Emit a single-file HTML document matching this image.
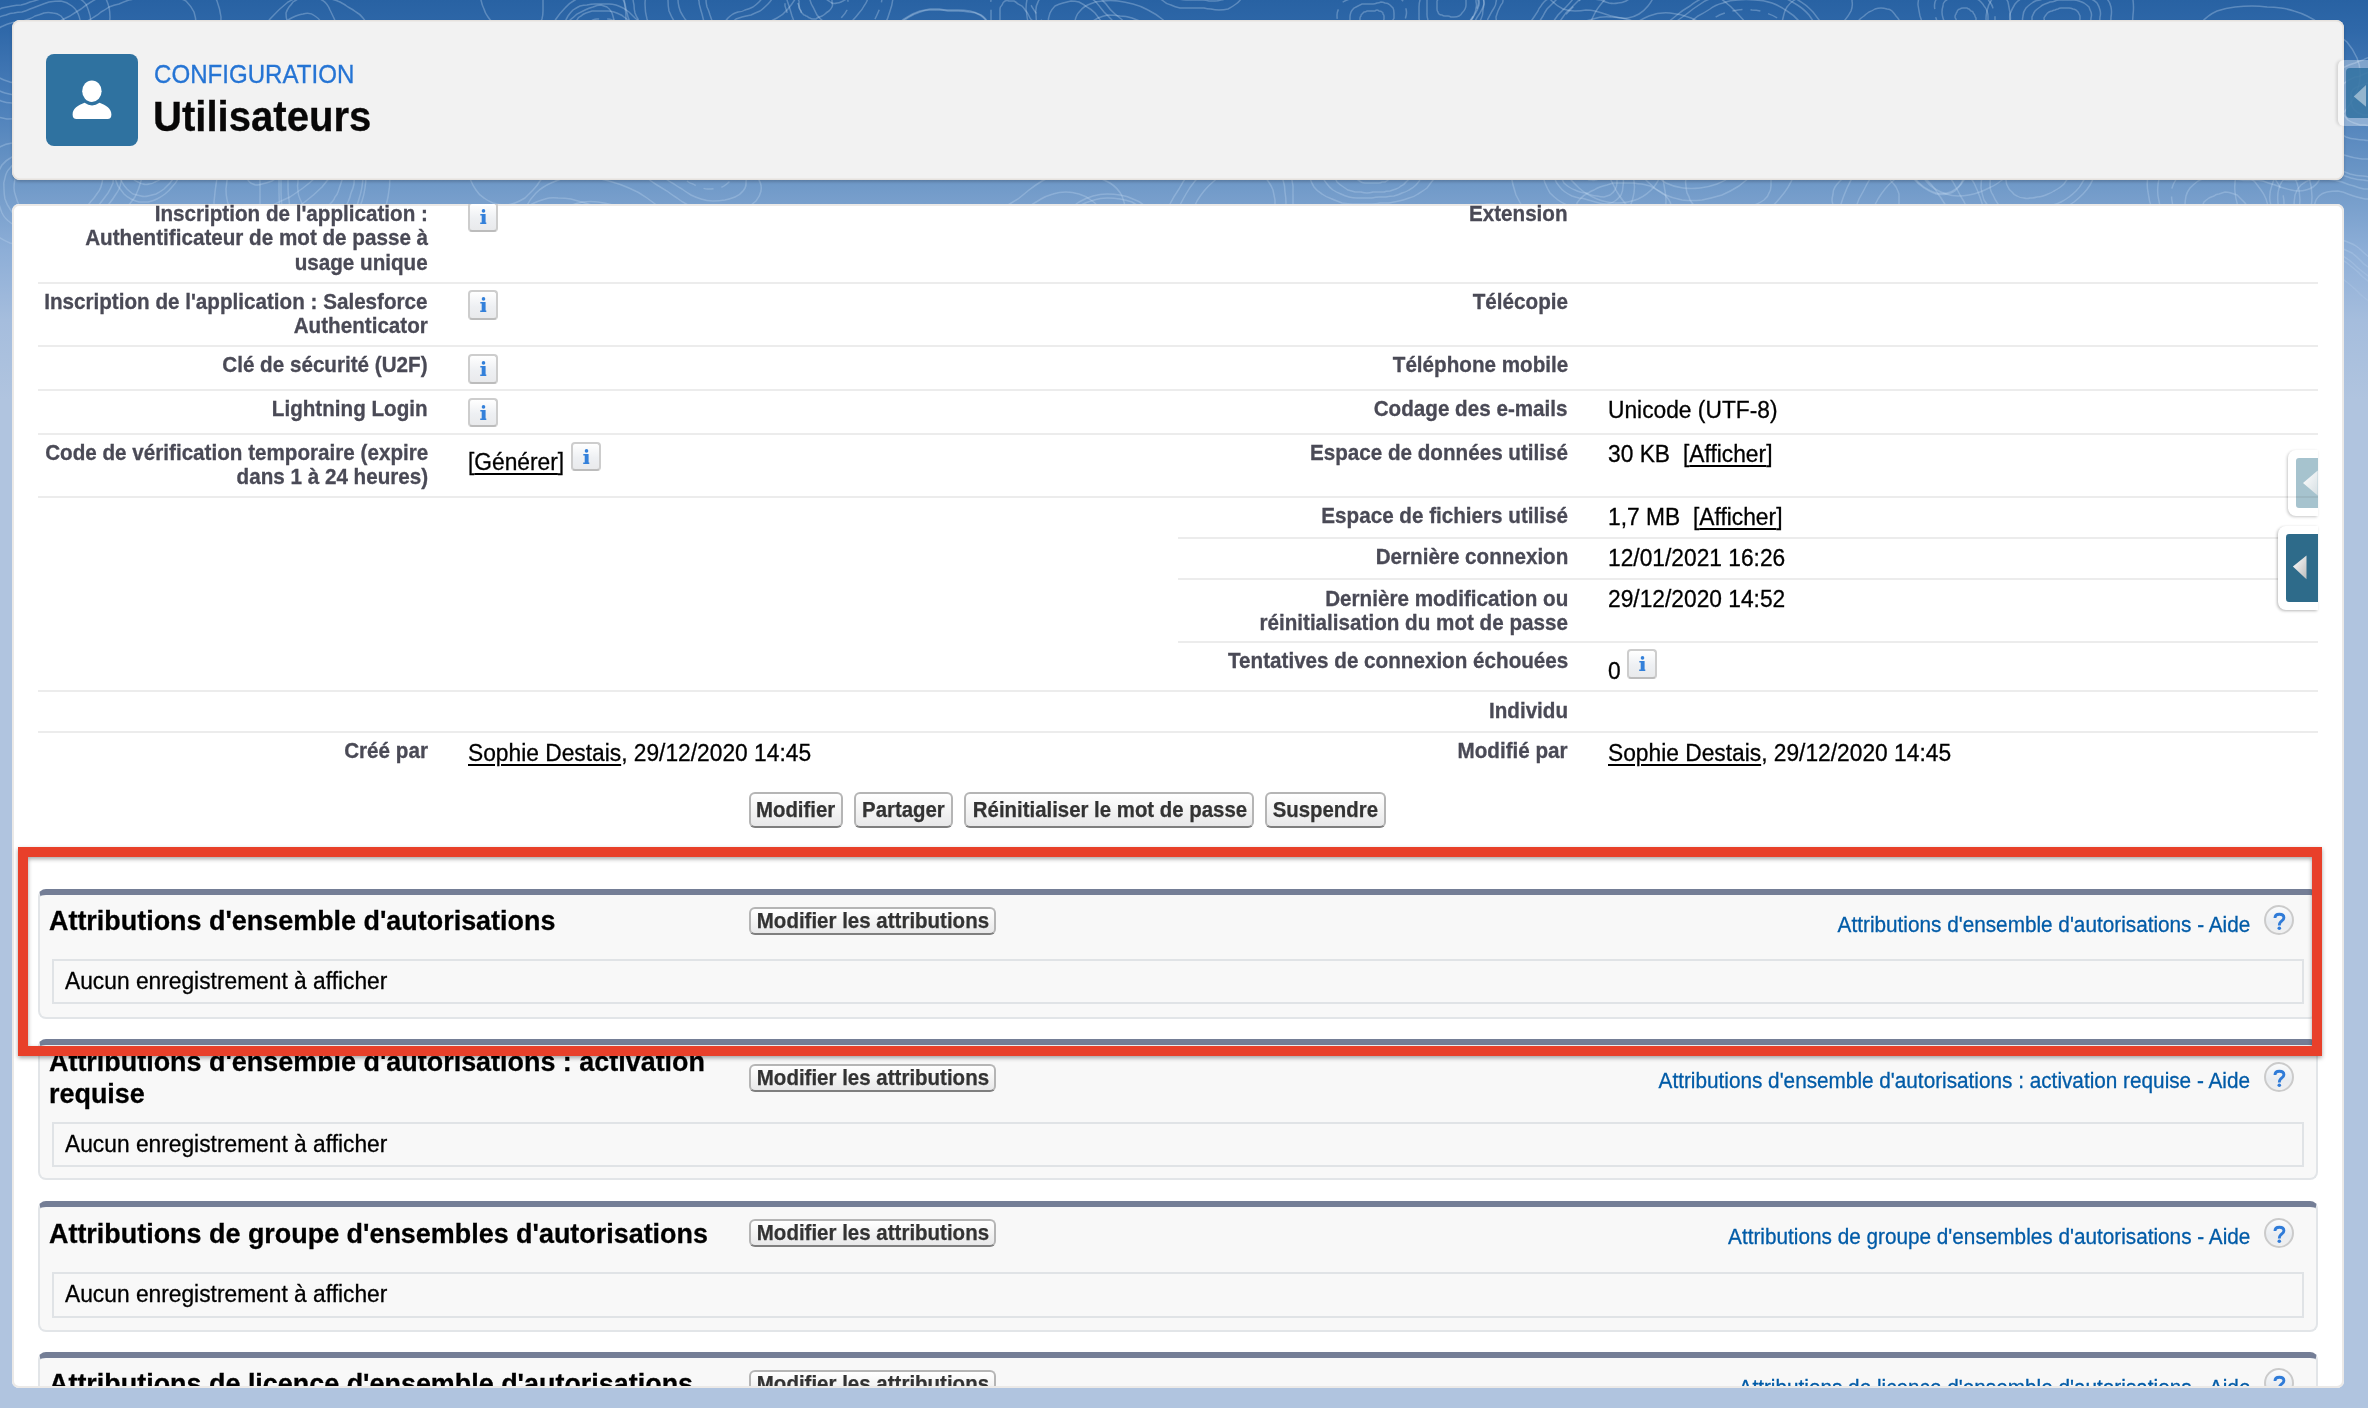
<!DOCTYPE html>
<html><head><meta charset="utf-8"><style>
html,body{margin:0;padding:0;}
body{width:2368px;height:1408px;overflow:hidden;position:relative;font-family:"Liberation Sans",sans-serif;
background:linear-gradient(180deg,#2862a3 0px,#2f68a9 30px,#4a7eb9 100px,#6e98c7 180px,#8daed7 250px,#a5bddd 320px,#b0c4df 400px,#b0c4df 100%);}
.t{position:absolute;white-space:nowrap;-webkit-text-stroke:0.3px currentColor;}
.t u{text-decoration-thickness:1.8px;text-underline-offset:2.6px;}
.r{position:absolute;}
.clip{position:absolute;left:0;top:0;width:2368px;height:1408px;clip-path:inset(204px 24px 22px 12px round 7px 7px 0 0);}
.info{position:absolute;width:26px;height:25.5px;border:2px solid #cdcdcd;border-bottom-color:#bcbcbc;border-radius:4px;background:linear-gradient(180deg,#ffffff 0%,#eef0f3 55%,#e9eaec 100%);}
.info svg{position:absolute;left:-2px;top:-2px;}
.help{position:absolute;width:26px;height:26px;border:2px solid #cbcbcb;border-radius:50%;background:linear-gradient(180deg,#fafbfc 0%,#e9ecf0 60%,#f0f0f0 100%);}
.help svg{position:absolute;left:-2px;top:-2px;}
.btn{position:absolute;box-sizing:border-box;border:2px solid #b5b5b5;border-bottom-color:#7f7f7f;border-radius:6px;
background:linear-gradient(180deg,#ffffff 0%,#f4f4f4 50%,#e8e8e9 100%);color:#333;font-weight:bold;text-align:center;white-space:nowrap;}
.sec{position:absolute;box-sizing:border-box;background:#f8f8f8;border:2px solid #e2e5e8;border-top:6px solid #747e96;border-radius:8px 8px 8px 8px;}
.nrec{position:absolute;box-sizing:border-box;border:2px solid #e0e3e6;background:#f8f8f8;}
.red{position:absolute;box-sizing:content-box;border:10px solid #e8402a;filter:drop-shadow(0 2px 2px rgba(0,0,0,0.35));}
</style></head>
<body>
<svg class="r" style="left:0;top:0" width="2368" height="420" viewBox="0 0 2368 420"><defs><linearGradient id="tf" x1="0" y1="0" x2="0" y2="1"><stop offset="0" stop-color="#fff" stop-opacity="1"/><stop offset="0.55" stop-color="#fff" stop-opacity="0.85"/><stop offset="0.85" stop-color="#fff" stop-opacity="0"/></linearGradient><mask id="tm"><rect width="2368" height="420" fill="url(#tf)"/></mask></defs><g mask="url(#tm)" fill="none" stroke="rgba(210,228,248,0.30)" stroke-width="1.5"><path d="M61 61Q59 65 56 68Q53 71 50 73Q46 75 43 77Q39 78 36 80Q33 81 30 82Q27 83 23 84Q20 84 17 84Q14 83 10 82Q7 81 4 80Q1 79 -2 77Q-6 75 -9 72Q-13 69 -16 65Q-18 61 -19 56Q-19 51 -17 46Q-15 40 -11 36Q-7 33 -3 30Q0 27 3 26Q7 24 11 23Q14 22 17 22Q20 21 23 21Q26 20 29 19Q32 18 35 16Q39 15 44 13Q48 12 53 13Q57 13 61 16Q64 19 66 24Q68 28 68 33Q68 38 67 43Q66 48 65 52Q63 57 61 61Z"/><path d="M72 64Q70 70 66 74Q62 78 57 81Q53 84 48 86Q44 88 39 89Q35 91 31 92Q27 94 23 95Q18 95 14 95Q9 94 5 93Q1 92 -2 90Q-7 88 -11 86Q-16 83 -21 80Q-26 76 -29 70Q-33 65 -33 58Q-34 51 -31 44Q-28 38 -23 32Q-18 27 -13 24Q-8 20 -3 18Q1 16 6 15Q10 13 14 13Q18 12 22 12Q26 11 30 9Q33 8 38 6Q43 4 49 2Q55 1 61 1Q67 2 72 6Q77 10 79 16Q81 21 81 28Q81 35 80 41Q79 47 77 53Q75 59 72 64Z"/><path d="M81 67Q77 73 73 78Q68 83 63 87Q57 90 52 92Q47 95 42 96Q37 98 32 100Q27 102 22 103Q17 104 12 103Q6 103 1 101Q-2 99 -8 97Q-13 95 -18 92Q-24 89 -30 85Q-36 81 -40 74Q-44 68 -44 60Q-45 51 -41 44Q-38 36 -32 29Q-27 23 -20 19Q-14 15 -8 12Q-2 10 2 8Q7 7 12 6Q17 5 21 5Q26 4 30 2Q35 1 40 -1Q46 -3 53 -5Q60 -7 67 -6Q75 -5 80 -1Q86 2 88 9Q91 16 91 24Q91 32 90 39Q89 47 86 54Q84 61 81 67Z"/><path d="M96 72Q92 80 86 87Q80 93 73 98Q66 102 59 105Q53 108 46 110Q40 113 34 115Q27 117 21 118Q14 119 7 119Q1 118 -5 116Q-11 114 -18 111Q-24 108 -32 105Q-39 101 -46 96Q-54 90 -59 82Q-64 73 -65 63Q-65 52 -61 42Q-57 32 -49 24Q-42 16 -34 11Q-26 5 -18 2Q-11 0 -4 -2Q2 -4 8 -5Q14 -6 20 -7Q25 -8 31 -10Q37 -12 45 -16Q52 -19 61 -21Q70 -24 79 -22Q89 -21 96 -16Q103 -10 106 -1Q110 7 110 17Q110 27 108 37Q107 46 104 55Q101 64 96 72Z"/><path d="M38 337Q36 338 35 338Q33 338 32 337Q30 337 29 335Q28 334 28 332Q27 331 27 329Q26 328 26 327Q25 326 25 325Q25 324 25 322Q24 321 25 320Q25 319 25 318Q26 317 26 315Q27 314 28 313Q28 312 30 311Q31 310 32 309Q33 309 35 309Q36 309 38 309Q39 309 41 309Q42 310 44 310Q45 311 46 312Q48 313 48 314Q49 315 49 317Q49 319 48 320Q48 321 47 322Q47 324 47 325Q47 326 46 327Q46 328 46 329Q45 330 45 331Q44 333 43 334Q42 335 41 336Q39 337 38 337Z"/><path d="M95 157Q90 159 85 160Q79 160 74 160Q69 160 65 159Q60 158 55 158Q50 158 44 157Q39 156 33 154Q28 153 24 149Q20 145 19 140Q17 135 17 130Q17 125 18 120Q19 115 21 110Q24 105 28 100Q32 96 37 93Q42 91 48 89Q53 88 58 86Q63 85 67 83Q71 81 76 79Q81 77 87 76Q93 75 98 75Q104 76 108 78Q113 80 117 84Q121 87 124 91Q127 94 130 99Q132 103 133 108Q134 113 132 118Q130 124 127 128Q123 133 120 137Q116 140 112 144Q108 148 104 151Q100 154 95 157Z"/><path d="M102 183Q101 188 99 191Q96 195 94 198Q91 201 89 204Q87 207 84 210Q82 212 78 214Q75 216 72 217Q68 218 64 218Q61 218 57 218Q54 218 50 218Q46 218 42 218Q37 217 33 216Q29 214 25 212Q22 209 19 205Q17 201 16 197Q14 192 14 188Q14 184 15 179Q16 175 19 171Q22 168 26 166Q30 164 34 163Q38 162 42 161Q45 160 48 159Q51 158 54 156Q57 154 61 152Q64 151 69 151Q73 150 77 151Q81 152 85 154Q89 156 93 159Q97 162 99 166Q102 170 103 174Q103 179 102 183Z"/><path d="M113 183Q111 188 108 193Q105 197 102 201Q99 205 96 208Q93 212 90 215Q87 218 83 221Q79 223 75 224Q70 226 66 226Q61 226 57 225Q52 225 48 225Q43 225 38 225Q32 225 27 223Q22 221 17 218Q13 214 10 209Q7 205 5 199Q4 194 4 189Q3 183 5 178Q6 172 10 168Q13 164 18 161Q23 159 28 157Q33 156 38 155Q42 154 45 153Q49 151 52 149Q56 146 61 145Q66 143 71 142Q76 142 81 143Q87 144 92 147Q97 149 101 153Q105 157 109 161Q112 166 113 172Q114 177 113 183Z"/><path d="M121 182Q120 189 116 194Q113 199 109 204Q106 208 102 212Q99 216 95 220Q92 224 87 226Q83 229 77 231Q72 232 67 232Q62 232 57 232Q51 232 46 232Q40 232 34 231Q28 231 22 229Q16 227 11 223Q5 219 2 213Q0 208 -2 201Q-4 195 -4 189Q-5 183 -3 176Q-1 170 2 165Q6 160 12 157Q17 154 23 153Q29 152 34 151Q39 150 43 148Q47 146 51 143Q56 140 61 138Q67 136 73 135Q79 135 85 136Q91 138 97 141Q103 144 108 148Q113 152 117 158Q120 163 122 169Q123 176 121 182Z"/><path d="M141 181Q139 189 135 197Q130 204 125 209Q120 215 116 220Q111 226 107 231Q102 236 96 239Q90 243 83 245Q76 247 70 247Q63 247 56 246Q49 246 42 246Q35 246 26 246Q18 245 10 243Q2 240 -4 235Q-10 229 -15 222Q-19 215 -22 207Q-24 198 -25 190Q-25 182 -23 174Q-20 165 -15 159Q-10 152 -2 148Q4 144 12 143Q20 141 26 139Q33 138 38 136Q43 133 49 129Q55 126 62 123Q69 120 77 119Q85 119 93 121Q101 123 109 126Q117 130 123 136Q130 141 135 149Q140 156 141 164Q143 173 141 181Z"/><path d="M55 48Q57 41 63 36Q68 31 74 28Q81 25 85 22Q90 20 94 17Q98 15 101 12Q105 10 109 7Q114 5 119 4Q123 2 129 0Q135 -1 141 -3Q148 -4 156 -5Q165 -6 172 -4Q180 -2 186 1Q191 6 194 12Q196 18 196 24Q197 29 196 35Q195 40 193 46Q191 51 188 55Q184 59 179 62Q173 65 167 67Q162 68 157 69Q152 70 148 72Q144 74 139 77Q135 80 129 82Q123 85 117 86Q110 87 103 86Q96 86 89 84Q82 82 75 78Q68 75 62 71Q57 66 55 60Q53 54 55 48Z"/><path d="M28 50Q31 42 39 35Q46 28 55 24Q63 19 70 16Q76 12 81 9Q86 5 91 2Q96 -1 102 -4Q108 -6 115 -9Q121 -11 129 -14Q137 -16 146 -18Q155 -21 166 -22Q177 -23 188 -20Q198 -18 206 -12Q214 -6 217 1Q220 9 221 17Q221 25 220 33Q219 40 216 47Q214 54 209 60Q204 66 196 70Q189 74 181 76Q173 78 166 79Q160 81 154 84Q149 86 143 90Q137 94 129 97Q121 101 112 102Q103 103 93 102Q84 102 74 99Q65 96 55 92Q46 88 39 81Q31 75 28 67Q25 58 28 50Z"/><path d="M148 166Q146 166 145 165Q144 165 143 163Q142 162 141 161Q140 160 140 158Q139 157 139 155Q139 153 139 151Q140 150 140 148Q141 147 141 145Q142 144 143 142Q143 141 144 140Q145 138 146 137Q147 136 148 134Q149 133 150 132Q152 131 153 131Q155 130 157 130Q158 131 159 131Q161 132 162 134Q163 135 163 136Q164 138 164 140Q164 141 164 143Q164 145 164 146Q164 148 163 149Q163 151 163 152Q163 154 162 155Q162 157 161 159Q160 160 159 161Q158 163 156 164Q155 165 154 165Q152 166 151 166Q149 166 148 166Z"/><path d="M143 184Q141 184 138 182Q135 181 133 179Q131 177 129 174Q128 171 127 168Q126 165 126 161Q126 158 126 154Q127 151 128 148Q129 145 130 142Q131 139 133 136Q134 133 136 130Q137 127 139 125Q141 122 144 119Q146 117 149 115Q152 113 155 112Q158 111 161 111Q164 112 167 113Q170 115 172 118Q173 120 175 124Q176 127 176 130Q176 134 176 137Q176 141 176 144Q176 147 175 150Q175 153 174 156Q174 159 172 162Q171 166 170 169Q168 172 166 174Q164 177 161 179Q158 181 155 182Q152 184 149 184Q146 185 143 184Z"/><path d="M141 196Q137 195 133 194Q130 192 127 189Q124 186 122 182Q120 179 119 174Q117 170 117 165Q117 161 118 156Q118 152 120 147Q121 143 123 139Q125 135 126 132Q128 128 130 124Q132 120 135 117Q137 113 141 109Q144 106 148 103Q152 101 156 99Q160 98 164 99Q168 99 172 102Q175 104 178 107Q181 111 182 115Q184 120 184 124Q185 129 184 133Q184 138 184 142Q184 146 183 150Q183 154 182 159Q181 163 179 167Q178 171 176 175Q173 179 170 183Q167 186 164 189Q160 192 156 194Q152 195 148 196Q144 197 141 196Z"/><path d="M139 202Q135 201 131 199Q127 197 124 194Q121 190 118 186Q116 182 115 177Q113 172 113 167Q113 162 114 157Q114 152 116 147Q118 142 119 138Q121 134 123 130Q126 125 128 121Q130 117 133 113Q136 109 139 105Q143 101 147 98Q152 95 156 94Q161 92 166 93Q170 94 174 96Q178 98 181 102Q184 106 186 111Q187 116 188 121Q188 127 188 132Q188 136 188 141Q187 146 187 150Q186 155 185 160Q184 164 182 169Q181 174 178 179Q176 183 172 187Q169 191 165 194Q161 197 157 199Q153 201 148 202Q144 202 139 202Z"/><path d="M246 94Q246 96 245 97Q244 98 243 100Q242 101 241 102Q240 103 239 104Q237 105 235 105Q234 105 232 104Q231 104 229 103Q228 102 227 101Q226 101 225 100Q224 99 223 98Q222 97 221 97Q221 96 220 95Q219 94 218 92Q217 91 216 90Q216 88 215 86Q215 85 215 83Q216 81 217 80Q218 78 220 78Q221 77 223 77Q225 77 227 77Q228 78 230 78Q231 78 232 79Q234 79 235 80Q236 80 237 81Q238 82 239 82Q240 83 241 84Q242 84 243 85Q245 87 245 88Q246 89 246 91Q246 93 246 94Z"/><path d="M257 97Q257 100 255 102Q254 104 253 107Q251 109 249 111Q247 113 244 114Q242 115 239 116Q236 116 233 115Q230 114 228 113Q226 111 224 110Q222 108 220 107Q219 106 217 104Q216 103 214 101Q213 100 211 98Q210 96 208 94Q207 92 205 89Q204 87 203 83Q203 80 203 77Q204 74 206 72Q208 69 211 68Q214 67 218 67Q221 67 224 67Q226 68 229 69Q231 69 233 70Q236 71 237 72Q239 73 241 74Q243 75 245 76Q247 77 249 79Q251 80 253 82Q255 84 256 86Q258 89 258 91Q258 94 257 97Z"/><path d="M173 349Q172 347 171 344Q170 342 170 339Q170 336 171 334Q173 331 175 329Q177 326 179 324Q181 322 184 320Q186 318 190 317Q193 317 196 317Q199 317 202 318Q205 318 207 319Q210 320 212 320Q215 320 218 320Q222 319 225 320Q229 321 231 323Q234 324 235 327Q236 330 236 332Q236 335 235 338Q235 341 233 343Q232 346 229 348Q227 350 224 352Q221 353 218 354Q215 355 212 356Q210 357 207 358Q205 360 202 361Q199 362 195 363Q192 363 189 363Q186 362 184 360Q181 358 180 357Q178 355 176 353Q175 351 173 349Z" stroke-dasharray="10 8"/><path d="M162 353Q159 350 158 346Q157 343 157 339Q157 335 159 332Q161 328 164 325Q166 321 169 318Q172 315 176 313Q180 310 185 309Q189 308 194 308Q198 308 202 309Q206 310 209 311Q213 312 217 312Q220 312 225 312Q230 312 234 313Q239 314 243 316Q246 319 248 322Q250 326 250 330Q250 334 249 338Q248 342 246 345Q244 349 240 352Q237 355 233 357Q228 359 224 361Q220 362 216 363Q213 364 209 366Q206 368 202 370Q197 372 193 372Q188 373 184 372Q180 371 176 369Q173 366 171 364Q168 361 166 358Q164 356 162 353Z"/><path d="M153 356Q151 352 149 348Q147 344 148 339Q148 335 150 330Q153 326 156 322Q159 318 163 314Q166 310 171 307Q176 304 181 303Q186 301 192 302Q197 302 202 303Q207 305 211 306Q215 307 220 307Q224 307 230 306Q235 306 241 307Q247 308 251 312Q256 315 258 319Q260 323 260 328Q260 333 259 338Q257 342 255 347Q252 351 248 355Q244 359 239 361Q234 364 229 365Q224 367 219 368Q215 370 211 372Q206 374 201 376Q196 379 191 379Q185 380 180 379Q175 378 171 375Q167 372 164 369Q161 366 159 362Q156 359 153 356Z"/><path d="M136 362Q133 357 131 351Q128 346 129 340Q130 333 132 328Q135 322 140 316Q144 311 149 306Q154 301 160 297Q166 293 174 291Q181 288 188 289Q196 289 202 291Q208 293 214 294Q219 295 226 295Q232 295 239 295Q247 295 255 297Q263 298 268 302Q274 306 277 312Q280 318 280 324Q280 331 278 337Q276 344 273 350Q270 356 264 361Q259 366 252 369Q245 372 238 374Q231 377 226 379Q220 381 214 383Q208 386 201 389Q194 392 187 394Q179 395 172 393Q165 391 160 388Q155 384 151 379Q147 375 144 371Q140 366 136 362Z"/><path d="M131 364Q127 358 125 352Q123 346 123 340Q124 333 127 327Q130 320 135 314Q139 309 145 303Q150 298 157 293Q164 289 171 287Q179 284 187 285Q195 285 202 287Q209 289 215 291Q221 292 228 292Q234 292 242 292Q251 292 259 293Q267 295 274 299Q280 304 283 310Q286 316 286 323Q286 330 284 337Q282 344 279 351Q275 357 269 363Q263 368 256 372Q248 375 241 377Q234 380 227 382Q221 384 215 387Q208 390 201 393Q194 397 186 398Q177 399 170 397Q163 396 157 392Q151 388 147 383Q143 378 139 373Q135 369 131 364Z"/><path d="M272 159Q269 160 266 159Q264 159 263 155Q261 152 262 148Q262 143 263 139Q264 135 264 131Q265 127 265 123Q266 119 266 115Q267 111 268 107Q269 102 271 97Q273 93 276 89Q279 84 282 81Q285 77 289 74Q292 72 295 71Q298 71 301 73Q303 74 304 77Q306 80 307 83Q308 85 309 87Q310 88 312 90Q314 91 316 93Q318 96 319 99Q319 103 319 108Q318 113 316 117Q314 122 312 127Q309 131 307 135Q304 139 301 142Q298 145 295 148Q292 150 289 151Q287 153 284 154Q281 156 278 157Q275 159 272 159Z"/><path d="M266 174Q262 175 259 174Q255 173 254 169Q252 165 252 159Q252 153 254 147Q255 141 256 136Q257 130 257 125Q258 121 259 115Q259 109 261 103Q263 97 265 91Q268 85 272 79Q276 73 280 68Q284 63 289 60Q293 57 297 56Q301 55 305 58Q308 60 309 64Q311 68 313 71Q314 75 316 77Q318 79 320 81Q323 83 326 86Q328 89 329 94Q330 99 329 105Q328 111 325 118Q323 124 319 130Q316 136 313 141Q309 147 305 151Q301 155 297 158Q293 161 290 163Q286 165 282 167Q278 169 274 171Q270 173 266 174Z"/><path d="M262 184Q257 186 253 184Q249 183 247 178Q245 173 246 166Q246 159 247 152Q249 145 250 139Q251 133 252 127Q252 121 253 115Q254 108 256 101Q258 94 261 87Q265 79 269 72Q273 66 278 60Q283 54 288 50Q294 46 299 45Q304 45 307 47Q311 50 313 55Q315 59 317 63Q318 67 321 70Q323 72 326 74Q329 77 332 80Q335 84 336 90Q337 96 336 103Q334 110 331 118Q329 126 325 133Q321 140 317 146Q313 152 308 157Q303 162 299 166Q294 169 290 172Q285 174 281 176Q276 178 272 181Q267 183 262 184Z"/><path d="M250 215Q243 217 237 215Q231 213 229 206Q226 199 226 189Q227 178 229 168Q231 158 232 149Q234 140 235 132Q236 123 237 114Q238 105 241 94Q244 84 249 73Q253 63 260 53Q266 43 273 34Q280 26 288 20Q296 15 303 14Q310 12 315 16Q321 20 324 27Q327 33 329 39Q331 45 335 49Q338 53 343 56Q347 59 351 64Q355 69 357 78Q358 86 357 97Q355 108 351 119Q346 130 341 140Q335 150 329 159Q323 168 317 176Q310 183 303 188Q296 193 290 197Q283 200 277 203Q271 206 264 210Q257 213 250 215Z"/><path d="M243 234Q235 236 228 233Q221 231 217 223Q214 214 214 202Q215 190 217 178Q220 166 222 155Q224 145 225 135Q226 125 227 114Q229 102 232 90Q235 78 241 65Q247 52 254 41Q262 29 270 19Q279 9 288 2Q297 -3 306 -5Q314 -6 320 -1Q327 2 330 10Q334 18 337 25Q339 32 343 36Q347 41 353 44Q358 48 363 54Q368 60 370 70Q371 80 369 93Q367 106 362 119Q357 132 351 144Q344 156 337 167Q330 178 322 187Q314 195 306 201Q298 208 290 212Q282 216 275 219Q267 223 259 227Q251 231 243 234Z"/><path d="M280 360Q278 361 276 361Q274 362 271 362Q268 362 266 362Q263 361 260 359Q258 357 257 354Q256 351 257 347Q257 344 259 341Q261 338 263 336Q265 333 267 331Q268 330 270 328Q271 326 273 325Q274 323 276 322Q278 321 279 320Q281 319 283 319Q285 318 287 318Q289 318 292 318Q294 318 296 319Q298 320 299 322Q301 323 302 325Q304 328 305 330Q306 332 307 335Q308 338 308 341Q308 344 307 347Q307 350 304 353Q302 355 300 356Q297 357 295 358Q292 358 290 358Q288 358 286 358Q285 358 283 359Q282 359 280 360Z" stroke-dasharray="10 8"/><path d="M278 372Q275 373 271 374Q268 375 263 375Q259 375 255 374Q250 373 247 370Q243 367 241 362Q240 357 241 351Q242 346 244 341Q247 336 250 332Q254 329 256 326Q259 323 262 320Q264 318 266 315Q269 313 272 311Q274 309 277 308Q280 306 283 306Q286 305 290 304Q293 304 297 304Q300 304 303 306Q306 307 309 310Q312 313 314 316Q316 320 318 323Q320 327 321 332Q323 336 323 341Q323 346 322 351Q321 356 317 360Q314 364 310 365Q305 367 301 368Q297 368 294 368Q291 368 288 369Q286 369 283 370Q281 371 278 372Z"/><path d="M275 386Q271 388 266 389Q260 391 254 391Q248 391 241 390Q235 388 230 384Q224 379 222 372Q219 365 221 356Q222 348 226 341Q230 334 235 328Q240 323 244 319Q248 315 251 311Q255 307 259 303Q262 300 266 297Q270 294 274 292Q279 290 283 289Q288 288 293 287Q298 286 303 287Q308 287 313 290Q317 292 321 296Q325 300 328 305Q331 310 334 315Q337 321 339 327Q341 334 342 341Q342 349 340 356Q338 363 333 369Q328 374 322 377Q316 380 310 380Q304 381 299 381Q295 381 291 382Q287 382 283 383Q279 385 275 386Z"/><path d="M274 390Q270 392 264 394Q258 395 251 396Q245 396 238 394Q230 393 225 388Q219 383 216 375Q213 367 215 358Q216 349 221 341Q225 333 230 327Q236 321 240 317Q245 312 249 308Q252 304 256 300Q260 296 264 293Q269 290 274 288Q278 286 283 284Q288 283 294 282Q299 281 305 282Q310 282 315 285Q321 287 325 292Q329 296 332 301Q336 307 339 313Q342 319 344 326Q346 333 347 341Q348 349 345 357Q343 365 338 371Q332 377 326 380Q319 383 312 384Q306 385 301 385Q296 385 291 385Q287 386 283 387Q279 389 274 390Z"/><path d="M319 60Q315 58 311 54Q308 51 306 47Q304 44 301 41Q299 37 296 34Q294 31 291 28Q288 24 287 21Q286 17 286 13Q287 10 289 7Q291 5 293 2Q296 0 298 -1Q301 -3 305 -5Q308 -6 313 -6Q317 -6 322 -5Q327 -3 331 -1Q336 0 340 2Q344 4 348 7Q352 9 356 12Q360 14 363 18Q366 21 367 25Q368 29 368 32Q368 35 368 38Q369 41 369 45Q370 48 370 52Q370 56 368 59Q366 62 363 63Q359 65 355 66Q351 66 347 66Q342 66 338 66Q333 66 328 64Q323 63 319 60Z"/><path d="M328 206Q326 208 323 210Q320 212 317 212Q314 213 310 212Q307 210 304 207Q302 204 300 199Q298 195 298 191Q297 186 298 182Q298 179 298 175Q298 172 297 169Q297 167 296 163Q296 160 295 156Q295 153 295 149Q296 145 297 141Q298 137 300 134Q302 131 305 130Q308 128 311 129Q314 129 317 132Q320 134 323 137Q326 139 328 142Q330 145 332 147Q334 150 336 153Q338 155 339 159Q341 162 342 166Q342 169 342 173Q342 177 342 180Q341 183 340 186Q339 189 338 192Q337 195 335 197Q334 200 332 202Q330 204 328 206Z"/><path d="M333 223Q330 226 325 229Q321 231 317 232Q312 233 307 231Q302 229 298 225Q294 220 292 213Q289 207 289 200Q288 193 288 188Q288 182 288 178Q288 173 288 169Q287 164 286 160Q285 155 285 149Q284 144 285 138Q285 132 287 126Q288 120 291 116Q295 111 299 110Q303 108 308 108Q313 109 318 113Q322 116 326 120Q329 124 333 128Q336 132 339 136Q342 140 345 144Q348 148 350 153Q352 158 353 163Q355 168 355 174Q354 179 354 184Q353 189 351 193Q350 198 348 202Q346 206 344 210Q342 213 339 217Q336 220 333 223Z"/><path d="M336 236Q332 240 327 243Q322 246 317 247Q311 248 305 245Q299 243 294 237Q289 231 286 223Q283 215 282 207Q281 199 281 192Q281 185 281 179Q281 173 281 168Q280 163 279 157Q278 151 277 144Q277 137 277 130Q277 123 279 116Q281 108 285 103Q289 97 295 95Q300 93 306 94Q312 95 318 99Q323 103 328 108Q332 113 336 118Q340 123 344 128Q348 132 351 137Q355 142 358 148Q361 154 362 161Q363 168 363 174Q363 181 362 187Q361 193 359 199Q358 204 355 209Q353 214 350 219Q347 223 344 228Q341 232 336 236Z"/><path d="M338 240Q333 244 328 247Q323 250 317 252Q310 253 304 250Q297 248 292 241Q287 235 284 227Q280 218 280 209Q279 200 279 193Q279 186 279 180Q279 174 278 168Q278 162 277 156Q275 150 275 142Q274 135 274 127Q275 120 277 112Q279 104 283 99Q287 93 293 90Q299 88 305 89Q312 90 318 94Q324 99 328 104Q333 109 338 115Q342 120 346 125Q350 130 354 135Q357 140 360 147Q363 153 365 161Q366 168 366 175Q366 182 365 188Q364 195 362 201Q360 206 358 212Q355 217 352 222Q349 227 346 231Q342 236 338 240Z"/><path d="M348 273Q341 279 333 284Q325 289 316 290Q307 292 297 288Q288 285 280 275Q272 266 267 253Q263 241 261 228Q260 215 260 204Q260 193 260 184Q260 175 259 166Q258 158 257 149Q255 139 254 129Q253 118 254 106Q254 95 258 83Q261 72 267 64Q273 55 281 51Q290 47 299 49Q309 51 318 57Q327 64 334 72Q341 80 347 87Q354 95 359 102Q365 110 371 118Q377 126 381 135Q386 145 388 155Q390 166 390 176Q390 187 388 197Q386 206 384 215Q381 224 377 231Q374 239 369 247Q365 254 359 260Q354 267 348 273Z"/><path d="M376 126Q374 124 372 122Q371 119 370 117Q370 114 370 111Q371 109 372 106Q373 104 375 102Q377 100 379 98Q380 96 383 95Q385 94 387 93Q389 93 391 93Q394 93 396 93Q398 94 399 94Q401 95 403 95Q405 95 408 95Q410 95 413 95Q415 96 418 98Q420 99 422 101Q423 103 424 106Q425 109 425 112Q425 115 424 117Q423 120 420 122Q418 124 415 125Q413 126 410 126Q407 127 405 127Q403 127 401 127Q400 128 398 128Q396 129 394 130Q392 131 389 131Q387 131 385 130Q382 130 380 129Q378 128 376 126Z"/><path d="M360 137Q356 133 354 129Q351 125 350 121Q349 116 350 111Q351 106 354 102Q356 98 359 94Q362 91 365 88Q368 85 372 83Q375 80 379 79Q383 78 387 79Q391 79 395 80Q398 81 401 81Q404 82 408 82Q411 82 416 82Q420 82 424 83Q429 84 433 87Q437 90 440 93Q443 97 445 102Q447 107 447 112Q446 117 444 122Q442 127 438 130Q434 134 429 135Q424 137 420 138Q415 138 411 138Q408 138 405 139Q402 140 399 141Q395 143 392 144Q388 145 384 145Q380 146 376 145Q371 144 367 142Q363 140 360 137Z"/><path d="M414 298Q414 300 413 301Q412 303 411 304Q409 305 407 306Q406 307 403 307Q401 308 398 308Q396 307 393 307Q391 306 389 305Q386 304 384 302Q382 301 380 300Q378 299 376 297Q374 296 372 294Q371 293 369 291Q367 289 366 287Q364 285 364 282Q363 280 364 278Q364 276 366 275Q368 274 370 273Q372 272 374 272Q377 272 379 272Q382 272 384 272Q386 273 388 273Q390 273 393 273Q395 274 397 275Q400 275 402 276Q405 277 407 279Q409 281 411 283Q413 285 414 287Q415 289 415 291Q415 293 415 294Q415 296 414 298Z"/><path d="M429 304Q428 306 426 309Q425 311 423 313Q420 315 418 317Q415 318 411 319Q407 319 403 319Q399 319 395 318Q391 316 387 315Q384 313 380 311Q377 309 374 307Q371 305 368 302Q365 300 361 297Q358 295 355 292Q352 289 350 285Q348 282 347 278Q347 275 348 272Q348 269 351 267Q354 264 357 263Q361 262 365 262Q369 261 372 262Q376 262 380 262Q383 263 387 263Q390 264 394 264Q398 265 402 266Q406 267 410 269Q414 271 417 273Q421 276 423 279Q426 282 428 285Q429 289 430 292Q430 295 430 298Q430 301 429 304Z"/><path d="M447 311Q445 315 443 318Q441 322 438 325Q435 328 430 330Q426 332 421 333Q415 334 409 333Q403 333 397 331Q391 329 386 327Q380 324 375 321Q370 318 366 315Q361 312 357 309Q352 305 348 302Q343 298 339 293Q334 289 331 284Q328 279 327 274Q326 268 327 264Q329 259 332 256Q336 253 341 251Q347 249 352 249Q358 249 364 249Q369 249 375 250Q380 250 385 251Q390 252 396 253Q401 254 407 255Q413 257 419 259Q424 262 430 266Q435 270 439 274Q443 279 445 284Q447 289 448 293Q449 298 448 302Q448 307 447 311Z"/><path d="M448 75Q447 73 447 71Q447 69 448 67Q449 65 450 63Q451 61 453 60Q454 59 456 58Q458 57 460 56Q462 55 464 55Q466 55 468 54Q470 54 472 54Q474 54 476 54Q478 54 480 54Q482 55 484 55Q486 56 488 57Q490 58 492 59Q494 61 495 63Q496 65 496 67Q495 69 494 71Q493 73 491 75Q490 76 488 78Q486 79 484 80Q482 81 480 81Q478 82 477 82Q475 83 473 83Q471 84 469 84Q467 84 465 85Q463 85 461 85Q459 84 456 84Q454 83 453 82Q451 80 450 79Q449 77 448 75Z"/><path d="M434 78Q434 75 434 72Q434 69 435 66Q435 62 437 60Q439 57 442 55Q445 52 448 51Q451 49 454 48Q458 47 461 47Q464 46 467 46Q470 45 473 45Q476 45 479 45Q482 45 485 46Q489 46 492 47Q495 48 499 49Q502 51 505 53Q508 56 509 59Q511 62 510 66Q510 69 508 72Q507 76 504 78Q501 81 498 83Q495 85 492 86Q489 88 486 89Q483 90 480 90Q477 91 474 92Q472 92 468 93Q465 94 462 94Q459 94 455 94Q451 94 448 93Q444 91 442 89Q439 87 437 84Q435 82 434 78Z"/><path d="M411 84Q409 79 409 74Q409 69 411 63Q413 58 416 54Q419 49 423 45Q428 41 433 39Q438 36 444 35Q449 33 454 32Q459 31 464 31Q469 30 474 30Q479 29 484 29Q489 30 495 30Q500 31 506 33Q512 34 517 37Q523 39 527 43Q532 47 534 53Q537 58 536 64Q536 69 533 75Q530 80 525 84Q521 89 516 92Q511 95 506 97Q501 100 496 101Q491 103 487 104Q482 106 477 107Q472 108 467 109Q462 110 456 110Q451 111 445 110Q439 110 433 108Q427 106 423 102Q418 99 415 94Q412 90 411 84Z"/><path d="M400 87Q399 81 399 75Q399 69 401 62Q402 56 406 51Q410 45 415 41Q421 37 427 34Q433 31 439 29Q445 27 451 26Q457 25 463 24Q469 23 475 23Q481 22 487 23Q493 23 499 24Q505 24 512 26Q519 28 525 31Q532 34 537 39Q543 44 545 50Q548 56 548 63Q547 69 544 76Q540 82 535 87Q530 92 524 96Q518 100 512 102Q506 105 501 107Q495 109 489 111Q484 112 478 113Q472 115 466 116Q460 117 454 117Q447 118 440 118Q433 117 426 115Q420 112 414 108Q409 104 406 99Q402 93 400 87Z"/><path d="M424 257Q423 255 423 253Q423 251 423 249Q423 248 423 246Q423 244 423 243Q424 241 424 240Q424 238 424 237Q425 235 425 233Q426 232 427 230Q428 228 429 227Q431 225 432 224Q434 223 436 223Q437 222 439 221Q441 220 443 220Q445 219 447 219Q449 219 450 220Q452 220 453 222Q454 224 454 226Q454 228 453 230Q453 232 452 234Q451 236 450 237Q449 239 448 240Q447 241 446 243Q445 244 445 245Q444 247 443 249Q443 251 441 253Q440 256 438 258Q436 260 434 261Q432 261 430 261Q428 261 426 260Q425 258 424 257Z"/><path d="M525 29Q522 29 519 29Q516 30 513 30Q510 31 506 30Q503 30 500 28Q496 26 493 23Q490 20 488 17Q485 13 484 9Q482 5 481 0Q481 -3 482 -8Q483 -12 486 -15Q489 -18 491 -20Q494 -22 496 -24Q498 -26 499 -29Q500 -32 502 -35Q503 -39 506 -42Q508 -46 511 -47Q515 -49 519 -49Q522 -49 526 -47Q530 -45 533 -43Q536 -40 539 -36Q541 -32 542 -28Q543 -23 543 -19Q543 -15 543 -11Q543 -7 543 -3Q543 0 543 3Q543 7 543 11Q543 15 542 19Q540 23 538 25Q535 27 532 28Q528 28 525 29Z"/><path d="M504 205Q499 205 493 203Q488 201 484 198Q479 195 476 190Q473 186 471 181Q469 176 468 171Q468 165 468 161Q468 156 467 152Q466 148 464 143Q463 139 460 133Q458 127 457 119Q456 112 458 105Q460 98 465 93Q469 88 475 85Q481 83 488 83Q494 84 500 86Q505 89 510 93Q514 97 517 101Q520 106 523 110Q525 114 528 117Q530 120 534 123Q537 126 541 129Q545 133 547 138Q550 143 551 149Q552 155 551 160Q549 166 547 171Q544 177 540 181Q537 186 533 190Q529 194 525 198Q520 201 515 203Q510 205 504 205Z"/><path d="M563 95Q561 92 559 89Q558 86 557 82Q556 79 556 75Q555 72 556 68Q556 65 556 61Q557 58 557 54Q557 50 558 46Q558 42 560 37Q561 33 564 28Q567 24 570 20Q574 17 577 14Q581 12 585 10Q589 8 593 7Q597 5 601 5Q604 6 607 7Q610 9 612 13Q613 16 614 20Q614 24 614 28Q614 32 614 36Q614 39 613 43Q613 47 612 50Q611 54 609 58Q608 61 606 65Q605 69 603 74Q601 79 598 83Q596 88 592 93Q588 97 584 99Q579 102 575 102Q571 102 568 100Q565 98 563 95Z"/><path d="M554 112Q551 108 549 103Q547 99 546 94Q545 89 544 84Q544 80 544 75Q545 70 545 65Q546 60 546 55Q547 50 547 44Q548 38 550 31Q552 25 556 19Q560 13 565 8Q569 3 575 0Q580 -3 585 -6Q591 -8 596 -10Q602 -12 607 -12Q612 -12 616 -9Q620 -7 622 -2Q625 2 625 7Q626 13 626 18Q626 24 625 29Q625 34 624 39Q624 44 622 49Q621 55 619 60Q617 65 615 71Q613 76 610 83Q608 89 604 96Q600 102 595 108Q589 114 583 118Q577 121 572 121Q566 121 562 118Q557 116 554 112Z"/><path d="M523 275Q521 273 521 271Q520 269 520 267Q519 265 519 263Q519 260 520 258Q520 256 521 254Q523 252 525 251Q526 250 528 249Q530 248 532 247Q533 246 535 245Q536 244 538 243Q540 242 542 242Q544 241 546 241Q548 241 550 242Q552 242 554 243Q556 243 558 244Q560 245 562 247Q564 248 564 251Q565 253 564 256Q563 258 562 260Q560 262 558 264Q557 266 556 267Q554 268 553 270Q551 271 550 272Q548 273 546 274Q545 274 543 275Q541 275 540 276Q538 277 535 278Q533 279 531 279Q528 279 526 278Q524 277 523 275Z"/><path d="M510 286Q507 283 506 280Q505 276 505 272Q504 269 504 265Q504 261 505 258Q506 254 508 251Q510 248 513 245Q516 243 520 241Q523 240 525 238Q528 237 531 235Q533 233 536 232Q539 230 543 229Q546 228 549 228Q553 229 556 229Q559 230 563 231Q567 232 571 233Q574 235 577 238Q580 241 581 245Q582 249 580 253Q579 257 576 261Q574 264 571 267Q568 270 566 272Q564 275 561 277Q559 279 556 281Q554 283 551 284Q548 285 545 286Q542 287 539 288Q536 289 532 291Q528 292 524 292Q519 293 516 291Q512 290 510 286Z" stroke-dasharray="10 8"/><path d="M499 296Q496 292 494 287Q493 282 492 277Q492 272 492 267Q491 262 492 257Q493 252 496 248Q499 243 504 240Q508 237 512 235Q516 233 520 231Q524 229 527 227Q531 224 535 222Q539 220 543 218Q548 217 552 218Q557 218 561 219Q566 220 571 221Q576 222 581 224Q586 227 590 230Q594 234 595 240Q596 245 594 251Q592 257 589 261Q585 266 582 270Q578 274 575 277Q572 280 569 283Q565 286 562 288Q558 291 554 292Q550 293 546 295Q542 296 538 298Q534 300 529 302Q523 304 517 304Q512 304 507 302Q502 300 499 296Z"/><path d="M479 313Q474 307 472 300Q470 292 469 285Q468 278 468 270Q468 263 469 256Q471 249 475 242Q479 236 486 231Q492 227 499 223Q505 220 510 217Q516 215 521 211Q526 207 532 204Q538 201 545 199Q551 197 558 198Q565 198 571 199Q578 201 585 203Q593 205 600 208Q608 211 614 217Q619 222 621 230Q623 238 620 247Q617 255 612 262Q607 269 601 275Q596 281 591 286Q587 290 582 295Q577 299 572 302Q566 306 561 308Q555 310 549 312Q543 314 537 316Q530 319 523 322Q515 325 506 325Q498 326 491 323Q483 320 479 313Z"/><path d="M603 43Q602 43 601 42Q599 42 598 41Q597 40 596 39Q595 38 595 37Q594 35 594 34Q594 33 594 31Q595 30 595 29Q596 28 597 27Q598 27 599 26Q600 26 601 26Q602 26 603 26Q605 26 606 26Q607 26 608 26Q609 26 610 26Q611 26 612 27Q613 27 614 28Q615 29 616 30Q617 31 618 32Q619 33 619 34Q620 35 621 36Q621 38 621 39Q621 40 620 41Q619 42 618 43Q617 44 616 45Q615 45 614 45Q613 45 612 45Q610 45 609 45Q608 44 607 44Q606 44 605 43Q604 43 603 43Z" stroke-dasharray="10 8"/><path d="M600 48Q598 48 596 47Q594 46 592 45Q590 44 588 42Q586 40 586 38Q585 36 585 33Q585 31 585 29Q586 27 587 25Q588 23 589 22Q591 21 593 20Q595 19 597 19Q599 19 601 19Q603 19 604 19Q606 19 608 19Q610 19 612 20Q614 20 615 21Q617 22 619 23Q621 24 622 26Q624 27 625 29Q627 31 628 33Q629 35 630 37Q630 39 630 42Q630 44 629 46Q628 48 626 49Q624 50 623 51Q621 52 619 52Q616 52 614 52Q612 52 611 51Q609 51 607 50Q605 50 604 49Q602 49 600 48Z" stroke-dasharray="10 8"/><path d="M597 54Q594 54 590 53Q587 52 584 50Q581 48 579 45Q576 42 575 39Q574 36 574 32Q574 29 574 26Q575 23 577 20Q578 17 581 16Q583 14 586 13Q589 12 592 11Q595 11 597 11Q600 11 603 11Q606 11 608 11Q611 11 614 12Q617 13 619 14Q622 15 624 17Q627 19 629 21Q631 24 634 26Q636 29 638 32Q640 35 641 38Q642 42 641 45Q641 48 639 51Q638 54 635 56Q633 57 630 59Q627 60 624 60Q621 61 618 61Q615 60 612 59Q609 58 607 58Q604 57 602 56Q599 55 597 54Z"/><path d="M593 60Q590 59 586 58Q582 56 578 54Q574 52 571 48Q568 44 566 40Q564 36 564 31Q564 27 565 23Q566 19 568 16Q570 13 573 10Q576 8 580 6Q584 5 587 5Q591 4 595 4Q598 4 602 4Q605 4 609 4Q612 4 616 5Q619 6 623 8Q626 10 629 12Q632 15 635 18Q638 20 641 24Q644 27 646 31Q649 35 650 39Q651 43 651 47Q650 52 648 55Q646 59 643 61Q640 64 636 65Q632 67 629 67Q625 68 621 68Q617 67 613 66Q610 65 607 64Q603 62 600 62Q597 61 593 60Z"/><path d="M663 294Q662 298 659 300Q655 303 651 304Q647 305 643 305Q638 305 634 304Q630 302 626 300Q622 298 618 296Q615 294 612 292Q609 290 605 288Q602 287 598 285Q594 283 591 280Q587 277 585 273Q582 269 581 265Q579 261 579 258Q579 254 580 250Q581 246 583 243Q584 240 587 237Q589 235 593 233Q596 232 600 231Q604 231 608 231Q612 232 616 233Q620 234 624 235Q628 237 632 239Q635 242 638 245Q641 248 643 251Q645 254 647 257Q650 260 652 263Q655 266 657 270Q660 273 662 278Q664 282 665 286Q665 291 663 294Z"/><path d="M677 303Q675 308 671 311Q666 314 661 316Q656 317 650 317Q644 317 638 315Q632 313 627 311Q622 308 617 305Q613 302 609 300Q605 297 600 295Q596 293 591 290Q586 288 581 284Q576 280 573 275Q569 270 568 265Q566 259 566 254Q566 249 567 244Q568 240 570 235Q572 231 576 228Q579 224 583 222Q588 220 593 220Q599 219 604 220Q610 220 615 221Q620 223 625 225Q630 227 635 230Q640 234 643 237Q647 241 650 245Q653 249 656 253Q659 257 662 261Q665 265 669 270Q673 275 675 281Q678 287 679 292Q679 298 677 303Z"/><path d="M692 312Q689 318 684 322Q678 326 672 328Q665 330 657 330Q650 330 643 328Q635 326 629 322Q622 319 616 315Q611 312 606 308Q600 305 595 302Q589 300 583 296Q577 293 571 288Q565 283 560 277Q556 271 554 264Q551 257 551 251Q551 244 553 238Q554 232 557 227Q560 222 564 217Q568 213 574 210Q579 208 586 207Q593 206 600 207Q606 208 613 209Q620 211 627 214Q633 217 639 221Q645 225 649 230Q654 234 658 239Q662 245 665 250Q669 254 673 260Q677 265 682 271Q686 277 690 284Q693 292 694 299Q694 306 692 312Z"/><path d="M697 316Q694 322 689 327Q683 331 676 333Q668 335 660 335Q652 335 644 332Q636 330 629 327Q622 323 616 319Q610 315 604 312Q599 308 593 305Q587 302 580 298Q573 295 567 290Q560 284 555 278Q550 271 548 264Q546 256 546 249Q546 242 547 236Q549 230 552 224Q555 218 559 213Q564 209 570 206Q576 203 583 202Q590 201 598 202Q605 203 613 205Q620 207 627 210Q634 213 640 217Q647 221 652 226Q657 232 661 237Q665 243 669 248Q672 253 677 259Q682 265 687 271Q691 278 695 286Q699 294 700 301Q700 309 697 316Z"/><path d="M726 334Q722 343 714 349Q706 355 696 358Q686 360 675 360Q664 360 653 357Q642 354 632 349Q622 344 614 338Q606 333 598 328Q591 323 582 319Q574 315 565 310Q555 305 546 298Q537 291 531 281Q524 272 521 262Q518 252 518 243Q518 233 520 224Q522 215 526 207Q530 199 536 193Q542 187 551 183Q559 179 569 177Q579 176 589 177Q599 178 609 181Q620 184 629 188Q639 192 647 198Q656 204 663 211Q670 218 676 226Q681 233 686 241Q692 248 698 256Q704 264 711 273Q718 282 723 293Q728 303 729 314Q730 325 726 334Z"/><path d="M638 19Q636 16 635 13Q634 9 634 5Q633 1 633 -2Q634 -6 635 -10Q636 -15 638 -19Q640 -23 643 -27Q647 -31 651 -33Q655 -36 660 -37Q666 -38 671 -37Q676 -37 680 -34Q685 -32 688 -28Q691 -25 693 -20Q695 -16 696 -12Q697 -8 698 -5Q698 -1 699 1Q699 4 700 7Q701 11 702 14Q703 18 704 22Q705 27 705 32Q705 37 703 42Q701 47 697 50Q694 54 689 56Q684 59 679 59Q673 59 668 57Q663 56 659 53Q655 50 652 46Q649 43 647 39Q645 35 643 32Q642 29 640 26Q639 22 638 19Z"/><path d="M630 22Q628 18 627 13Q626 9 625 4Q624 0 624 -5Q625 -10 626 -15Q627 -21 630 -26Q633 -32 637 -36Q641 -41 646 -44Q652 -48 658 -49Q665 -50 671 -49Q677 -48 683 -45Q688 -42 693 -38Q697 -33 699 -28Q702 -23 703 -18Q704 -13 705 -8Q705 -4 706 0Q706 3 707 7Q709 11 710 15Q712 20 713 25Q714 31 714 37Q714 43 711 49Q709 56 704 60Q700 65 694 68Q688 71 681 71Q674 71 668 69Q662 67 657 63Q652 60 648 55Q644 51 642 46Q639 42 637 38Q635 33 633 29Q632 26 630 22Z"/><path d="M728 165Q730 168 731 171Q732 174 732 177Q731 180 729 182Q727 184 724 186Q721 188 717 188Q713 189 708 189Q704 189 700 187Q696 186 693 184Q689 183 687 181Q684 179 681 177Q679 175 676 174Q673 172 671 170Q668 168 667 166Q665 163 665 161Q665 158 665 156Q666 153 667 151Q668 149 669 147Q670 145 672 142Q673 140 675 138Q677 136 680 134Q684 133 688 132Q692 132 696 132Q700 132 704 133Q708 135 712 137Q715 139 717 142Q719 144 720 147Q721 150 721 152Q721 155 722 157Q723 159 724 161Q726 163 728 165Z" stroke-dasharray="10 8"/><path d="M740 167Q743 171 745 175Q747 179 746 184Q746 188 743 191Q740 195 735 197Q730 199 725 200Q719 201 713 201Q707 201 701 199Q695 197 691 195Q686 192 682 189Q678 187 674 184Q670 182 666 179Q663 177 659 174Q656 171 653 168Q651 164 651 161Q650 157 651 154Q653 150 654 147Q655 144 657 141Q658 138 660 135Q662 131 665 128Q668 125 673 123Q677 121 683 120Q689 119 695 119Q701 120 707 122Q713 123 717 126Q722 129 725 133Q728 137 730 141Q731 146 731 149Q731 152 732 155Q733 158 735 161Q738 164 740 167Z"/><path d="M753 169Q757 174 759 180Q762 185 761 191Q760 196 756 201Q752 205 746 208Q740 211 733 212Q725 214 717 213Q710 213 702 211Q695 208 688 205Q682 202 677 198Q672 195 667 191Q662 188 657 185Q652 182 647 178Q643 174 640 170Q637 165 636 161Q636 156 637 152Q639 147 640 143Q642 139 644 135Q646 131 649 127Q651 122 655 118Q659 114 665 111Q671 109 679 107Q686 106 694 107Q702 107 709 110Q717 112 723 116Q730 120 734 125Q738 130 739 136Q741 141 741 145Q742 150 743 153Q744 157 747 161Q750 165 753 169Z"/><path d="M722 24Q719 27 715 29Q710 31 705 31Q700 31 696 28Q692 26 689 23Q685 20 683 16Q680 12 679 7Q678 3 678 0Q678 -5 679 -9Q681 -13 684 -16Q687 -19 690 -22Q693 -24 695 -26Q698 -29 700 -31Q703 -33 706 -34Q709 -36 712 -37Q716 -37 719 -37Q722 -38 726 -38Q729 -38 734 -39Q738 -39 743 -39Q748 -39 753 -38Q758 -36 762 -32Q766 -29 767 -24Q768 -19 767 -14Q766 -9 764 -5Q762 -1 759 2Q756 5 753 7Q749 9 745 10Q742 12 738 12Q735 13 733 14Q730 16 728 18Q726 21 722 24Z"/><path d="M723 31Q719 35 713 37Q708 40 702 40Q696 40 690 37Q685 34 681 30Q677 26 674 21Q671 16 669 11Q668 6 668 0Q668 -4 670 -9Q672 -14 675 -18Q679 -22 682 -25Q686 -28 689 -31Q692 -34 696 -36Q699 -39 702 -41Q706 -43 710 -43Q714 -44 718 -44Q723 -45 727 -45Q731 -45 737 -46Q742 -47 748 -47Q755 -47 761 -45Q767 -43 771 -38Q776 -34 777 -28Q779 -22 778 -16Q777 -10 774 -5Q772 0 768 4Q764 8 760 11Q755 13 751 15Q746 16 742 17Q739 18 736 19Q733 21 730 24Q727 27 723 31Z"/><path d="M724 48Q718 53 710 57Q702 60 694 60Q685 60 677 56Q670 52 664 46Q658 40 654 33Q650 27 647 19Q645 12 645 4Q645 -3 648 -10Q651 -17 656 -23Q661 -29 666 -33Q671 -37 676 -41Q680 -45 685 -49Q689 -52 695 -55Q700 -58 706 -59Q712 -60 717 -60Q723 -61 730 -61Q736 -62 744 -63Q751 -64 760 -64Q769 -64 778 -61Q787 -58 793 -52Q799 -45 801 -37Q804 -28 802 -20Q801 -11 797 -4Q793 3 788 9Q783 15 777 18Q770 22 764 24Q757 26 752 28Q746 29 742 31Q738 33 734 38Q730 42 724 48Z"/><path d="M709 311Q708 308 708 305Q708 302 707 299Q707 296 708 293Q709 290 711 288Q713 285 716 284Q718 282 721 280Q723 278 725 276Q728 273 731 271Q734 269 738 268Q742 268 745 269Q749 269 752 271Q755 273 758 276Q760 279 762 281Q764 284 765 287Q766 290 766 293Q766 296 765 299Q764 302 763 305Q762 308 761 310Q760 313 760 315Q759 318 758 322Q757 325 755 328Q753 331 750 332Q747 334 743 334Q739 335 736 334Q732 334 729 334Q725 333 722 332Q719 331 716 328Q713 326 712 323Q710 320 710 317Q709 313 709 311Z"/><path d="M694 315Q693 311 692 306Q692 302 692 297Q692 293 693 288Q695 284 698 280Q701 276 704 274Q708 271 712 268Q715 265 719 261Q723 258 728 255Q733 251 739 250Q744 249 750 250Q756 252 760 255Q765 258 769 262Q773 266 775 270Q778 274 780 279Q782 284 782 288Q782 293 781 298Q779 303 778 306Q776 310 774 314Q773 318 773 323Q772 327 770 332Q769 337 765 342Q762 346 757 348Q752 351 746 352Q741 352 735 352Q730 352 724 351Q719 350 714 348Q709 346 705 342Q701 339 698 334Q696 329 695 324Q694 320 694 315Z"/><path d="M806 16Q805 15 804 15Q803 14 802 13Q801 12 801 11Q800 10 799 8Q799 7 799 5Q799 3 799 1Q798 0 799 -2Q800 -4 801 -6Q803 -8 805 -9Q807 -10 809 -10Q811 -10 813 -9Q814 -8 815 -8Q817 -7 818 -6Q819 -6 820 -6Q821 -6 822 -5Q823 -5 824 -5Q825 -4 826 -4Q828 -3 829 -2Q831 -1 832 0Q832 1 832 3Q833 5 832 7Q831 9 829 11Q827 12 825 14Q824 15 822 16Q820 17 819 17Q817 18 816 19Q814 19 813 19Q811 19 810 18Q809 18 808 17Q807 16 806 16Z"/><path d="M799 26Q797 25 795 23Q793 22 792 21Q790 19 789 17Q787 14 787 12Q786 9 785 6Q785 3 785 0Q785 -4 786 -8Q787 -12 790 -16Q792 -19 796 -21Q800 -23 804 -23Q808 -23 811 -22Q814 -20 816 -19Q819 -18 821 -17Q822 -16 824 -15Q826 -15 828 -14Q830 -14 832 -13Q835 -12 837 -11Q840 -10 842 -8Q845 -6 847 -4Q848 -1 848 2Q848 6 847 10Q845 14 842 17Q839 20 835 22Q832 24 829 26Q826 27 823 29Q820 30 817 31Q814 32 812 32Q809 32 807 31Q804 30 802 28Q801 27 799 26Z" stroke-dasharray="10 8"/><path d="M794 305Q790 306 787 306Q783 306 779 305Q776 304 773 303Q770 301 768 299Q766 297 765 294Q763 292 763 289Q763 287 763 285Q763 282 763 280Q763 278 763 276Q763 274 764 271Q764 269 765 266Q765 264 767 261Q769 259 772 257Q775 255 779 254Q782 253 786 254Q790 254 793 254Q797 255 800 257Q803 258 806 260Q808 261 810 263Q812 265 814 267Q816 269 817 271Q819 273 820 275Q821 277 821 280Q822 282 821 285Q821 287 819 289Q818 292 816 294Q813 295 811 297Q809 299 806 300Q803 302 800 303Q797 305 794 305Z" stroke-dasharray="10 8"/><path d="M795 315Q790 316 785 316Q780 316 776 314Q771 313 767 311Q763 309 760 306Q757 303 755 299Q754 296 753 293Q753 289 753 286Q753 283 753 280Q753 277 753 274Q754 271 754 268Q754 265 755 261Q756 258 759 254Q761 251 765 248Q769 246 775 245Q780 244 785 244Q790 244 795 245Q800 246 804 248Q808 250 811 252Q815 254 818 257Q820 259 823 262Q825 265 827 267Q829 270 831 273Q832 276 833 280Q833 283 833 286Q832 290 830 293Q828 296 825 299Q822 301 819 303Q816 306 812 308Q808 310 804 312Q800 314 795 315Z"/><path d="M837 3Q834 4 832 3Q830 2 829 1Q827 0 825 -2Q824 -4 823 -6Q822 -8 821 -10Q821 -12 820 -14Q819 -16 819 -18Q819 -20 818 -23Q818 -25 818 -27Q818 -30 818 -33Q818 -35 819 -38Q820 -41 821 -43Q823 -46 825 -47Q827 -48 829 -49Q831 -49 834 -48Q836 -48 838 -47Q840 -46 841 -44Q843 -43 844 -41Q846 -40 847 -38Q848 -36 849 -35Q850 -33 851 -31Q851 -29 852 -26Q853 -24 853 -22Q853 -19 853 -17Q853 -14 853 -12Q852 -9 851 -7Q850 -5 848 -3Q846 -1 845 0Q843 1 841 2Q839 3 837 3Z"/><path d="M838 26Q834 27 830 26Q826 24 823 21Q820 19 817 15Q815 11 813 7Q811 4 810 0Q808 -3 807 -7Q806 -11 805 -15Q804 -19 804 -23Q803 -27 803 -32Q803 -37 803 -42Q803 -47 805 -52Q806 -57 809 -62Q812 -66 816 -69Q820 -71 824 -72Q828 -72 832 -71Q836 -70 840 -68Q843 -66 846 -63Q849 -61 852 -58Q855 -55 857 -52Q859 -49 861 -45Q863 -42 864 -38Q866 -34 867 -30Q868 -26 869 -21Q869 -17 869 -12Q869 -7 868 -2Q867 2 864 6Q862 10 859 13Q856 17 853 20Q850 22 846 24Q842 26 838 26Z"/><path d="M839 46Q833 46 828 45Q823 43 818 39Q814 35 810 30Q807 25 804 19Q802 14 800 9Q798 3 796 -1Q794 -6 793 -12Q792 -17 791 -23Q791 -29 790 -36Q790 -43 791 -50Q791 -57 793 -64Q795 -71 799 -77Q803 -83 808 -87Q814 -90 819 -91Q825 -92 831 -90Q837 -89 842 -86Q847 -83 851 -80Q855 -76 859 -72Q862 -68 865 -64Q868 -59 871 -54Q873 -49 875 -44Q878 -39 879 -33Q881 -27 882 -21Q883 -15 883 -8Q882 -1 881 5Q879 11 876 17Q873 23 869 28Q865 32 860 36Q855 40 850 43Q845 45 839 46Z" stroke-dasharray="10 8"/><path d="M840 61Q833 61 826 59Q820 57 814 52Q809 47 805 41Q801 35 797 28Q794 22 792 16Q790 9 788 3Q786 -3 784 -10Q783 -16 782 -24Q781 -31 781 -39Q780 -47 781 -56Q782 -64 784 -73Q787 -82 791 -89Q796 -96 802 -101Q809 -105 816 -106Q823 -107 830 -105Q837 -103 843 -100Q849 -96 854 -92Q859 -88 864 -83Q868 -78 872 -73Q876 -67 879 -61Q882 -55 884 -49Q887 -42 889 -35Q891 -28 892 -21Q893 -13 893 -5Q893 3 890 11Q888 19 884 26Q881 33 876 39Q871 44 865 49Q859 54 853 57Q847 60 840 61Z"/><path d="M839 354Q838 355 837 356Q836 357 835 358Q833 360 832 360Q830 361 828 361Q826 362 824 361Q823 360 822 359Q821 357 820 355Q819 354 819 352Q819 350 819 349Q819 348 819 346Q819 345 819 344Q819 343 819 341Q820 340 820 339Q820 338 821 336Q821 335 822 334Q823 332 824 331Q825 330 827 329Q829 329 830 329Q832 329 833 329Q835 329 837 330Q838 330 840 331Q841 332 842 333Q844 334 844 335Q845 337 845 338Q845 340 844 342Q844 343 843 344Q843 346 842 347Q842 348 841 349Q841 350 840 351Q840 352 839 354Z"/><path d="M844 360Q843 362 841 364Q840 366 837 368Q835 370 832 372Q829 373 826 374Q823 374 820 372Q817 371 815 369Q813 366 812 363Q811 360 811 358Q811 355 811 353Q810 350 810 348Q810 346 811 344Q811 342 811 340Q812 337 812 335Q813 333 814 331Q815 328 816 326Q817 324 819 322Q822 320 824 319Q827 318 830 318Q833 318 835 318Q838 319 841 320Q843 320 846 322Q848 323 850 325Q852 327 853 329Q854 332 854 334Q855 337 854 340Q853 342 852 344Q851 347 850 349Q850 351 849 352Q848 354 847 356Q846 358 844 360Z"/><path d="M853 370Q850 373 848 377Q845 380 841 383Q838 387 833 389Q828 391 823 392Q818 392 813 390Q808 388 805 384Q802 380 801 375Q799 370 799 366Q798 362 798 358Q798 354 798 350Q798 347 798 344Q798 340 799 337Q800 333 801 330Q801 326 803 322Q804 319 807 315Q809 311 812 308Q816 305 820 304Q824 302 829 302Q834 302 838 302Q842 303 847 304Q851 306 855 308Q859 309 862 313Q866 316 867 320Q869 324 869 328Q869 333 868 337Q867 341 865 345Q864 348 863 351Q861 355 860 358Q858 361 857 364Q855 367 853 370Z"/><path d="M853 370Q851 373 848 377Q845 380 841 384Q838 387 833 389Q828 392 823 392Q818 392 813 390Q808 388 805 384Q802 380 801 375Q799 370 799 366Q798 362 798 358Q797 354 797 351Q797 347 798 344Q798 340 799 337Q799 333 800 330Q801 326 803 322Q804 318 806 315Q809 311 812 308Q816 305 820 303Q824 302 829 302Q834 301 838 302Q842 303 847 304Q851 305 855 307Q859 309 862 312Q866 315 868 320Q869 324 869 328Q869 333 868 337Q867 341 866 345Q864 348 863 351Q861 355 860 358Q858 361 857 364Q855 367 853 370Z"/><path d="M902 88Q900 88 898 86Q896 84 896 82Q895 79 895 76Q895 73 895 70Q896 67 897 64Q898 61 900 59Q901 56 903 53Q905 51 907 48Q909 46 911 44Q914 42 916 41Q919 39 921 39Q923 38 926 38Q928 38 930 38Q932 38 934 38Q936 38 938 38Q941 38 943 39Q946 39 948 40Q951 42 952 44Q953 46 953 50Q953 53 951 57Q950 60 947 63Q945 66 942 69Q939 71 937 72Q934 74 932 75Q929 76 927 77Q925 78 923 79Q921 80 919 82Q917 84 914 86Q911 87 908 88Q905 89 902 88Z"/><path d="M895 99Q891 98 889 96Q887 93 886 90Q885 86 884 82Q884 78 885 74Q886 70 887 66Q889 62 891 58Q893 54 896 50Q898 47 901 44Q904 40 907 38Q911 35 914 33Q917 31 921 30Q924 29 927 29Q930 29 933 29Q936 29 938 29Q941 30 945 30Q948 29 952 30Q955 31 958 32Q961 34 963 38Q965 41 965 46Q964 50 962 55Q960 60 957 64Q954 68 950 71Q946 75 942 77Q938 79 935 81Q932 82 929 83Q926 84 923 86Q921 88 918 90Q914 93 910 95Q907 97 902 99Q898 100 895 99Z" stroke-dasharray="10 8"/><path d="M878 122Q873 121 869 117Q865 113 864 107Q862 101 862 95Q862 89 863 82Q864 75 867 69Q869 62 872 56Q876 50 880 44Q884 38 889 33Q893 28 899 24Q904 20 909 17Q914 14 920 12Q925 10 930 10Q935 10 939 10Q944 10 948 11Q953 11 958 11Q963 11 969 12Q975 12 980 15Q985 18 988 24Q990 29 990 36Q989 44 986 51Q983 59 978 66Q972 73 966 78Q960 83 954 87Q948 90 943 92Q937 94 933 96Q928 98 924 101Q920 104 915 108Q910 112 904 116Q897 119 891 121Q884 123 878 122Z"/><path d="M878 123Q872 122 868 118Q865 114 863 108Q861 102 861 95Q861 89 862 82Q864 76 866 69Q868 62 872 56Q875 50 879 44Q884 38 888 33Q893 28 898 24Q903 19 909 16Q914 13 920 11Q925 10 930 9Q935 9 939 9Q944 10 948 10Q953 10 958 10Q964 10 970 11Q975 12 981 15Q986 18 988 23Q991 29 991 36Q990 44 987 51Q984 59 978 66Q973 73 967 78Q961 83 955 87Q948 90 943 93Q938 95 933 97Q929 99 924 102Q920 105 915 109Q910 112 903 116Q897 120 890 122Q884 124 878 123Z"/><path d="M913 305Q912 306 911 306Q910 307 908 307Q907 307 906 306Q904 306 903 305Q902 305 901 305Q900 304 899 304Q898 304 896 303Q895 303 894 302Q893 302 892 301Q890 300 889 298Q889 297 888 295Q887 294 887 292Q887 291 888 289Q888 288 889 287Q890 286 891 285Q893 285 894 285Q895 284 896 284Q898 284 899 284Q900 284 901 284Q902 284 903 284Q904 284 906 285Q907 285 908 286Q909 287 910 288Q911 288 912 289Q913 290 914 292Q915 293 916 295Q916 296 916 297Q916 299 916 300Q915 302 915 303Q914 304 913 305Z"/><path d="M927 317Q925 319 922 320Q919 321 916 321Q913 321 910 320Q907 319 905 318Q902 317 900 317Q897 316 895 315Q892 315 890 314Q887 313 884 311Q881 310 879 308Q876 305 874 302Q872 299 871 296Q870 292 869 289Q869 285 870 282Q871 279 873 277Q876 275 878 274Q881 273 884 272Q887 271 889 271Q892 271 894 270Q897 270 899 270Q902 270 905 271Q907 271 910 272Q912 274 915 275Q917 277 920 279Q922 280 925 283Q927 285 929 288Q931 291 932 294Q933 297 933 301Q933 304 933 307Q932 310 930 313Q929 315 927 317Z"/><path d="M943 332Q940 336 935 337Q931 339 925 339Q920 339 915 337Q910 336 906 334Q902 332 898 331Q894 330 890 329Q886 328 881 327Q877 325 872 323Q867 320 863 316Q859 312 855 307Q852 302 850 296Q848 291 847 285Q847 279 849 274Q850 269 854 265Q858 262 863 260Q867 258 872 257Q877 256 881 255Q885 254 889 254Q893 253 898 253Q902 253 906 254Q911 255 915 257Q919 259 923 262Q927 265 932 268Q936 271 940 275Q944 278 947 283Q950 288 952 293Q954 299 954 304Q954 310 953 315Q952 320 949 324Q947 329 943 332Z"/><path d="M953 341Q949 345 943 348Q937 350 931 350Q925 349 918 347Q912 345 907 343Q902 341 897 340Q892 338 887 337Q882 336 876 334Q871 332 865 329Q859 326 854 321Q848 316 844 310Q840 304 837 297Q835 290 834 283Q834 275 836 269Q838 263 843 258Q847 254 853 251Q859 249 865 248Q871 246 876 246Q881 245 886 244Q891 243 897 243Q902 243 907 245Q913 246 918 248Q923 251 928 254Q934 257 939 261Q944 265 949 270Q954 274 958 280Q962 286 964 293Q966 300 967 307Q967 313 965 320Q964 326 961 332Q958 337 953 341Z"/><path d="M924 110Q923 107 922 104Q922 101 922 98Q922 94 922 91Q923 88 925 85Q926 81 929 79Q931 76 934 73Q937 71 940 69Q944 67 948 66Q952 65 956 66Q960 66 963 68Q967 70 969 73Q972 76 973 80Q974 83 974 86Q975 89 976 92Q976 94 977 96Q978 99 980 101Q982 104 983 107Q984 110 985 114Q986 118 985 122Q984 126 982 130Q980 133 976 136Q972 138 968 139Q963 139 959 138Q955 137 951 135Q948 133 945 131Q942 128 940 127Q938 125 936 123Q933 121 931 119Q929 117 927 115Q925 113 924 110Z"/><path d="M916 112Q914 108 913 104Q913 100 913 96Q913 92 914 88Q915 84 917 80Q919 76 922 72Q925 68 928 65Q932 62 937 60Q941 57 946 56Q952 55 957 56Q962 56 966 59Q971 61 974 65Q977 69 978 74Q980 78 980 82Q981 86 982 89Q982 92 984 95Q985 97 987 101Q989 104 991 108Q993 112 994 117Q995 122 994 127Q993 133 990 137Q987 142 982 145Q977 148 972 149Q966 149 961 148Q955 147 951 144Q946 141 943 138Q939 136 936 133Q934 131 931 129Q928 126 925 124Q922 121 920 118Q918 115 916 112Z"/><path d="M903 115Q901 110 900 105Q899 100 899 94Q899 89 900 83Q902 77 904 72Q907 66 911 62Q915 57 920 52Q925 48 931 45Q937 42 944 40Q951 39 958 40Q965 40 971 44Q977 47 981 53Q985 58 987 64Q989 69 989 75Q990 80 991 84Q992 88 994 92Q996 96 999 100Q1002 105 1004 110Q1007 116 1008 122Q1009 129 1008 136Q1006 143 1002 149Q998 156 992 160Q986 164 978 164Q970 165 963 164Q956 162 950 158Q944 155 939 151Q935 147 931 144Q927 141 923 138Q919 135 915 131Q912 128 908 124Q905 120 903 115Z" stroke-dasharray="10 8"/><path d="M899 116Q896 111 895 105Q894 100 894 93Q894 87 896 81Q897 75 900 69Q903 63 907 58Q911 53 917 48Q922 43 929 40Q936 36 943 35Q951 33 958 34Q966 35 972 39Q979 42 983 48Q987 54 990 60Q992 67 993 72Q994 78 995 82Q996 87 998 91Q1000 95 1003 100Q1006 105 1009 111Q1011 117 1013 124Q1014 131 1012 139Q1011 147 1007 153Q1002 160 995 165Q988 169 980 170Q972 171 964 169Q956 167 950 163Q943 159 938 155Q933 151 929 147Q924 144 920 141Q916 137 912 134Q908 130 904 126Q901 121 899 116Z" stroke-dasharray="10 8"/><path d="M895 117Q892 112 891 105Q890 99 890 93Q890 86 892 80Q893 73 896 67Q900 61 904 55Q909 49 915 44Q920 39 928 36Q935 32 943 30Q950 29 959 30Q967 31 973 35Q980 38 985 45Q990 51 992 57Q994 64 995 70Q996 76 997 81Q999 86 1001 90Q1003 95 1006 100Q1009 105 1012 111Q1015 118 1016 126Q1018 133 1016 142Q1015 150 1010 157Q1005 164 998 169Q991 173 982 174Q973 175 965 173Q956 171 949 167Q942 163 937 159Q932 154 927 150Q922 147 918 143Q913 140 909 136Q905 132 901 127Q898 123 895 117Z"/><path d="M1013 312Q1010 317 1006 321Q1003 324 999 327Q996 331 993 334Q991 337 988 341Q985 345 981 348Q977 352 972 355Q968 357 962 358Q956 359 951 358Q945 357 940 355Q934 353 929 350Q924 346 920 342Q916 337 914 332Q912 327 911 321Q910 315 911 310Q912 304 913 299Q914 294 917 290Q919 285 922 281Q925 277 929 274Q933 272 938 270Q942 268 946 266Q951 265 955 263Q959 261 964 259Q969 257 975 256Q981 255 987 256Q993 257 999 260Q1004 263 1008 268Q1013 272 1015 278Q1017 284 1018 290Q1018 296 1017 301Q1015 307 1013 312Z"/><path d="M1028 314Q1024 320 1020 325Q1015 330 1011 334Q1007 339 1003 343Q999 347 996 352Q992 357 987 362Q982 367 975 370Q969 373 962 374Q954 375 947 374Q939 373 932 371Q925 368 918 364Q912 359 907 353Q902 348 899 340Q896 333 895 326Q894 318 894 311Q895 304 897 297Q899 290 902 284Q905 278 909 273Q913 268 919 264Q924 261 930 258Q935 256 941 254Q947 251 952 249Q958 246 965 244Q971 241 979 240Q987 239 995 240Q1003 241 1010 245Q1017 249 1023 255Q1028 262 1031 269Q1035 277 1035 285Q1036 293 1034 300Q1032 308 1028 314Z"/><path d="M1031 51Q1029 51 1027 52Q1025 52 1023 51Q1021 51 1019 50Q1017 49 1015 48Q1013 47 1012 45Q1010 44 1008 43Q1006 41 1005 39Q1003 37 1002 35Q1001 32 1001 30Q1000 27 1000 25Q1000 22 1000 20Q1000 18 1000 15Q1000 12 1000 9Q1000 7 1002 5Q1003 2 1005 1Q1007 0 1009 1Q1011 1 1014 1Q1016 2 1018 4Q1020 5 1022 6Q1024 8 1025 10Q1027 12 1028 14Q1029 16 1030 18Q1031 20 1033 21Q1034 23 1036 25Q1038 28 1039 31Q1040 33 1041 37Q1041 40 1040 42Q1040 45 1038 46Q1036 48 1035 49Q1033 50 1031 51Z"/><path d="M1037 62Q1034 63 1031 64Q1028 64 1025 63Q1022 63 1019 61Q1016 60 1014 58Q1011 56 1008 54Q1006 52 1003 50Q1000 48 998 45Q995 42 994 38Q992 35 992 31Q991 27 991 23Q991 20 991 16Q991 13 991 9Q990 5 991 0Q991 -3 993 -6Q995 -9 998 -11Q1001 -12 1004 -12Q1008 -12 1011 -11Q1015 -9 1018 -7Q1021 -6 1023 -3Q1026 -1 1028 1Q1031 4 1032 7Q1034 10 1036 13Q1037 16 1040 18Q1042 21 1044 25Q1047 28 1049 32Q1051 37 1052 41Q1053 46 1051 49Q1050 53 1048 56Q1045 58 1043 60Q1040 61 1037 62Z" stroke-dasharray="10 8"/><path d="M1056 268Q1054 271 1052 274Q1049 277 1046 280Q1042 282 1038 284Q1034 286 1029 287Q1024 287 1020 287Q1015 286 1011 283Q1007 281 1005 277Q1003 273 1002 269Q1001 264 1001 260Q1000 256 1000 252Q1000 249 1001 245Q1002 241 1004 237Q1006 234 1010 232Q1013 229 1016 228Q1020 226 1023 225Q1025 223 1028 221Q1031 219 1034 217Q1037 214 1040 212Q1044 210 1049 209Q1053 208 1058 208Q1063 208 1068 209Q1072 210 1076 213Q1081 216 1083 220Q1085 224 1085 229Q1084 234 1081 239Q1078 244 1074 247Q1071 251 1067 253Q1064 255 1063 258Q1061 260 1059 263Q1058 265 1056 268Z"/><path d="M1063 277Q1061 282 1057 286Q1053 290 1048 293Q1043 296 1038 299Q1032 301 1025 303Q1018 304 1012 303Q1005 302 1000 298Q995 295 991 289Q988 284 987 278Q986 272 985 266Q985 260 985 255Q985 249 986 244Q987 239 990 234Q993 229 998 226Q1002 222 1007 220Q1012 218 1016 216Q1020 214 1024 211Q1027 208 1031 205Q1036 202 1041 199Q1046 196 1053 194Q1059 192 1066 192Q1072 192 1079 194Q1086 196 1091 200Q1097 204 1100 210Q1103 216 1103 223Q1102 230 1098 236Q1094 243 1089 248Q1083 252 1079 256Q1074 259 1072 262Q1069 265 1067 269Q1065 273 1063 277Z"/><path d="M1072 288Q1068 294 1063 300Q1058 305 1052 310Q1045 314 1037 318Q1029 321 1020 323Q1011 325 1002 323Q993 322 986 317Q979 312 974 305Q970 297 968 289Q967 281 966 273Q965 265 965 258Q965 251 967 243Q968 236 972 230Q977 223 983 218Q989 214 996 211Q1002 208 1008 205Q1013 202 1018 199Q1023 195 1029 190Q1034 186 1042 181Q1049 177 1057 175Q1066 173 1075 173Q1084 173 1093 176Q1102 178 1110 183Q1118 188 1122 196Q1126 205 1125 214Q1125 224 1119 233Q1113 242 1106 248Q1099 255 1093 259Q1087 264 1083 268Q1080 272 1077 278Q1075 283 1072 288Z"/><path d="M1119 104Q1115 106 1111 105Q1107 105 1103 104Q1099 102 1095 101Q1091 99 1087 98Q1083 97 1079 94Q1075 92 1072 88Q1068 84 1066 79Q1063 74 1062 68Q1060 63 1058 58Q1057 53 1054 48Q1052 43 1050 36Q1048 30 1048 24Q1048 18 1050 13Q1052 9 1055 6Q1059 4 1063 3Q1067 2 1071 1Q1075 1 1079 2Q1083 4 1087 7Q1091 9 1095 13Q1098 17 1101 21Q1104 25 1107 28Q1110 30 1114 33Q1119 36 1123 40Q1127 45 1131 50Q1134 56 1135 62Q1136 69 1135 74Q1135 79 1133 84Q1131 89 1129 93Q1127 97 1125 100Q1122 103 1119 104Z"/><path d="M1126 119Q1122 120 1116 120Q1111 119 1106 117Q1101 116 1096 114Q1091 112 1086 110Q1081 109 1076 106Q1071 103 1066 97Q1062 92 1059 85Q1056 79 1054 72Q1051 66 1049 59Q1047 53 1044 46Q1041 39 1038 31Q1036 23 1036 15Q1035 7 1038 2Q1040 -3 1045 -6Q1049 -10 1054 -11Q1060 -12 1065 -13Q1070 -13 1075 -11Q1081 -10 1086 -6Q1091 -2 1096 2Q1100 7 1104 12Q1108 16 1112 20Q1116 23 1121 27Q1126 31 1132 36Q1138 42 1142 49Q1146 57 1147 65Q1149 72 1148 79Q1147 86 1145 92Q1143 98 1140 103Q1138 109 1134 113Q1131 117 1126 119Z"/><path d="M1132 129Q1127 131 1121 131Q1114 130 1108 128Q1102 126 1097 124Q1091 122 1085 120Q1079 118 1073 114Q1067 111 1062 104Q1057 98 1053 91Q1050 83 1047 75Q1045 68 1042 60Q1039 53 1036 45Q1032 36 1029 27Q1027 18 1026 9Q1026 0 1029 -6Q1032 -13 1037 -17Q1042 -21 1048 -22Q1054 -24 1060 -24Q1067 -24 1073 -23Q1079 -21 1085 -16Q1091 -12 1096 -6Q1102 0 1106 4Q1110 10 1115 14Q1120 18 1126 23Q1132 27 1139 33Q1145 40 1150 48Q1155 57 1157 66Q1158 75 1157 84Q1156 92 1154 99Q1151 105 1148 112Q1146 118 1142 122Q1138 127 1132 129Z"/><path d="M1136 284Q1134 288 1131 291Q1128 293 1124 295Q1120 296 1116 295Q1112 295 1108 293Q1105 291 1102 288Q1100 285 1099 282Q1097 279 1097 276Q1096 274 1095 272Q1093 270 1092 268Q1090 267 1088 264Q1086 262 1084 260Q1082 257 1082 253Q1081 250 1082 247Q1083 243 1085 240Q1087 237 1090 234Q1092 232 1096 230Q1099 228 1102 227Q1106 226 1109 226Q1113 226 1116 226Q1120 227 1123 228Q1126 230 1128 232Q1131 234 1132 236Q1134 239 1135 242Q1135 245 1135 247Q1135 250 1135 253Q1135 255 1135 257Q1136 260 1136 262Q1137 265 1138 269Q1138 272 1138 276Q1138 280 1136 284Z"/><path d="M1143 292Q1141 297 1137 300Q1132 304 1127 306Q1122 307 1117 306Q1111 306 1107 303Q1102 300 1099 296Q1096 293 1095 289Q1093 285 1092 281Q1091 278 1089 276Q1088 273 1085 271Q1083 269 1080 266Q1077 264 1075 260Q1073 256 1073 252Q1072 247 1073 243Q1074 238 1077 234Q1079 230 1083 227Q1086 224 1091 221Q1095 219 1099 218Q1104 216 1109 216Q1113 216 1118 217Q1122 218 1126 219Q1130 221 1133 224Q1136 226 1138 230Q1140 233 1141 237Q1142 240 1142 244Q1142 248 1142 251Q1142 254 1143 257Q1143 260 1144 264Q1145 267 1146 272Q1146 276 1146 281Q1145 287 1143 292Z"/><path d="M1149 298Q1147 304 1142 309Q1137 313 1130 315Q1124 317 1117 316Q1111 315 1106 312Q1100 309 1097 304Q1093 299 1091 295Q1089 290 1088 286Q1086 282 1084 279Q1083 276 1080 274Q1077 271 1074 268Q1070 265 1068 260Q1065 256 1065 250Q1064 245 1065 240Q1067 234 1070 230Q1073 225 1077 221Q1081 217 1086 214Q1091 211 1097 209Q1102 208 1108 208Q1113 207 1119 208Q1124 209 1129 211Q1133 214 1137 217Q1141 220 1143 224Q1146 228 1147 232Q1148 237 1148 241Q1149 245 1148 249Q1148 253 1149 257Q1149 261 1150 265Q1151 269 1152 275Q1153 280 1153 286Q1152 292 1149 298Z"/><path d="M1156 306Q1153 313 1147 318Q1141 324 1134 326Q1126 328 1118 327Q1111 326 1104 322Q1098 318 1094 313Q1089 307 1087 302Q1085 296 1083 291Q1081 287 1079 283Q1077 280 1074 277Q1070 274 1066 270Q1062 266 1059 261Q1056 255 1056 249Q1055 243 1056 236Q1058 230 1061 224Q1065 218 1070 214Q1075 209 1081 205Q1087 202 1094 200Q1100 198 1107 198Q1114 198 1120 199Q1126 200 1132 202Q1137 205 1142 209Q1146 212 1149 217Q1152 222 1154 227Q1155 232 1155 238Q1155 243 1155 247Q1155 252 1156 256Q1156 261 1157 266Q1159 271 1160 278Q1161 284 1160 291Q1160 299 1156 306Z"/><path d="M1159 309Q1156 317 1149 322Q1143 328 1135 330Q1127 333 1119 332Q1111 331 1104 327Q1097 322 1093 317Q1088 311 1085 305Q1083 298 1081 293Q1079 289 1077 285Q1075 281 1071 278Q1067 275 1063 271Q1059 266 1056 261Q1053 255 1052 248Q1051 242 1053 235Q1054 228 1058 222Q1062 216 1067 211Q1073 206 1079 202Q1086 198 1093 196Q1100 194 1107 194Q1114 194 1120 195Q1127 196 1133 199Q1139 201 1144 205Q1149 209 1152 214Q1155 219 1157 225Q1158 231 1158 236Q1158 242 1158 247Q1158 252 1158 256Q1159 261 1160 267Q1162 272 1163 279Q1164 286 1164 294Q1163 302 1159 309Z"/><path d="M1120 78Q1118 77 1116 76Q1114 75 1113 73Q1112 71 1112 70Q1111 68 1111 66Q1112 65 1112 63Q1113 62 1113 61Q1114 60 1114 59Q1114 58 1114 57Q1114 55 1114 54Q1114 53 1115 52Q1116 51 1117 50Q1119 49 1121 49Q1122 49 1124 49Q1126 50 1128 50Q1129 51 1131 52Q1133 52 1134 54Q1136 55 1137 56Q1138 58 1139 59Q1140 60 1141 62Q1142 63 1142 65Q1142 66 1142 68Q1142 69 1141 70Q1140 71 1139 72Q1137 72 1136 73Q1135 73 1134 74Q1134 75 1133 76Q1132 76 1131 77Q1129 78 1128 79Q1126 79 1124 79Q1122 79 1120 78Z"/><path d="M1114 93Q1110 91 1106 89Q1102 86 1100 82Q1097 79 1097 75Q1096 72 1096 68Q1097 65 1098 63Q1099 60 1100 58Q1101 56 1101 54Q1101 52 1101 49Q1101 46 1102 44Q1102 41 1104 39Q1106 37 1109 35Q1112 34 1115 34Q1118 34 1122 34Q1126 34 1129 36Q1133 37 1137 38Q1140 40 1143 43Q1146 45 1149 48Q1151 51 1153 54Q1156 57 1157 60Q1159 63 1159 66Q1160 69 1159 72Q1158 74 1156 76Q1154 78 1152 80Q1149 81 1147 82Q1145 83 1143 84Q1142 86 1140 88Q1138 90 1135 91Q1133 93 1129 94Q1126 95 1122 95Q1118 94 1114 93Z"/><path d="M1106 110Q1100 108 1094 103Q1088 99 1084 94Q1080 88 1079 82Q1077 76 1078 71Q1079 66 1081 62Q1083 58 1084 55Q1085 51 1085 48Q1086 44 1086 40Q1086 36 1087 31Q1088 27 1091 23Q1094 20 1098 18Q1103 16 1108 15Q1114 15 1120 16Q1126 16 1132 18Q1138 20 1143 23Q1149 26 1154 30Q1159 34 1163 38Q1167 43 1170 47Q1174 52 1176 57Q1179 62 1180 67Q1180 72 1179 76Q1178 81 1175 84Q1172 87 1168 89Q1164 91 1160 93Q1157 94 1154 97Q1151 99 1148 102Q1145 105 1141 108Q1137 111 1132 112Q1126 114 1120 113Q1113 113 1106 110Z"/><path d="M1100 124Q1091 121 1084 116Q1076 110 1071 103Q1066 95 1064 88Q1062 80 1064 73Q1065 67 1067 61Q1069 56 1071 52Q1073 47 1073 42Q1073 38 1073 32Q1073 27 1075 21Q1076 15 1080 11Q1084 6 1090 4Q1096 1 1103 1Q1110 0 1118 1Q1125 2 1133 4Q1141 6 1148 10Q1156 14 1162 19Q1169 24 1174 30Q1180 36 1184 42Q1188 48 1192 55Q1195 61 1196 68Q1197 74 1195 80Q1194 86 1190 90Q1186 94 1180 97Q1175 99 1171 102Q1166 104 1163 107Q1159 110 1155 114Q1151 118 1146 121Q1141 125 1133 127Q1126 129 1118 128Q1109 128 1100 124Z"/><path d="M1154 343Q1152 341 1149 340Q1147 338 1144 336Q1141 334 1138 331Q1136 329 1134 325Q1132 321 1132 316Q1133 311 1135 307Q1138 303 1142 299Q1146 296 1150 294Q1155 292 1159 291Q1163 290 1166 291Q1170 291 1173 291Q1176 291 1178 291Q1181 291 1184 291Q1187 290 1190 289Q1194 288 1198 288Q1202 288 1206 289Q1210 290 1213 293Q1215 296 1216 300Q1216 304 1215 309Q1214 313 1213 317Q1211 321 1208 325Q1206 329 1203 332Q1200 335 1197 338Q1194 341 1191 343Q1187 344 1184 346Q1180 347 1177 348Q1174 348 1170 348Q1167 349 1164 348Q1161 347 1159 346Q1156 345 1154 343Z"/><path d="M1148 350Q1146 348 1143 346Q1140 343 1136 341Q1132 339 1129 335Q1125 332 1123 327Q1121 322 1121 316Q1122 310 1125 304Q1128 299 1133 295Q1138 290 1144 288Q1149 286 1155 285Q1160 284 1164 284Q1169 284 1172 284Q1176 285 1179 285Q1183 285 1186 284Q1190 283 1194 282Q1199 281 1204 280Q1210 280 1215 282Q1220 283 1223 287Q1226 291 1227 296Q1227 301 1226 307Q1225 312 1222 317Q1220 323 1217 327Q1214 332 1211 336Q1207 340 1203 343Q1199 347 1195 349Q1191 352 1186 353Q1182 355 1178 356Q1173 356 1169 357Q1165 357 1161 356Q1158 355 1154 354Q1151 352 1148 350Z"/><path d="M1141 359Q1137 356 1134 354Q1130 351 1125 348Q1121 345 1116 340Q1112 336 1109 329Q1106 323 1107 316Q1107 308 1111 301Q1115 294 1122 288Q1128 283 1135 280Q1142 277 1149 276Q1156 274 1161 274Q1167 275 1172 275Q1176 276 1180 276Q1185 276 1189 275Q1194 274 1200 272Q1206 271 1212 270Q1219 270 1226 272Q1232 274 1236 278Q1240 283 1241 290Q1242 297 1240 304Q1239 311 1236 318Q1232 324 1229 330Q1225 336 1221 341Q1216 347 1211 351Q1206 355 1200 358Q1195 361 1189 363Q1184 365 1178 366Q1173 367 1168 368Q1163 368 1158 367Q1153 366 1149 364Q1145 362 1141 359Z"/><path d="M1129 375Q1124 371 1118 367Q1113 363 1107 359Q1101 355 1094 349Q1088 343 1084 334Q1081 325 1081 315Q1082 305 1088 295Q1093 285 1102 278Q1111 271 1121 266Q1130 262 1139 260Q1149 259 1156 259Q1164 259 1170 260Q1177 260 1183 261Q1188 261 1195 259Q1201 258 1209 256Q1217 254 1226 253Q1236 252 1245 255Q1253 258 1259 264Q1264 271 1266 280Q1267 289 1265 299Q1262 309 1258 318Q1254 327 1249 335Q1244 343 1237 351Q1231 358 1224 364Q1217 369 1210 374Q1202 378 1195 380Q1187 383 1180 385Q1172 386 1165 387Q1158 387 1151 386Q1145 384 1139 381Q1133 378 1129 375Z" stroke-dasharray="10 8"/><path d="M1198 0Q1196 0 1193 0Q1190 0 1186 0Q1183 0 1179 -1Q1176 -3 1173 -5Q1170 -7 1168 -10Q1166 -14 1166 -17Q1166 -21 1167 -24Q1168 -27 1171 -30Q1173 -32 1176 -34Q1179 -36 1182 -37Q1185 -38 1187 -39Q1189 -40 1191 -41Q1193 -43 1195 -44Q1197 -46 1200 -47Q1203 -48 1206 -48Q1209 -48 1213 -47Q1216 -46 1219 -45Q1221 -43 1224 -41Q1226 -39 1228 -36Q1230 -33 1231 -30Q1232 -28 1233 -25Q1233 -21 1233 -18Q1233 -15 1232 -12Q1232 -9 1230 -7Q1229 -4 1226 -2Q1224 0 1221 0Q1218 1 1215 1Q1211 1 1209 1Q1206 0 1203 0Q1201 0 1198 0Z"/><path d="M1197 8Q1193 8 1189 8Q1185 8 1180 8Q1175 7 1171 5Q1166 4 1162 0Q1158 -2 1155 -6Q1153 -11 1152 -16Q1152 -21 1153 -25Q1155 -30 1159 -33Q1162 -37 1166 -39Q1170 -41 1174 -43Q1178 -44 1181 -46Q1184 -47 1187 -49Q1189 -51 1193 -53Q1196 -55 1200 -57Q1204 -58 1208 -58Q1212 -58 1217 -57Q1221 -56 1225 -54Q1229 -52 1232 -48Q1236 -45 1238 -42Q1241 -38 1242 -34Q1244 -30 1244 -26Q1245 -22 1245 -17Q1245 -13 1244 -9Q1243 -5 1241 -1Q1239 2 1236 4Q1232 7 1228 9Q1224 10 1219 10Q1215 10 1211 9Q1207 9 1204 8Q1200 8 1197 8Z"/><path d="M1203 262Q1201 259 1200 255Q1198 252 1196 248Q1194 245 1192 241Q1190 237 1189 232Q1188 228 1189 222Q1189 217 1192 212Q1194 207 1197 201Q1200 196 1204 191Q1208 186 1214 181Q1219 176 1225 173Q1231 169 1238 168Q1244 167 1250 168Q1256 170 1261 173Q1265 176 1268 181Q1271 185 1273 190Q1274 195 1275 200Q1275 204 1275 209Q1275 213 1275 217Q1275 221 1276 225Q1277 228 1278 233Q1280 238 1280 244Q1281 251 1279 258Q1278 265 1273 271Q1269 277 1262 281Q1256 285 1249 286Q1242 288 1236 287Q1229 286 1224 284Q1218 281 1214 278Q1210 274 1208 270Q1205 266 1203 262Z"/><path d="M1194 272Q1192 267 1189 263Q1187 258 1185 254Q1182 250 1179 245Q1177 240 1176 234Q1174 227 1175 221Q1176 214 1179 207Q1182 201 1186 194Q1190 187 1195 181Q1201 174 1207 168Q1214 162 1222 157Q1229 153 1238 151Q1246 150 1254 151Q1262 153 1268 158Q1274 162 1277 168Q1281 173 1283 180Q1285 186 1285 192Q1286 198 1286 203Q1285 209 1285 214Q1285 219 1287 224Q1288 229 1290 235Q1292 241 1293 249Q1294 257 1292 266Q1289 275 1284 283Q1278 291 1270 296Q1262 301 1253 303Q1244 304 1235 303Q1227 302 1220 299Q1213 296 1208 292Q1203 287 1200 282Q1196 277 1194 272Z"/><path d="M1188 279Q1185 273 1182 268Q1180 263 1177 258Q1174 253 1171 247Q1168 241 1166 234Q1165 227 1166 220Q1167 212 1170 204Q1174 196 1179 189Q1183 181 1189 174Q1195 166 1203 159Q1210 152 1219 146Q1228 141 1238 140Q1248 138 1257 140Q1266 142 1272 147Q1279 152 1283 159Q1288 165 1290 172Q1292 179 1293 186Q1293 193 1293 200Q1293 206 1293 212Q1293 217 1294 223Q1296 229 1298 236Q1300 243 1301 252Q1302 261 1300 272Q1297 282 1291 291Q1284 300 1275 306Q1265 312 1255 314Q1245 316 1235 315Q1226 313 1218 310Q1210 307 1204 301Q1198 296 1194 291Q1190 285 1188 279Z"/><path d="M1339 103Q1338 107 1335 110Q1333 113 1330 115Q1326 117 1322 118Q1318 119 1315 120Q1311 121 1307 122Q1304 123 1299 125Q1295 126 1290 127Q1284 128 1279 126Q1274 125 1269 122Q1265 118 1262 114Q1259 109 1257 104Q1256 100 1255 95Q1255 90 1256 86Q1257 82 1260 78Q1262 74 1265 72Q1269 69 1271 67Q1274 65 1276 63Q1278 60 1280 56Q1282 53 1285 49Q1288 46 1292 44Q1297 42 1302 43Q1307 43 1312 45Q1316 47 1321 49Q1325 52 1329 55Q1333 58 1337 61Q1340 65 1342 70Q1343 74 1344 79Q1344 83 1343 87Q1342 92 1341 95Q1340 99 1339 103Z"/><path d="M1301 338Q1301 342 1299 346Q1297 350 1293 352Q1289 354 1285 356Q1281 357 1277 358Q1274 358 1270 359Q1267 360 1264 360Q1260 360 1257 360Q1254 359 1251 358Q1248 357 1245 355Q1242 354 1239 352Q1236 351 1233 350Q1229 348 1225 346Q1222 343 1219 340Q1217 336 1216 332Q1215 328 1216 324Q1217 320 1219 316Q1220 312 1223 309Q1225 306 1229 304Q1232 301 1237 301Q1241 300 1245 301Q1249 302 1253 303Q1256 305 1259 306Q1262 307 1265 307Q1268 307 1271 306Q1275 306 1278 307Q1282 308 1285 310Q1289 312 1291 315Q1294 318 1296 322Q1299 325 1300 329Q1301 334 1301 338Z"/><path d="M1316 340Q1316 346 1313 351Q1310 356 1305 359Q1300 363 1294 364Q1289 366 1284 367Q1279 368 1274 369Q1270 370 1266 370Q1261 371 1257 370Q1252 369 1248 368Q1244 366 1241 364Q1237 362 1233 360Q1229 358 1224 356Q1219 354 1214 351Q1209 348 1206 343Q1203 338 1202 333Q1201 327 1202 322Q1203 316 1205 311Q1207 306 1211 302Q1214 297 1219 294Q1223 291 1229 291Q1235 290 1241 291Q1246 292 1251 294Q1255 296 1259 297Q1263 298 1267 298Q1271 298 1276 298Q1280 298 1285 299Q1290 301 1295 303Q1299 306 1303 310Q1307 314 1310 319Q1313 324 1314 329Q1316 335 1316 340Z"/><path d="M1339 344Q1339 352 1335 359Q1331 366 1324 371Q1317 375 1309 377Q1301 380 1294 381Q1287 382 1281 384Q1275 385 1269 386Q1262 386 1256 385Q1250 384 1245 382Q1239 380 1234 377Q1229 374 1223 372Q1217 369 1210 366Q1204 363 1197 359Q1190 354 1185 348Q1181 341 1179 333Q1178 325 1179 318Q1181 310 1184 303Q1187 296 1192 290Q1197 284 1203 280Q1210 276 1218 275Q1226 274 1234 275Q1241 277 1248 280Q1254 282 1259 284Q1265 285 1270 285Q1276 285 1282 285Q1289 285 1296 287Q1303 289 1309 292Q1315 296 1321 302Q1326 307 1330 314Q1334 321 1337 328Q1339 336 1339 344Z"/><path d="M1362 348Q1362 358 1356 367Q1351 376 1342 382Q1333 388 1323 391Q1313 393 1304 395Q1295 397 1287 398Q1279 400 1272 401Q1264 402 1256 401Q1248 400 1241 396Q1234 393 1227 390Q1220 386 1213 383Q1206 380 1197 376Q1188 372 1180 367Q1171 361 1165 352Q1159 344 1157 334Q1155 324 1157 314Q1159 305 1163 296Q1167 287 1173 279Q1180 271 1188 266Q1196 261 1207 259Q1217 258 1227 260Q1237 262 1245 265Q1253 269 1260 271Q1267 273 1274 273Q1281 273 1289 273Q1298 272 1307 275Q1316 277 1324 282Q1332 287 1338 294Q1345 301 1350 309Q1355 318 1359 328Q1362 338 1362 348Z"/><path d="M1370 349Q1370 360 1364 370Q1358 379 1349 386Q1339 392 1328 395Q1317 398 1308 400Q1298 402 1290 404Q1281 405 1273 406Q1264 407 1256 406Q1247 405 1239 402Q1232 398 1225 394Q1217 390 1210 387Q1202 384 1192 380Q1183 376 1174 369Q1164 363 1158 354Q1151 345 1149 334Q1147 324 1149 313Q1151 302 1156 293Q1160 283 1167 275Q1173 267 1183 261Q1192 255 1203 253Q1214 252 1224 254Q1235 257 1244 260Q1253 264 1260 266Q1267 268 1275 268Q1283 268 1292 268Q1301 268 1310 270Q1320 273 1329 278Q1337 283 1344 291Q1351 299 1357 308Q1363 317 1366 327Q1370 338 1370 349Z"/><path d="M1335 116Q1334 117 1333 117Q1332 117 1331 117Q1329 117 1328 117Q1327 117 1326 117Q1325 117 1324 117Q1323 116 1322 116Q1321 115 1320 114Q1319 113 1319 112Q1318 111 1318 110Q1317 108 1317 107Q1317 106 1317 105Q1317 104 1317 103Q1317 102 1317 101Q1318 100 1318 99Q1318 98 1318 96Q1319 95 1320 94Q1321 93 1322 93Q1323 93 1324 93Q1326 93 1327 94Q1328 95 1329 96Q1330 97 1331 98Q1331 99 1332 100Q1333 101 1333 101Q1334 102 1335 103Q1335 104 1336 105Q1337 106 1337 107Q1338 109 1338 110Q1338 111 1338 113Q1338 114 1337 115Q1336 116 1335 116Z"/><path d="M1342 125Q1340 126 1338 126Q1336 126 1334 126Q1332 126 1330 126Q1328 127 1326 126Q1324 126 1322 126Q1320 125 1318 124Q1316 122 1314 121Q1313 119 1312 117Q1310 115 1310 113Q1309 110 1309 108Q1308 106 1309 104Q1309 102 1309 100Q1309 98 1309 96Q1310 94 1310 92Q1311 90 1311 88Q1312 86 1314 84Q1315 82 1318 82Q1320 81 1322 82Q1325 82 1327 84Q1329 85 1331 87Q1333 89 1334 91Q1336 92 1337 94Q1338 96 1339 97Q1340 99 1342 101Q1343 102 1344 104Q1345 106 1346 109Q1347 111 1348 113Q1348 116 1348 118Q1347 121 1346 122Q1344 124 1342 125Z"/><path d="M1347 131Q1345 132 1342 132Q1339 133 1336 133Q1334 133 1331 133Q1329 133 1326 133Q1323 133 1321 132Q1318 131 1315 129Q1313 128 1310 125Q1308 123 1307 120Q1305 117 1304 115Q1303 112 1303 109Q1303 106 1303 103Q1303 101 1303 98Q1304 96 1304 93Q1304 91 1305 88Q1305 85 1306 82Q1308 79 1310 77Q1312 74 1315 74Q1318 73 1321 74Q1324 74 1327 76Q1330 78 1332 81Q1335 83 1337 86Q1338 88 1340 90Q1342 92 1343 95Q1345 97 1346 99Q1348 101 1350 104Q1351 106 1353 109Q1354 112 1355 116Q1355 119 1354 122Q1354 125 1352 127Q1350 130 1347 131Z"/><path d="M1358 144Q1354 145 1350 146Q1346 147 1342 147Q1338 147 1334 147Q1330 147 1326 147Q1322 147 1317 145Q1313 144 1309 142Q1305 139 1302 135Q1299 132 1296 128Q1294 123 1292 119Q1291 115 1290 110Q1290 106 1290 102Q1290 98 1291 94Q1291 90 1292 86Q1293 82 1293 78Q1294 73 1296 69Q1297 65 1301 61Q1304 58 1308 57Q1313 55 1318 57Q1323 58 1327 61Q1332 64 1335 68Q1339 71 1342 75Q1345 78 1347 82Q1350 85 1352 88Q1354 92 1357 95Q1359 98 1362 102Q1364 106 1366 111Q1368 116 1369 121Q1370 126 1369 131Q1368 135 1365 139Q1362 142 1358 144Z"/><path d="M1339 289Q1338 287 1339 286Q1339 285 1340 284Q1340 283 1340 282Q1341 281 1341 279Q1341 278 1341 277Q1341 275 1342 274Q1343 273 1344 272Q1345 271 1347 270Q1348 270 1350 270Q1352 270 1353 271Q1355 271 1356 272Q1357 272 1358 273Q1359 274 1359 275Q1360 276 1360 277Q1361 278 1362 279Q1362 280 1363 281Q1364 282 1364 283Q1365 284 1365 286Q1365 287 1364 288Q1363 289 1362 290Q1361 291 1359 292Q1358 292 1357 293Q1356 294 1355 294Q1353 295 1352 295Q1350 296 1349 296Q1348 296 1346 295Q1345 295 1344 294Q1342 294 1341 293Q1340 292 1339 291Q1339 290 1339 289Z"/><path d="M1320 297Q1319 293 1320 290Q1321 287 1323 284Q1324 282 1325 279Q1325 277 1325 274Q1326 271 1326 267Q1326 264 1328 260Q1330 257 1333 254Q1337 252 1341 251Q1345 250 1349 251Q1353 251 1356 252Q1360 252 1363 254Q1366 255 1368 258Q1371 260 1372 263Q1373 265 1375 268Q1376 270 1377 272Q1379 274 1381 277Q1383 279 1384 282Q1386 286 1386 289Q1385 292 1383 295Q1381 298 1378 300Q1375 303 1372 304Q1369 306 1366 308Q1363 309 1360 311Q1357 312 1353 313Q1350 314 1346 314Q1342 314 1339 313Q1336 312 1333 311Q1330 309 1327 307Q1324 305 1322 303Q1320 300 1320 297Z"/><path d="M1301 305Q1300 300 1302 294Q1303 289 1306 285Q1308 281 1309 277Q1310 273 1310 268Q1310 263 1311 257Q1312 251 1315 246Q1318 241 1323 237Q1328 233 1334 232Q1341 230 1347 231Q1353 231 1359 232Q1365 234 1370 236Q1375 238 1379 242Q1382 246 1385 250Q1387 254 1389 258Q1391 262 1393 265Q1396 269 1399 273Q1402 277 1405 282Q1407 287 1407 292Q1406 298 1403 303Q1399 307 1394 311Q1389 314 1384 317Q1379 320 1375 322Q1370 325 1365 328Q1360 330 1354 332Q1349 333 1343 333Q1337 333 1332 331Q1326 330 1321 327Q1317 325 1312 322Q1308 318 1305 314Q1302 310 1301 305Z"/><path d="M1292 308Q1291 302 1293 296Q1295 290 1298 285Q1300 280 1301 275Q1303 271 1303 265Q1303 259 1304 253Q1305 246 1308 240Q1312 233 1318 229Q1324 224 1332 223Q1339 221 1346 221Q1354 222 1361 223Q1367 225 1373 228Q1379 231 1384 235Q1388 239 1391 244Q1393 249 1396 254Q1398 258 1401 262Q1404 267 1408 271Q1411 276 1414 282Q1417 287 1416 294Q1416 300 1412 306Q1408 312 1402 316Q1396 320 1390 323Q1384 326 1379 329Q1373 332 1367 335Q1362 338 1355 340Q1348 342 1342 342Q1335 341 1328 340Q1322 338 1316 335Q1310 332 1305 328Q1300 325 1297 320Q1293 315 1292 308Z" stroke-dasharray="10 8"/><path d="M1368 29Q1367 28 1366 28Q1365 27 1365 26Q1364 26 1363 25Q1362 24 1361 23Q1361 22 1360 21Q1360 20 1360 18Q1360 17 1361 16Q1361 14 1362 14Q1363 13 1364 12Q1366 12 1367 11Q1368 11 1369 11Q1370 11 1371 11Q1372 11 1373 11Q1374 11 1375 11Q1376 10 1377 10Q1378 10 1379 11Q1381 11 1382 12Q1383 12 1383 14Q1384 15 1384 16Q1384 17 1384 19Q1384 20 1383 21Q1383 22 1382 23Q1381 24 1381 25Q1380 26 1379 27Q1378 27 1378 28Q1377 29 1376 29Q1375 30 1374 30Q1373 31 1372 30Q1371 30 1370 30Q1369 29 1368 29Z"/><path d="M1364 37Q1362 36 1361 35Q1359 33 1358 32Q1356 31 1355 29Q1354 28 1352 26Q1351 24 1350 22Q1350 19 1350 17Q1350 15 1351 12Q1352 10 1354 8Q1356 7 1358 6Q1360 5 1362 4Q1364 4 1366 4Q1368 4 1370 4Q1372 4 1373 4Q1375 4 1377 3Q1379 3 1381 2Q1383 2 1385 3Q1388 3 1390 5Q1391 6 1393 8Q1394 10 1394 13Q1394 15 1394 18Q1393 20 1392 22Q1392 24 1390 26Q1389 28 1388 29Q1387 31 1385 32Q1384 34 1382 35Q1381 37 1379 38Q1377 39 1375 39Q1373 40 1371 39Q1369 39 1367 39Q1365 38 1364 37Z"/><path d="M1359 46Q1357 45 1354 43Q1352 41 1350 39Q1348 37 1345 35Q1343 32 1341 30Q1339 27 1338 23Q1337 19 1337 15Q1337 12 1339 8Q1340 4 1343 2Q1346 0 1350 -1Q1353 -3 1357 -3Q1360 -4 1363 -4Q1366 -4 1369 -4Q1371 -4 1374 -4Q1376 -5 1379 -5Q1382 -6 1386 -6Q1389 -7 1393 -6Q1396 -5 1399 -3Q1402 0 1404 2Q1406 5 1406 9Q1407 13 1406 16Q1405 20 1404 23Q1402 27 1400 30Q1399 32 1397 35Q1395 37 1392 40Q1390 42 1388 44Q1386 46 1383 48Q1380 49 1377 50Q1374 51 1371 51Q1367 50 1365 49Q1362 48 1359 46Z" stroke-dasharray="10 8"/><path d="M1376 183Q1375 183 1374 183Q1372 183 1371 183Q1369 183 1368 183Q1366 183 1365 183Q1363 183 1361 182Q1360 181 1358 180Q1357 179 1356 178Q1355 177 1355 175Q1354 174 1355 172Q1356 171 1357 170Q1359 168 1360 168Q1362 167 1364 167Q1366 166 1367 166Q1369 166 1370 166Q1372 166 1373 166Q1374 166 1375 165Q1377 165 1378 165Q1380 165 1381 165Q1383 164 1385 165Q1387 165 1389 166Q1391 166 1392 167Q1393 169 1393 170Q1394 172 1394 173Q1393 174 1393 176Q1392 177 1391 178Q1389 179 1388 180Q1387 181 1385 182Q1384 182 1382 182Q1381 183 1379 183Q1378 183 1376 183Z"/><path d="M1378 192Q1375 192 1373 192Q1370 193 1367 193Q1364 193 1361 192Q1358 192 1355 192Q1352 191 1348 190Q1345 188 1342 186Q1339 184 1337 182Q1335 179 1335 176Q1335 173 1336 170Q1337 167 1340 165Q1343 163 1347 161Q1350 160 1354 159Q1357 159 1360 158Q1363 158 1366 158Q1369 158 1371 157Q1374 157 1376 157Q1379 156 1382 156Q1385 155 1388 155Q1392 155 1396 155Q1399 156 1403 157Q1406 159 1409 161Q1411 163 1412 166Q1413 169 1412 172Q1412 175 1410 177Q1409 180 1406 182Q1404 185 1401 186Q1399 188 1396 189Q1393 190 1390 191Q1386 191 1384 192Q1381 192 1378 192Z"/><path d="M1379 197Q1376 197 1372 198Q1369 198 1365 198Q1361 198 1357 198Q1353 198 1349 197Q1345 196 1341 194Q1336 192 1333 190Q1329 187 1327 184Q1324 181 1323 177Q1323 173 1325 169Q1326 165 1330 163Q1334 160 1338 158Q1343 156 1348 155Q1352 154 1356 154Q1360 154 1364 153Q1367 153 1370 153Q1373 152 1377 152Q1380 151 1384 150Q1388 150 1392 150Q1397 149 1402 150Q1407 151 1411 152Q1416 154 1419 157Q1422 160 1423 164Q1424 168 1423 171Q1423 175 1421 178Q1419 182 1416 185Q1413 188 1409 190Q1406 192 1402 193Q1398 195 1394 196Q1390 196 1386 197Q1383 197 1379 197Z"/><path d="M1380 203Q1376 204 1372 204Q1367 204 1363 204Q1358 204 1353 204Q1348 204 1342 203Q1337 201 1332 199Q1326 197 1322 194Q1317 191 1314 187Q1311 182 1310 178Q1309 173 1311 168Q1314 163 1318 160Q1323 156 1329 153Q1335 151 1341 150Q1346 149 1351 149Q1356 148 1361 148Q1365 147 1369 147Q1373 146 1377 146Q1381 145 1386 144Q1391 143 1397 143Q1403 143 1409 144Q1415 144 1421 147Q1427 149 1430 153Q1434 157 1436 161Q1437 166 1436 171Q1436 175 1433 180Q1430 184 1427 188Q1423 191 1418 194Q1414 197 1409 198Q1404 200 1399 201Q1394 202 1389 203Q1385 203 1380 203Z"/><path d="M1439 14Q1438 13 1438 12Q1437 11 1437 9Q1437 8 1437 7Q1437 5 1437 4Q1437 2 1437 1Q1438 0 1438 -2Q1439 -3 1440 -5Q1441 -6 1443 -8Q1444 -9 1446 -11Q1447 -13 1449 -14Q1451 -16 1453 -16Q1455 -17 1457 -17Q1459 -16 1460 -15Q1461 -14 1462 -12Q1462 -10 1462 -9Q1463 -8 1463 -7Q1463 -6 1464 -5Q1465 -4 1465 -3Q1466 -2 1466 0Q1466 0 1466 2Q1466 3 1466 5Q1466 7 1465 9Q1464 11 1462 13Q1461 15 1459 16Q1457 17 1454 17Q1452 17 1451 17Q1449 16 1448 16Q1446 16 1445 16Q1443 16 1442 15Q1440 15 1439 14Z"/><path d="M1431 23Q1429 22 1428 20Q1427 17 1427 15Q1427 13 1427 10Q1427 8 1427 5Q1427 3 1427 0Q1428 -1 1429 -4Q1431 -7 1433 -9Q1434 -12 1437 -15Q1439 -17 1441 -20Q1444 -23 1447 -25Q1450 -28 1454 -29Q1457 -31 1461 -30Q1464 -29 1466 -27Q1468 -25 1468 -22Q1469 -19 1470 -17Q1470 -14 1471 -13Q1472 -11 1473 -9Q1474 -8 1474 -6Q1475 -4 1476 -2Q1476 0 1476 2Q1477 5 1476 8Q1476 11 1474 15Q1473 18 1470 21Q1467 24 1463 26Q1460 27 1456 28Q1453 28 1450 27Q1447 27 1445 26Q1442 26 1440 26Q1437 26 1435 25Q1432 25 1431 23Z"/><path d="M1424 30Q1422 28 1421 25Q1420 22 1419 19Q1419 16 1419 13Q1419 10 1419 7Q1419 3 1420 0Q1421 -2 1422 -6Q1424 -10 1427 -13Q1429 -16 1432 -20Q1435 -23 1438 -27Q1441 -31 1446 -34Q1450 -37 1454 -39Q1459 -41 1463 -40Q1467 -39 1470 -36Q1472 -33 1473 -29Q1474 -26 1475 -23Q1476 -19 1477 -17Q1478 -15 1479 -13Q1480 -11 1481 -8Q1482 -6 1483 -3Q1484 0 1484 3Q1484 6 1483 10Q1483 15 1481 19Q1479 24 1475 28Q1472 31 1467 33Q1462 35 1458 36Q1453 36 1450 35Q1446 35 1443 34Q1439 34 1436 33Q1433 33 1430 32Q1427 32 1424 30Z"/><path d="M1511 259Q1509 262 1507 264Q1505 267 1503 269Q1501 271 1499 273Q1497 275 1495 277Q1492 278 1489 279Q1486 280 1483 281Q1480 282 1477 283Q1473 284 1469 284Q1465 284 1461 284Q1457 283 1453 281Q1449 279 1446 276Q1443 272 1442 268Q1441 265 1441 261Q1441 257 1442 253Q1444 250 1446 247Q1448 244 1450 242Q1453 240 1456 238Q1458 237 1460 235Q1463 234 1465 232Q1466 230 1469 228Q1471 225 1474 223Q1477 221 1481 220Q1485 219 1489 219Q1493 219 1497 221Q1501 223 1504 225Q1507 228 1510 231Q1512 235 1514 238Q1515 242 1515 246Q1515 250 1514 253Q1513 256 1511 259Z"/><path d="M1525 262Q1522 266 1519 269Q1516 273 1514 276Q1511 279 1508 282Q1505 285 1502 287Q1498 289 1494 290Q1490 292 1485 293Q1481 294 1476 296Q1471 297 1465 297Q1459 298 1453 297Q1447 296 1441 294Q1436 291 1432 286Q1428 281 1426 275Q1424 269 1425 264Q1425 258 1427 253Q1428 248 1431 244Q1434 240 1438 237Q1442 234 1446 232Q1449 230 1453 228Q1456 226 1458 223Q1461 220 1464 217Q1467 214 1472 210Q1476 207 1482 205Q1487 204 1493 204Q1499 205 1505 207Q1510 210 1515 213Q1520 217 1523 222Q1527 227 1529 232Q1531 237 1531 243Q1531 248 1529 253Q1527 258 1525 262Z"/><path d="M1496 17Q1497 14 1498 11Q1500 7 1501 5Q1503 3 1503 1Q1503 0 1503 -2Q1502 -3 1501 -6Q1500 -9 1500 -12Q1501 -16 1503 -19Q1505 -22 1508 -25Q1512 -27 1516 -28Q1520 -30 1523 -31Q1527 -32 1531 -32Q1534 -32 1537 -31Q1540 -30 1542 -28Q1544 -26 1546 -24Q1547 -22 1548 -20Q1549 -17 1550 -15Q1551 -13 1551 -11Q1551 -9 1551 -6Q1550 -4 1548 -1Q1546 0 1544 2Q1542 4 1541 6Q1539 8 1538 11Q1536 14 1534 17Q1532 20 1529 24Q1526 27 1522 29Q1518 31 1514 32Q1510 32 1506 31Q1503 30 1500 28Q1498 26 1497 23Q1496 20 1496 17Z"/><path d="M1487 24Q1487 19 1490 15Q1492 11 1494 8Q1496 5 1496 2Q1497 0 1495 -2Q1494 -4 1493 -8Q1492 -12 1492 -16Q1493 -21 1496 -25Q1499 -30 1503 -33Q1508 -36 1513 -38Q1518 -40 1524 -41Q1529 -42 1534 -42Q1538 -42 1543 -41Q1547 -40 1549 -37Q1552 -35 1554 -32Q1556 -29 1557 -26Q1558 -23 1559 -20Q1561 -18 1561 -14Q1562 -11 1561 -8Q1560 -5 1557 -1Q1555 1 1552 4Q1549 7 1547 9Q1545 12 1543 16Q1541 19 1538 24Q1536 29 1531 33Q1527 37 1522 40Q1516 43 1510 44Q1505 44 1500 43Q1495 42 1492 39Q1489 36 1487 32Q1486 28 1487 24Z"/><path d="M1470 36Q1471 30 1474 23Q1477 17 1480 13Q1483 8 1484 4Q1484 1 1483 -2Q1481 -6 1479 -11Q1477 -17 1478 -23Q1479 -30 1483 -37Q1488 -43 1494 -48Q1501 -52 1509 -55Q1516 -58 1524 -60Q1532 -61 1539 -62Q1546 -62 1552 -60Q1558 -58 1562 -54Q1566 -51 1569 -46Q1571 -42 1573 -38Q1575 -33 1577 -29Q1578 -25 1579 -21Q1580 -16 1578 -11Q1577 -6 1573 -1Q1570 3 1566 7Q1562 11 1558 15Q1555 19 1552 24Q1550 30 1546 36Q1542 43 1535 49Q1529 56 1521 60Q1513 64 1505 65Q1497 66 1490 64Q1483 62 1478 58Q1473 54 1471 48Q1469 43 1470 36Z"/><path d="M1462 42Q1463 34 1467 27Q1470 20 1474 15Q1477 9 1478 5Q1479 1 1477 -2Q1475 -6 1472 -13Q1470 -19 1471 -27Q1472 -34 1477 -42Q1482 -49 1490 -55Q1498 -60 1507 -63Q1515 -67 1524 -69Q1533 -70 1541 -70Q1549 -71 1556 -68Q1563 -66 1568 -62Q1572 -58 1575 -53Q1578 -48 1580 -43Q1583 -38 1585 -33Q1587 -29 1588 -24Q1588 -18 1587 -12Q1585 -7 1581 -1Q1577 3 1572 8Q1567 13 1564 17Q1560 22 1557 28Q1554 34 1549 42Q1545 50 1537 57Q1530 64 1521 69Q1511 74 1502 75Q1493 76 1485 74Q1477 72 1471 67Q1466 62 1463 56Q1461 49 1462 42Z" stroke-dasharray="10 8"/><path d="M1463 41Q1465 33 1468 26Q1472 20 1475 14Q1478 9 1479 5Q1480 1 1478 -2Q1476 -6 1474 -12Q1472 -18 1472 -26Q1473 -34 1478 -41Q1483 -48 1491 -53Q1498 -59 1507 -62Q1516 -65 1524 -67Q1533 -69 1541 -69Q1549 -69 1555 -67Q1562 -65 1567 -61Q1571 -57 1574 -52Q1577 -47 1579 -42Q1581 -37 1583 -33Q1585 -28 1586 -23Q1587 -18 1585 -12Q1584 -7 1580 -1Q1576 3 1571 8Q1566 12 1563 17Q1559 22 1556 28Q1553 34 1549 41Q1544 48 1537 56Q1530 63 1521 68Q1512 72 1503 73Q1493 74 1486 72Q1478 70 1472 66Q1467 61 1465 55Q1462 48 1463 41Z"/><path d="M1557 346Q1557 348 1558 351Q1559 354 1559 357Q1560 361 1559 364Q1558 368 1557 371Q1555 374 1552 376Q1550 378 1547 380Q1544 381 1541 382Q1537 382 1534 382Q1531 381 1528 379Q1526 377 1524 374Q1522 372 1520 369Q1519 366 1517 364Q1516 361 1514 359Q1513 356 1513 353Q1512 350 1513 347Q1513 344 1515 341Q1516 338 1518 336Q1519 334 1520 331Q1521 328 1522 325Q1523 322 1525 319Q1527 316 1529 314Q1532 312 1535 310Q1538 309 1542 309Q1545 309 1548 310Q1552 312 1554 314Q1557 316 1558 320Q1560 323 1560 327Q1560 331 1559 335Q1558 338 1558 341Q1557 343 1557 346Z" stroke-dasharray="10 8"/><path d="M1564 346Q1565 349 1566 353Q1567 357 1567 361Q1568 366 1567 371Q1566 375 1563 379Q1561 383 1557 386Q1554 390 1550 392Q1546 394 1542 395Q1537 395 1533 394Q1529 394 1525 391Q1521 388 1519 384Q1516 381 1514 377Q1512 373 1510 370Q1508 367 1506 363Q1504 359 1504 355Q1503 351 1504 347Q1505 343 1507 339Q1508 335 1510 332Q1512 329 1514 326Q1515 322 1516 318Q1518 314 1520 310Q1523 305 1526 302Q1530 299 1534 298Q1539 296 1543 296Q1548 296 1552 298Q1556 299 1560 302Q1564 306 1566 310Q1568 315 1568 320Q1568 326 1567 331Q1566 335 1565 339Q1564 343 1564 346Z"/><path d="M1569 346Q1569 349 1571 354Q1572 358 1572 364Q1573 369 1572 375Q1571 380 1568 385Q1565 390 1561 394Q1557 397 1552 400Q1547 402 1542 403Q1537 404 1532 403Q1527 402 1523 399Q1519 395 1515 391Q1512 387 1510 383Q1507 378 1505 374Q1502 370 1500 366Q1498 362 1497 357Q1497 352 1498 347Q1499 342 1501 338Q1503 334 1505 330Q1508 326 1509 322Q1511 318 1513 313Q1514 308 1517 303Q1520 298 1524 294Q1529 291 1534 289Q1539 287 1544 287Q1549 287 1555 289Q1560 291 1564 295Q1568 298 1571 304Q1573 309 1573 316Q1573 322 1572 328Q1571 333 1569 338Q1568 342 1569 346Z"/><path d="M1626 1Q1622 3 1618 3Q1614 4 1609 3Q1605 2 1601 0Q1598 0 1595 -1Q1592 -1 1588 -1Q1585 -1 1580 -1Q1576 -1 1572 -2Q1568 -4 1565 -7Q1562 -11 1560 -15Q1558 -19 1558 -23Q1557 -27 1556 -31Q1556 -36 1556 -40Q1555 -44 1556 -48Q1557 -52 1559 -55Q1561 -59 1564 -61Q1567 -64 1570 -66Q1573 -68 1577 -70Q1580 -71 1585 -72Q1589 -72 1593 -71Q1597 -69 1600 -66Q1603 -63 1606 -59Q1608 -56 1610 -53Q1613 -50 1616 -49Q1619 -47 1623 -44Q1627 -42 1630 -38Q1634 -35 1636 -30Q1638 -26 1638 -21Q1638 -16 1636 -12Q1635 -8 1632 -4Q1630 -1 1626 1Z"/><path d="M1639 14Q1634 17 1628 18Q1622 19 1616 17Q1610 16 1605 14Q1599 12 1595 11Q1591 10 1586 10Q1581 11 1575 11Q1569 11 1563 9Q1557 6 1553 2Q1548 -2 1546 -8Q1544 -14 1543 -20Q1542 -26 1541 -32Q1540 -37 1540 -43Q1540 -49 1541 -55Q1542 -61 1545 -65Q1548 -70 1552 -74Q1556 -77 1560 -80Q1565 -83 1570 -86Q1575 -88 1581 -88Q1586 -89 1592 -87Q1598 -85 1603 -80Q1607 -76 1611 -71Q1614 -66 1617 -62Q1620 -58 1625 -56Q1629 -53 1634 -50Q1640 -47 1645 -41Q1650 -36 1653 -30Q1656 -23 1656 -17Q1656 -10 1654 -4Q1652 1 1648 6Q1644 11 1639 14Z"/><path d="M1595 180Q1594 181 1592 180Q1591 180 1589 180Q1588 179 1587 179Q1585 178 1584 178Q1583 178 1581 177Q1580 177 1579 176Q1577 175 1576 174Q1575 172 1575 171Q1574 169 1574 167Q1574 166 1574 164Q1574 162 1574 161Q1575 160 1575 158Q1576 157 1577 156Q1578 155 1578 153Q1579 152 1580 151Q1581 150 1583 149Q1584 148 1585 148Q1587 148 1589 148Q1590 149 1592 150Q1593 152 1594 153Q1595 154 1595 156Q1596 157 1597 158Q1597 160 1598 161Q1599 162 1600 164Q1600 165 1601 167Q1601 168 1602 170Q1602 172 1602 174Q1601 175 1601 177Q1600 178 1598 179Q1597 180 1595 180Z"/><path d="M1604 197Q1601 197 1597 196Q1594 196 1591 195Q1588 194 1586 193Q1583 193 1580 192Q1577 191 1575 190Q1572 189 1569 187Q1566 185 1564 183Q1562 180 1561 176Q1559 173 1559 169Q1558 166 1559 163Q1559 159 1560 156Q1561 153 1562 151Q1564 148 1565 146Q1567 143 1569 141Q1570 138 1572 136Q1574 133 1577 131Q1580 129 1583 129Q1587 129 1590 130Q1593 131 1596 134Q1599 137 1601 140Q1603 143 1604 146Q1605 148 1607 151Q1608 154 1610 156Q1611 159 1613 162Q1614 165 1615 168Q1616 171 1617 175Q1617 179 1617 183Q1617 186 1615 190Q1613 193 1610 195Q1607 196 1604 197Z"/><path d="M1607 204Q1603 204 1599 203Q1595 202 1592 201Q1588 200 1585 199Q1582 198 1579 198Q1575 197 1572 196Q1568 194 1565 192Q1562 190 1559 186Q1556 183 1555 179Q1553 175 1553 170Q1552 166 1553 162Q1553 158 1554 154Q1555 151 1557 147Q1559 144 1561 141Q1562 138 1564 135Q1566 132 1569 129Q1572 126 1575 124Q1578 122 1582 121Q1586 121 1590 122Q1594 124 1598 127Q1601 130 1603 134Q1606 138 1608 141Q1609 145 1611 148Q1613 151 1614 154Q1616 158 1618 161Q1620 165 1621 169Q1623 173 1623 177Q1624 182 1623 186Q1623 191 1621 195Q1618 199 1615 201Q1612 203 1607 204Z"/><path d="M1613 215Q1608 216 1603 215Q1598 213 1593 212Q1589 211 1585 209Q1580 208 1576 208Q1572 207 1567 205Q1562 203 1558 200Q1554 197 1550 193Q1547 188 1545 183Q1543 177 1542 172Q1541 166 1542 161Q1543 156 1544 151Q1546 146 1548 142Q1550 138 1552 134Q1555 130 1557 126Q1560 122 1563 118Q1567 114 1571 112Q1575 109 1581 108Q1586 107 1591 110Q1596 112 1601 116Q1605 120 1608 125Q1611 130 1614 134Q1616 139 1618 143Q1620 147 1623 151Q1625 155 1627 160Q1629 164 1631 170Q1633 175 1634 181Q1635 187 1634 193Q1633 199 1631 204Q1628 209 1623 212Q1619 214 1613 215Z"/><path d="M1631 249Q1622 250 1613 248Q1605 246 1597 243Q1590 241 1583 239Q1576 238 1568 236Q1561 235 1553 232Q1545 229 1538 224Q1531 219 1525 211Q1520 203 1516 195Q1513 186 1511 176Q1510 167 1511 158Q1512 149 1515 141Q1517 133 1521 126Q1525 119 1529 113Q1533 106 1537 100Q1542 93 1547 86Q1553 80 1560 75Q1567 70 1576 69Q1585 68 1594 72Q1602 75 1610 82Q1617 89 1622 97Q1627 106 1631 113Q1635 121 1639 128Q1642 135 1646 141Q1650 148 1654 156Q1658 164 1661 173Q1664 182 1665 191Q1667 201 1665 211Q1664 221 1660 230Q1655 238 1647 243Q1640 248 1631 249Z"/><path d="M1627 115Q1627 118 1628 122Q1628 126 1627 130Q1626 134 1623 137Q1621 140 1617 142Q1613 143 1609 143Q1605 143 1601 142Q1597 140 1594 138Q1591 135 1589 132Q1587 128 1586 125Q1585 122 1584 120Q1583 117 1582 115Q1581 112 1579 110Q1578 108 1576 105Q1575 102 1575 99Q1575 96 1576 93Q1577 90 1579 87Q1580 84 1583 82Q1585 80 1587 78Q1590 76 1593 74Q1596 72 1600 71Q1603 70 1607 71Q1611 71 1614 72Q1618 73 1621 76Q1624 78 1626 81Q1628 84 1629 87Q1630 91 1630 94Q1629 97 1628 100Q1627 103 1627 105Q1626 108 1626 110Q1626 112 1627 115Z"/><path d="M1635 119Q1635 123 1636 128Q1636 133 1635 138Q1633 144 1630 148Q1627 152 1622 154Q1617 156 1611 156Q1605 156 1600 154Q1595 152 1591 149Q1587 145 1584 141Q1582 136 1580 132Q1579 128 1577 124Q1576 121 1574 118Q1573 115 1571 112Q1569 108 1567 105Q1565 101 1565 97Q1565 92 1566 88Q1567 84 1570 81Q1572 77 1575 74Q1578 71 1582 68Q1585 66 1589 63Q1593 61 1598 60Q1603 59 1608 59Q1613 59 1618 61Q1622 63 1626 66Q1631 69 1633 73Q1636 76 1637 81Q1639 86 1638 90Q1638 95 1637 98Q1635 102 1634 105Q1633 108 1633 112Q1634 115 1635 119Z" stroke-dasharray="10 8"/><path d="M1647 124Q1648 130 1648 137Q1649 144 1647 151Q1645 159 1640 165Q1635 170 1628 174Q1621 177 1614 177Q1606 177 1599 174Q1592 171 1586 166Q1580 161 1576 155Q1573 149 1571 143Q1568 137 1567 132Q1565 127 1563 123Q1560 119 1558 114Q1555 110 1552 104Q1550 99 1550 93Q1549 87 1551 82Q1553 76 1556 71Q1560 66 1564 62Q1568 58 1573 54Q1578 50 1584 47Q1589 44 1596 42Q1602 40 1609 41Q1616 41 1623 43Q1630 46 1635 50Q1641 54 1645 60Q1649 65 1651 72Q1652 78 1652 84Q1651 90 1649 96Q1648 101 1646 105Q1645 110 1645 114Q1645 118 1647 124Z"/><path d="M1662 131Q1664 139 1665 149Q1665 159 1663 169Q1660 179 1654 187Q1647 195 1638 199Q1628 203 1617 203Q1607 203 1597 199Q1587 195 1579 188Q1571 181 1566 173Q1561 165 1558 157Q1555 149 1553 142Q1550 135 1547 130Q1544 124 1540 118Q1536 111 1533 104Q1530 97 1529 89Q1529 81 1531 73Q1534 65 1538 59Q1543 52 1549 46Q1555 40 1561 35Q1568 29 1576 25Q1584 21 1593 19Q1602 16 1611 17Q1621 17 1630 20Q1639 24 1647 29Q1655 35 1660 43Q1666 50 1668 59Q1670 68 1669 76Q1669 85 1666 92Q1664 100 1662 105Q1660 111 1660 117Q1661 123 1662 131Z"/><path d="M1671 206Q1672 209 1671 212Q1670 216 1667 218Q1664 221 1660 222Q1656 223 1651 224Q1646 224 1642 224Q1638 223 1635 223Q1632 223 1629 223Q1626 224 1623 224Q1619 225 1616 225Q1612 226 1607 225Q1603 225 1598 224Q1593 223 1589 221Q1585 219 1582 216Q1578 213 1577 210Q1576 207 1577 203Q1579 200 1581 198Q1584 195 1588 193Q1591 191 1594 190Q1597 188 1600 187Q1603 186 1607 185Q1610 184 1613 183Q1616 183 1620 183Q1623 183 1627 183Q1630 183 1634 183Q1638 184 1642 184Q1646 185 1650 186Q1654 188 1657 190Q1661 192 1664 194Q1667 197 1669 200Q1671 203 1671 206Z"/><path d="M1736 107Q1738 112 1739 117Q1741 123 1741 129Q1740 135 1738 141Q1736 147 1732 152Q1728 157 1722 161Q1716 164 1710 167Q1704 169 1697 170Q1690 171 1684 170Q1677 169 1671 166Q1665 163 1661 159Q1656 154 1653 149Q1650 144 1648 139Q1646 134 1645 129Q1643 125 1642 120Q1640 116 1639 111Q1638 106 1637 101Q1637 96 1636 90Q1636 85 1637 78Q1638 72 1641 65Q1644 59 1649 54Q1654 49 1661 46Q1668 44 1675 44Q1683 45 1689 47Q1696 50 1701 54Q1707 58 1711 63Q1715 67 1718 71Q1721 76 1724 80Q1726 84 1728 89Q1730 93 1732 97Q1734 102 1736 107Z"/><path d="M1750 106Q1753 112 1755 120Q1756 127 1756 135Q1756 143 1753 150Q1750 158 1745 164Q1740 171 1732 176Q1725 181 1717 184Q1709 187 1700 188Q1691 189 1683 188Q1674 187 1666 183Q1659 179 1653 173Q1647 167 1643 160Q1640 154 1637 148Q1634 141 1632 135Q1630 130 1628 124Q1627 118 1625 112Q1624 106 1623 99Q1622 92 1622 85Q1622 77 1623 69Q1624 61 1628 53Q1631 44 1638 38Q1645 31 1654 28Q1663 25 1672 25Q1682 26 1690 30Q1699 33 1706 38Q1713 43 1718 49Q1723 55 1728 60Q1732 66 1735 72Q1738 77 1740 83Q1743 88 1745 94Q1748 100 1750 106Z"/><path d="M1760 106Q1762 113 1765 121Q1767 129 1767 139Q1766 148 1763 156Q1760 165 1754 173Q1747 180 1739 186Q1731 191 1722 195Q1712 198 1702 200Q1692 201 1682 200Q1672 198 1663 194Q1655 189 1648 182Q1641 176 1637 168Q1633 160 1630 153Q1627 146 1624 139Q1622 133 1620 126Q1618 119 1616 112Q1614 105 1613 98Q1612 90 1612 81Q1612 73 1614 63Q1615 54 1619 44Q1623 35 1631 27Q1639 20 1649 16Q1659 12 1670 13Q1681 14 1691 18Q1701 22 1709 28Q1717 34 1723 40Q1729 47 1734 53Q1738 60 1742 66Q1745 73 1748 79Q1751 85 1754 92Q1757 98 1760 106Z"/><path d="M1789 104Q1793 114 1796 126Q1799 138 1799 150Q1798 163 1794 175Q1789 188 1780 198Q1772 208 1760 216Q1749 224 1735 229Q1722 234 1708 236Q1694 238 1680 236Q1666 234 1654 228Q1642 221 1633 212Q1623 202 1617 192Q1611 181 1607 171Q1603 161 1600 151Q1596 142 1593 133Q1590 123 1588 114Q1586 104 1584 93Q1583 82 1583 70Q1582 58 1584 45Q1586 32 1592 19Q1598 5 1609 -4Q1619 -15 1634 -20Q1648 -25 1663 -24Q1679 -23 1692 -18Q1706 -12 1717 -4Q1729 4 1737 13Q1746 22 1752 31Q1759 40 1764 49Q1769 58 1773 67Q1777 76 1781 85Q1785 94 1789 104Z"/><path d="M1692 338Q1690 340 1688 343Q1685 345 1683 348Q1680 351 1676 353Q1673 356 1668 358Q1664 359 1659 360Q1654 360 1650 358Q1646 356 1643 352Q1641 349 1640 344Q1640 339 1642 335Q1643 330 1644 327Q1646 323 1647 320Q1648 317 1649 314Q1649 312 1650 309Q1651 306 1652 303Q1653 299 1655 296Q1657 293 1660 291Q1663 288 1666 286Q1670 284 1674 283Q1678 282 1682 283Q1686 283 1689 284Q1693 286 1696 288Q1699 289 1702 292Q1705 294 1708 297Q1711 300 1712 303Q1714 307 1714 311Q1714 315 1712 318Q1710 322 1707 325Q1704 328 1701 330Q1698 332 1696 334Q1693 336 1692 338Z"/><path d="M1695 342Q1693 345 1690 348Q1688 351 1684 355Q1681 358 1677 361Q1672 365 1666 367Q1661 369 1655 369Q1649 369 1644 367Q1639 365 1636 360Q1633 355 1632 350Q1632 344 1634 338Q1635 333 1637 328Q1639 324 1641 320Q1642 317 1643 313Q1643 310 1644 306Q1645 302 1646 299Q1648 295 1650 291Q1653 287 1657 284Q1660 281 1664 278Q1669 276 1674 275Q1678 274 1683 274Q1688 274 1693 276Q1697 278 1701 280Q1705 282 1709 285Q1712 288 1716 292Q1719 295 1721 299Q1723 304 1723 309Q1723 313 1720 318Q1718 323 1714 326Q1711 330 1707 333Q1704 335 1701 337Q1698 340 1695 342Z"/><path d="M1702 350Q1699 353 1695 357Q1692 362 1687 366Q1683 371 1677 375Q1671 379 1664 382Q1656 385 1649 385Q1641 385 1634 382Q1627 379 1623 373Q1619 367 1619 359Q1618 351 1620 344Q1623 337 1625 331Q1628 325 1630 321Q1631 316 1632 311Q1633 307 1634 302Q1635 297 1637 292Q1639 287 1643 282Q1646 277 1651 273Q1655 269 1661 266Q1667 262 1673 261Q1679 259 1686 260Q1692 260 1698 262Q1704 264 1709 268Q1714 271 1719 274Q1724 278 1728 283Q1733 287 1735 293Q1738 299 1738 305Q1738 312 1735 318Q1732 324 1727 329Q1722 333 1717 337Q1712 340 1709 343Q1705 346 1702 350Z"/><path d="M1784 72Q1784 77 1782 80Q1781 84 1779 88Q1776 91 1773 94Q1769 96 1765 98Q1761 100 1757 101Q1752 102 1748 103Q1743 103 1739 103Q1734 103 1729 103Q1724 102 1719 101Q1714 100 1710 98Q1705 95 1701 92Q1696 89 1693 85Q1690 81 1688 76Q1687 71 1687 67Q1688 62 1690 58Q1692 54 1695 51Q1698 48 1701 45Q1704 42 1708 40Q1711 38 1714 35Q1717 33 1721 31Q1724 29 1729 27Q1733 26 1738 25Q1743 24 1748 25Q1754 25 1759 27Q1764 29 1768 32Q1773 35 1776 39Q1779 43 1781 47Q1783 51 1784 56Q1785 60 1785 64Q1785 68 1784 72Z" stroke-dasharray="10 8"/><path d="M1802 75Q1801 81 1799 86Q1797 91 1794 96Q1790 101 1786 104Q1781 108 1775 111Q1770 113 1764 114Q1758 116 1751 116Q1745 117 1739 117Q1732 117 1726 117Q1719 116 1712 114Q1705 113 1699 110Q1692 107 1686 102Q1681 98 1676 92Q1672 86 1670 80Q1668 74 1668 67Q1669 61 1671 55Q1674 50 1678 45Q1683 41 1687 37Q1692 34 1696 31Q1700 27 1705 24Q1709 21 1714 18Q1719 15 1725 13Q1731 11 1738 10Q1745 9 1752 10Q1759 10 1766 13Q1773 15 1779 19Q1785 24 1790 29Q1794 34 1797 40Q1800 46 1801 52Q1802 58 1802 64Q1803 69 1802 75Z" stroke-dasharray="10 8"/><path d="M1814 77Q1813 84 1811 90Q1808 96 1804 102Q1800 108 1795 112Q1789 116 1782 119Q1776 122 1768 124Q1761 126 1754 126Q1746 127 1739 127Q1731 127 1723 127Q1715 126 1707 124Q1699 122 1691 118Q1683 115 1676 109Q1669 104 1664 97Q1659 91 1657 83Q1654 75 1655 68Q1655 60 1659 53Q1662 47 1667 41Q1672 36 1677 32Q1683 28 1688 24Q1693 20 1698 16Q1704 13 1710 9Q1715 5 1723 3Q1730 0 1738 0Q1746 -1 1755 0Q1763 0 1772 3Q1780 6 1787 11Q1794 15 1800 22Q1805 28 1809 35Q1812 42 1813 49Q1815 56 1815 63Q1815 70 1814 77Z"/><path d="M1825 79Q1824 86 1821 94Q1819 101 1814 107Q1809 114 1803 119Q1797 124 1789 127Q1781 130 1773 132Q1765 134 1756 135Q1748 136 1739 136Q1730 136 1721 135Q1712 135 1703 132Q1693 130 1684 126Q1675 122 1667 116Q1659 110 1654 102Q1648 94 1645 85Q1642 77 1643 68Q1643 59 1647 52Q1651 44 1657 38Q1662 32 1669 27Q1675 22 1681 18Q1687 14 1693 9Q1699 5 1705 1Q1712 -2 1720 -5Q1729 -8 1738 -10Q1747 -11 1757 -10Q1767 -9 1777 -5Q1786 -2 1794 3Q1803 8 1809 15Q1815 23 1819 31Q1822 39 1824 47Q1826 55 1826 63Q1826 71 1825 79Z"/><path d="M1830 79Q1829 88 1826 95Q1823 103 1819 110Q1814 117 1807 122Q1800 127 1792 131Q1784 134 1775 136Q1766 138 1757 139Q1748 140 1739 141Q1730 141 1720 140Q1710 139 1700 136Q1691 134 1681 129Q1671 125 1663 119Q1655 112 1648 104Q1642 96 1639 87Q1636 77 1637 68Q1637 59 1642 51Q1646 43 1652 36Q1658 30 1664 25Q1671 20 1677 15Q1683 10 1690 6Q1696 1 1703 -2Q1711 -6 1719 -10Q1728 -13 1738 -14Q1748 -16 1758 -15Q1769 -13 1779 -10Q1789 -6 1798 0Q1807 5 1813 12Q1820 20 1824 29Q1828 37 1829 46Q1831 54 1831 63Q1831 71 1830 79Z"/><path d="M1732 212Q1728 214 1722 215Q1717 216 1712 215Q1707 215 1703 212Q1698 210 1695 207Q1692 203 1690 200Q1689 196 1687 193Q1686 189 1686 186Q1685 182 1686 179Q1687 176 1688 173Q1690 170 1692 167Q1693 164 1695 160Q1696 157 1698 154Q1700 150 1704 147Q1707 144 1712 142Q1717 140 1722 141Q1728 141 1732 143Q1737 144 1741 146Q1745 148 1749 150Q1753 152 1757 154Q1760 156 1763 159Q1766 162 1767 165Q1769 169 1770 172Q1771 175 1771 179Q1771 182 1771 186Q1771 190 1769 193Q1768 197 1764 200Q1761 202 1757 204Q1753 206 1749 207Q1744 208 1740 209Q1736 211 1732 212Z"/><path d="M1839 27Q1836 30 1833 32Q1830 34 1828 36Q1825 38 1822 40Q1820 41 1817 42Q1815 43 1812 45Q1810 46 1807 48Q1804 50 1800 52Q1796 54 1792 54Q1788 54 1786 52Q1783 50 1782 47Q1781 43 1781 39Q1781 34 1781 30Q1782 26 1782 22Q1783 18 1784 14Q1785 10 1787 7Q1790 3 1793 1Q1796 -1 1799 -3Q1802 -5 1804 -6Q1807 -8 1810 -10Q1812 -11 1815 -12Q1818 -14 1821 -14Q1823 -14 1826 -14Q1829 -13 1831 -13Q1834 -12 1837 -11Q1840 -11 1844 -10Q1847 -8 1850 -5Q1852 -2 1852 1Q1853 6 1851 11Q1849 15 1845 20Q1842 24 1839 27Z"/><path d="M1814 368Q1811 368 1808 367Q1804 366 1801 364Q1798 361 1795 357Q1792 354 1790 350Q1788 345 1786 341Q1784 336 1782 332Q1781 327 1780 323Q1778 318 1778 313Q1777 309 1777 304Q1776 299 1776 295Q1776 290 1777 285Q1777 280 1778 276Q1779 271 1780 266Q1781 261 1784 257Q1786 253 1789 251Q1792 249 1795 249Q1799 249 1802 251Q1805 254 1808 258Q1811 262 1814 267Q1816 272 1817 278Q1819 283 1820 288Q1821 293 1821 298Q1822 302 1823 306Q1823 310 1824 315Q1825 319 1826 325Q1828 330 1828 336Q1828 342 1828 347Q1827 353 1825 357Q1823 362 1821 364Q1818 367 1814 368Z"/><path d="M1819 388Q1815 389 1810 387Q1805 386 1801 383Q1797 379 1793 374Q1789 369 1786 364Q1783 358 1780 352Q1778 346 1776 340Q1774 334 1772 327Q1770 321 1769 315Q1768 308 1768 302Q1767 296 1767 289Q1768 283 1768 277Q1769 270 1770 264Q1771 257 1773 251Q1774 244 1777 239Q1780 233 1784 230Q1788 227 1793 227Q1797 227 1802 231Q1807 234 1811 240Q1815 245 1818 252Q1821 259 1823 267Q1825 274 1826 281Q1827 287 1828 293Q1829 299 1830 305Q1831 311 1832 317Q1834 323 1835 330Q1837 337 1837 345Q1838 353 1837 361Q1836 368 1834 374Q1831 380 1827 384Q1823 387 1819 388Z"/><path d="M1910 41Q1911 44 1911 48Q1912 51 1912 55Q1911 59 1910 63Q1908 67 1905 69Q1902 72 1898 73Q1894 73 1891 72Q1887 71 1884 70Q1881 68 1879 66Q1877 64 1875 63Q1873 62 1871 61Q1868 60 1866 59Q1864 58 1861 56Q1859 54 1857 52Q1854 50 1853 46Q1851 43 1851 39Q1851 36 1852 32Q1852 29 1854 26Q1856 22 1859 20Q1861 18 1864 16Q1866 14 1869 12Q1872 11 1875 9Q1878 8 1881 8Q1884 8 1887 9Q1890 9 1892 11Q1894 13 1896 16Q1898 18 1899 20Q1901 23 1902 25Q1903 28 1905 30Q1906 32 1907 35Q1908 38 1910 41Z"/><path d="M1887 224Q1883 225 1880 224Q1877 224 1874 224Q1871 224 1869 224Q1866 225 1863 226Q1860 226 1857 227Q1853 227 1850 226Q1846 225 1843 222Q1840 219 1838 216Q1836 213 1834 209Q1833 205 1832 201Q1832 198 1833 194Q1833 190 1835 187Q1837 184 1839 182Q1841 180 1843 178Q1845 176 1847 174Q1849 172 1851 170Q1853 168 1856 166Q1859 165 1862 165Q1865 165 1869 166Q1872 167 1875 169Q1877 171 1880 173Q1883 174 1886 176Q1889 178 1891 181Q1894 184 1896 187Q1898 191 1899 194Q1899 198 1899 202Q1899 205 1899 209Q1898 212 1896 216Q1895 219 1892 221Q1890 223 1887 224Z"/><path d="M1943 130Q1942 131 1941 132Q1940 133 1939 133Q1937 133 1936 133Q1934 133 1933 132Q1931 131 1930 129Q1928 127 1927 125Q1926 123 1926 121Q1925 118 1925 116Q1925 114 1925 113Q1925 111 1925 109Q1925 108 1925 106Q1925 105 1926 103Q1926 102 1926 101Q1927 100 1928 99Q1928 98 1929 97Q1930 95 1930 94Q1931 93 1933 93Q1934 92 1935 93Q1937 93 1939 94Q1940 95 1941 96Q1943 98 1944 100Q1945 102 1946 104Q1947 106 1947 109Q1947 111 1947 113Q1946 114 1946 116Q1946 117 1945 119Q1945 120 1945 121Q1944 122 1944 124Q1944 125 1944 127Q1943 128 1943 130Z"/><path d="M1947 141Q1946 143 1944 145Q1943 146 1940 147Q1938 147 1936 147Q1933 146 1931 144Q1928 142 1926 139Q1924 136 1922 133Q1920 129 1920 126Q1919 122 1918 119Q1918 116 1917 113Q1917 110 1917 107Q1918 104 1918 102Q1918 100 1919 97Q1920 95 1921 94Q1921 92 1922 90Q1923 88 1924 86Q1926 84 1927 82Q1929 81 1931 80Q1933 79 1935 79Q1938 80 1940 81Q1943 83 1945 86Q1948 88 1950 92Q1951 95 1953 99Q1954 102 1954 106Q1954 110 1954 113Q1954 116 1953 118Q1952 120 1952 122Q1951 124 1951 127Q1950 129 1950 131Q1950 133 1949 136Q1948 139 1947 141Z" stroke-dasharray="10 8"/><path d="M1958 167Q1956 171 1953 174Q1949 177 1945 178Q1941 179 1936 178Q1931 177 1926 173Q1921 170 1917 164Q1913 159 1910 152Q1906 145 1905 138Q1903 131 1902 125Q1901 118 1901 113Q1900 107 1901 102Q1901 96 1902 92Q1902 87 1904 83Q1905 79 1907 76Q1908 72 1910 68Q1912 65 1914 61Q1916 57 1919 54Q1922 51 1926 49Q1930 48 1935 49Q1940 49 1945 52Q1950 55 1955 60Q1959 66 1963 72Q1966 79 1968 86Q1971 93 1971 100Q1972 107 1971 113Q1970 118 1969 123Q1968 128 1966 131Q1965 135 1965 139Q1964 144 1963 148Q1963 153 1962 158Q1961 163 1958 167Z"/><path d="M1963 179Q1961 185 1957 188Q1952 192 1947 193Q1942 194 1936 193Q1930 191 1924 187Q1918 183 1913 176Q1907 169 1904 161Q1900 152 1898 144Q1895 135 1894 127Q1893 120 1893 113Q1892 105 1893 99Q1893 93 1894 87Q1895 82 1896 77Q1898 72 1900 67Q1902 63 1904 58Q1906 54 1909 49Q1912 45 1916 41Q1919 37 1924 35Q1929 33 1935 34Q1941 35 1947 39Q1953 42 1959 49Q1964 55 1969 63Q1973 71 1976 80Q1979 88 1979 97Q1980 105 1979 113Q1978 120 1977 125Q1975 131 1973 136Q1972 140 1971 145Q1970 150 1970 156Q1969 162 1968 168Q1966 174 1963 179Z"/><path d="M1964 180Q1961 185 1957 189Q1953 193 1947 194Q1942 195 1936 194Q1930 192 1924 188Q1918 184 1912 177Q1907 170 1903 161Q1899 153 1897 144Q1895 136 1894 128Q1893 120 1892 113Q1892 105 1892 99Q1892 93 1893 87Q1894 81 1896 76Q1898 71 1900 67Q1902 62 1904 58Q1906 53 1909 49Q1912 44 1915 40Q1919 36 1924 34Q1929 32 1935 33Q1941 34 1947 38Q1953 42 1959 48Q1965 54 1969 62Q1974 70 1976 79Q1979 88 1980 97Q1981 105 1980 113Q1979 120 1977 125Q1975 131 1974 136Q1972 141 1972 146Q1971 151 1970 157Q1969 163 1968 169Q1966 175 1964 180Z"/><path d="M1900 302Q1895 303 1889 302Q1884 301 1879 298Q1874 295 1871 290Q1868 284 1867 278Q1865 272 1865 266Q1865 260 1865 254Q1865 248 1865 243Q1865 237 1866 232Q1866 226 1868 221Q1870 215 1872 210Q1875 205 1878 199Q1881 194 1885 189Q1889 184 1894 180Q1899 175 1905 174Q1911 173 1917 174Q1922 176 1927 180Q1931 184 1935 189Q1938 194 1941 198Q1944 203 1947 207Q1949 212 1951 217Q1953 222 1954 228Q1954 233 1954 239Q1953 245 1952 251Q1951 256 1950 262Q1948 268 1946 274Q1944 280 1940 285Q1936 290 1932 293Q1927 296 1922 298Q1916 300 1911 301Q1906 302 1900 302Z"/><path d="M1898 324Q1890 325 1883 324Q1875 323 1869 319Q1862 314 1858 307Q1854 300 1852 291Q1850 283 1849 275Q1849 266 1849 259Q1849 251 1849 244Q1849 236 1850 229Q1851 221 1854 214Q1856 206 1859 199Q1863 192 1867 184Q1871 177 1876 170Q1882 163 1889 157Q1896 152 1904 150Q1912 148 1920 150Q1927 153 1933 158Q1940 164 1944 170Q1949 176 1953 182Q1957 189 1960 195Q1964 201 1967 208Q1969 215 1970 223Q1971 231 1970 238Q1970 246 1968 254Q1967 262 1965 270Q1963 278 1960 286Q1957 294 1952 300Q1947 307 1940 312Q1933 316 1926 319Q1919 321 1912 322Q1905 324 1898 324Z"/><path d="M1895 345Q1886 346 1876 345Q1867 343 1859 338Q1851 333 1845 324Q1840 315 1838 304Q1835 293 1835 283Q1834 273 1834 263Q1834 253 1834 244Q1835 235 1836 225Q1837 216 1840 207Q1843 197 1847 188Q1851 179 1857 170Q1862 161 1869 152Q1875 143 1884 136Q1893 129 1903 127Q1913 124 1922 127Q1932 130 1940 137Q1947 144 1953 152Q1959 160 1964 168Q1969 175 1974 183Q1978 191 1981 200Q1984 209 1986 218Q1987 228 1986 238Q1985 248 1983 257Q1982 267 1979 277Q1977 287 1973 297Q1969 307 1962 315Q1956 324 1948 329Q1940 335 1931 338Q1922 341 1913 343Q1904 345 1895 345Z"/><path d="M1969 33Q1968 33 1967 33Q1966 33 1964 33Q1963 32 1962 31Q1961 31 1961 30Q1960 29 1959 28Q1959 27 1958 26Q1958 25 1957 24Q1957 23 1957 22Q1956 21 1956 19Q1955 18 1955 17Q1955 15 1956 14Q1956 13 1957 12Q1957 11 1958 10Q1959 9 1960 9Q1961 8 1963 8Q1964 8 1965 8Q1966 8 1967 8Q1968 9 1969 9Q1970 10 1971 11Q1972 11 1973 12Q1973 13 1974 14Q1975 15 1975 16Q1975 17 1976 18Q1976 20 1976 21Q1976 22 1975 23Q1975 24 1975 26Q1975 27 1974 28Q1974 29 1973 30Q1972 31 1971 32Q1970 33 1969 33Z"/><path d="M1973 49Q1971 50 1968 50Q1965 50 1963 48Q1960 47 1958 46Q1956 44 1954 42Q1952 40 1951 37Q1950 35 1949 33Q1948 31 1947 28Q1946 26 1945 24Q1944 21 1943 18Q1942 15 1942 12Q1942 9 1943 6Q1943 3 1945 1Q1947 0 1949 -2Q1951 -4 1954 -5Q1956 -6 1959 -6Q1961 -7 1964 -7Q1966 -6 1969 -6Q1971 -5 1973 -4Q1975 -2 1977 -1Q1979 0 1981 2Q1983 4 1984 6Q1986 8 1987 11Q1988 14 1988 16Q1988 19 1988 22Q1988 24 1988 27Q1987 30 1987 32Q1986 35 1985 38Q1984 40 1982 43Q1981 45 1978 47Q1976 49 1973 49Z"/><path d="M1976 59Q1972 60 1969 59Q1965 59 1962 57Q1958 56 1956 54Q1953 51 1950 49Q1948 46 1947 43Q1945 40 1943 37Q1942 34 1941 31Q1939 28 1938 25Q1937 21 1936 18Q1935 14 1935 10Q1934 6 1935 2Q1936 -1 1939 -4Q1941 -7 1944 -9Q1946 -12 1950 -13Q1953 -14 1956 -15Q1960 -15 1963 -15Q1966 -15 1969 -14Q1973 -13 1976 -11Q1978 -10 1981 -8Q1984 -5 1986 -3Q1988 0 1990 2Q1992 5 1993 8Q1995 12 1995 15Q1995 19 1995 22Q1995 26 1994 29Q1994 33 1993 36Q1992 40 1991 43Q1989 47 1987 50Q1985 53 1982 55Q1979 58 1976 59Z" stroke-dasharray="10 8"/><path d="M1981 78Q1976 80 1970 79Q1965 79 1960 77Q1955 74 1950 71Q1946 68 1943 63Q1939 59 1937 55Q1934 50 1932 46Q1930 41 1928 36Q1926 32 1924 27Q1922 22 1920 16Q1919 11 1918 5Q1918 0 1920 -6Q1921 -12 1925 -17Q1928 -22 1932 -25Q1937 -28 1941 -31Q1946 -33 1951 -33Q1956 -34 1961 -34Q1967 -34 1971 -32Q1976 -31 1981 -28Q1985 -26 1989 -22Q1993 -19 1997 -15Q2000 -11 2003 -7Q2006 -2 2008 2Q2009 7 2010 13Q2011 18 2010 23Q2010 29 2009 34Q2008 39 2007 45Q2006 50 2004 55Q2002 61 1998 65Q1995 70 1991 74Q1986 77 1981 78Z"/><path d="M1988 150Q1987 152 1985 153Q1984 154 1983 155Q1981 157 1980 158Q1978 158 1976 159Q1975 160 1973 161Q1971 162 1969 162Q1967 162 1965 162Q1963 162 1961 162Q1959 161 1957 160Q1955 159 1954 157Q1952 155 1951 153Q1950 151 1950 149Q1949 147 1949 145Q1949 143 1949 141Q1950 139 1950 137Q1951 135 1952 134Q1954 132 1955 131Q1957 129 1958 129Q1960 128 1962 127Q1964 127 1966 126Q1967 126 1969 126Q1971 126 1973 126Q1975 126 1977 127Q1979 127 1981 128Q1983 129 1985 130Q1987 132 1988 133Q1990 135 1990 137Q1991 140 1991 142Q1991 144 1990 146Q1989 148 1988 150Z"/><path d="M1999 154Q1997 156 1995 159Q1993 161 1990 163Q1988 164 1986 166Q1983 167 1981 169Q1978 170 1975 171Q1973 172 1969 173Q1966 174 1963 173Q1959 173 1956 172Q1953 171 1950 169Q1947 167 1944 165Q1942 162 1940 159Q1939 156 1938 153Q1937 149 1937 146Q1937 143 1937 140Q1938 136 1939 133Q1940 130 1942 128Q1944 125 1946 123Q1949 121 1952 120Q1955 118 1957 117Q1960 117 1963 116Q1966 116 1969 116Q1972 116 1975 116Q1979 116 1982 117Q1985 117 1988 119Q1991 120 1994 122Q1997 124 2000 127Q2002 130 2003 134Q2004 137 2004 141Q2004 144 2003 148Q2001 151 1999 154Z"/><path d="M2022 161Q2019 166 2015 170Q2011 174 2006 177Q2002 180 1998 183Q1994 186 1989 188Q1985 190 1980 192Q1975 194 1969 195Q1964 196 1958 196Q1952 196 1946 194Q1940 192 1935 189Q1930 186 1926 181Q1921 176 1919 171Q1916 166 1914 160Q1913 154 1912 148Q1912 142 1913 136Q1914 131 1916 125Q1918 120 1921 115Q1925 111 1929 107Q1933 104 1938 101Q1943 99 1948 98Q1954 96 1959 95Q1964 95 1969 94Q1975 94 1980 95Q1986 95 1991 96Q1997 98 2003 100Q2008 102 2013 106Q2019 110 2022 115Q2026 120 2028 126Q2030 132 2030 139Q2030 145 2028 151Q2026 157 2022 161Z"/><path d="M2068 33Q2067 33 2065 33Q2064 33 2062 33Q2061 33 2059 33Q2058 33 2057 33Q2055 32 2054 32Q2052 31 2051 30Q2050 29 2048 28Q2047 27 2046 25Q2045 24 2045 22Q2044 20 2044 18Q2045 16 2046 15Q2047 13 2049 12Q2051 11 2052 11Q2054 10 2055 10Q2057 9 2058 9Q2059 8 2061 8Q2062 8 2064 8Q2065 8 2066 8Q2068 8 2069 8Q2071 8 2073 9Q2074 9 2076 10Q2077 11 2078 12Q2079 14 2080 16Q2080 17 2080 19Q2080 21 2079 23Q2079 24 2078 26Q2078 27 2077 29Q2076 30 2074 31Q2073 32 2071 33Q2070 33 2068 33Z"/><path d="M2072 42Q2069 42 2067 42Q2064 42 2062 42Q2060 42 2057 41Q2055 41 2052 41Q2050 40 2048 39Q2045 38 2043 37Q2041 35 2039 33Q2037 31 2035 28Q2033 26 2032 23Q2032 20 2032 17Q2033 14 2035 11Q2037 9 2040 7Q2042 5 2045 4Q2048 3 2050 2Q2053 2 2055 1Q2057 0 2059 0Q2062 0 2064 0Q2066 0 2069 0Q2071 0 2074 0Q2076 0 2079 1Q2082 2 2084 3Q2087 5 2089 7Q2090 10 2091 12Q2092 15 2091 18Q2091 21 2090 24Q2089 27 2088 29Q2087 32 2086 34Q2084 36 2082 38Q2080 40 2077 41Q2074 42 2072 42Z"/><path d="M2075 48Q2071 49 2068 49Q2065 48 2062 48Q2059 48 2055 48Q2052 48 2049 47Q2046 46 2043 45Q2040 44 2037 42Q2034 40 2031 37Q2028 34 2026 31Q2024 28 2023 24Q2022 20 2023 16Q2023 12 2026 8Q2029 5 2032 3Q2036 0 2040 0Q2043 -1 2046 -2Q2049 -3 2052 -4Q2055 -5 2058 -6Q2061 -6 2064 -7Q2067 -7 2071 -7Q2074 -6 2077 -6Q2080 -5 2084 -4Q2088 -3 2091 -1Q2094 0 2097 3Q2099 6 2100 10Q2101 14 2100 17Q2100 21 2099 25Q2098 28 2096 32Q2095 35 2093 38Q2091 41 2088 44Q2085 46 2081 47Q2078 48 2075 48Z"/><path d="M2078 57Q2073 57 2069 57Q2065 57 2061 57Q2057 57 2053 56Q2049 56 2045 55Q2041 54 2037 52Q2033 51 2029 48Q2025 45 2022 42Q2018 38 2015 34Q2012 30 2011 25Q2009 19 2010 14Q2012 9 2015 4Q2018 0 2023 -2Q2028 -5 2033 -6Q2037 -8 2041 -9Q2045 -11 2049 -12Q2053 -13 2057 -14Q2061 -15 2065 -15Q2069 -15 2073 -15Q2077 -15 2081 -14Q2086 -14 2090 -12Q2095 -11 2099 -8Q2104 -5 2107 -1Q2110 2 2111 7Q2112 12 2111 17Q2111 22 2110 26Q2108 31 2106 35Q2104 40 2102 44Q2099 48 2095 51Q2092 54 2087 55Q2083 57 2078 57Z"/><path d="M2085 74Q2078 74 2072 74Q2066 73 2060 73Q2055 73 2049 72Q2043 72 2037 71Q2031 69 2025 67Q2019 64 2014 60Q2008 57 2003 52Q1998 47 1993 40Q1989 34 1987 26Q1985 19 1987 11Q1988 4 1993 -2Q1998 -8 2005 -12Q2012 -16 2019 -19Q2026 -21 2031 -23Q2037 -25 2043 -27Q2048 -29 2054 -30Q2060 -31 2065 -32Q2071 -32 2077 -32Q2083 -31 2090 -30Q2096 -29 2103 -27Q2110 -25 2116 -21Q2122 -18 2127 -12Q2131 -6 2133 0Q2134 8 2133 15Q2133 22 2131 29Q2129 36 2126 42Q2123 48 2119 54Q2116 60 2110 64Q2105 68 2098 71Q2092 73 2085 74Z"/><path d="M2012 192Q2009 190 2008 187Q2006 184 2006 180Q2006 177 2006 173Q2007 170 2008 167Q2010 164 2011 161Q2013 159 2015 156Q2017 154 2019 152Q2021 149 2024 148Q2026 146 2029 144Q2032 143 2035 141Q2038 140 2041 140Q2044 140 2048 140Q2051 140 2054 141Q2057 142 2060 144Q2062 146 2065 148Q2067 150 2069 153Q2070 156 2071 159Q2072 162 2072 166Q2072 169 2071 172Q2070 176 2068 178Q2066 181 2064 184Q2062 186 2059 188Q2056 190 2054 191Q2051 193 2048 194Q2046 195 2043 196Q2040 197 2037 197Q2034 198 2030 198Q2027 199 2024 198Q2020 198 2017 196Q2014 195 2012 192Z"/><path d="M1998 204Q1995 200 1993 195Q1990 191 1990 185Q1990 180 1991 175Q1992 170 1994 166Q1996 161 1998 157Q2001 153 2004 150Q2006 146 2010 143Q2013 140 2017 137Q2020 134 2024 132Q2028 129 2033 128Q2037 126 2042 126Q2047 125 2052 125Q2057 126 2061 128Q2066 129 2070 132Q2074 134 2077 138Q2081 141 2083 145Q2085 149 2087 154Q2088 159 2088 164Q2088 169 2087 174Q2085 178 2082 183Q2080 187 2076 191Q2073 194 2069 197Q2065 200 2061 202Q2057 204 2053 205Q2049 207 2045 209Q2040 210 2036 211Q2031 212 2026 213Q2021 213 2016 212Q2011 212 2006 209Q2002 207 1998 204Z"/><path d="M1991 209Q1987 205 1984 200Q1982 194 1981 188Q1981 182 1982 176Q1983 170 1986 165Q1988 160 1991 155Q1994 150 1997 146Q2001 142 2005 138Q2008 134 2013 131Q2017 128 2022 125Q2026 122 2032 120Q2037 119 2043 118Q2048 117 2054 118Q2060 118 2065 120Q2070 122 2075 125Q2080 128 2084 132Q2088 136 2091 141Q2094 146 2095 151Q2097 157 2097 163Q2097 169 2095 174Q2093 180 2090 185Q2087 190 2083 194Q2079 198 2074 202Q2070 205 2065 207Q2060 210 2055 212Q2051 214 2046 215Q2041 217 2035 218Q2030 220 2024 220Q2018 221 2012 220Q2006 219 2001 216Q1995 214 1991 209Z"/><path d="M2082 157Q2079 155 2076 153Q2074 151 2072 147Q2070 144 2069 140Q2069 135 2069 130Q2070 126 2071 121Q2072 116 2073 111Q2075 106 2076 101Q2078 95 2081 90Q2083 84 2088 79Q2092 74 2097 71Q2102 68 2107 67Q2112 66 2116 66Q2120 67 2124 67Q2128 68 2131 69Q2134 71 2137 72Q2139 74 2142 76Q2144 78 2147 81Q2149 83 2151 86Q2154 89 2155 93Q2157 97 2157 103Q2157 108 2155 114Q2153 120 2149 125Q2146 130 2141 134Q2136 138 2132 141Q2127 145 2123 147Q2119 150 2114 153Q2110 155 2106 157Q2102 159 2097 159Q2093 160 2089 159Q2086 158 2082 157Z"/><path d="M2075 168Q2071 166 2067 163Q2064 160 2062 156Q2059 152 2058 147Q2058 141 2058 135Q2059 129 2060 123Q2062 117 2064 111Q2065 104 2067 98Q2069 91 2073 84Q2076 77 2082 71Q2087 64 2093 61Q2100 57 2106 55Q2112 54 2117 54Q2123 55 2127 56Q2132 57 2136 58Q2140 60 2143 62Q2147 64 2150 67Q2153 69 2156 72Q2159 76 2162 79Q2165 83 2167 89Q2169 94 2169 100Q2169 107 2167 114Q2164 122 2159 128Q2154 135 2149 140Q2143 145 2137 149Q2131 153 2126 156Q2121 160 2115 163Q2110 166 2105 168Q2099 170 2094 171Q2089 172 2084 171Q2079 170 2075 168Z"/><path d="M2122 305Q2122 308 2122 311Q2121 315 2120 319Q2119 323 2118 327Q2116 330 2112 334Q2109 337 2105 338Q2100 339 2095 338Q2091 337 2087 335Q2083 332 2079 329Q2076 326 2074 323Q2072 320 2069 317Q2067 315 2065 312Q2063 309 2061 306Q2060 303 2058 300Q2057 297 2056 293Q2055 289 2055 285Q2056 282 2057 278Q2059 275 2062 272Q2064 269 2068 268Q2071 266 2075 265Q2079 263 2082 263Q2086 262 2090 261Q2094 260 2098 260Q2102 259 2106 261Q2111 262 2114 264Q2118 267 2120 270Q2122 274 2123 278Q2124 282 2124 285Q2125 289 2124 292Q2124 296 2123 299Q2123 302 2122 305Z"/><path d="M2134 308Q2133 313 2133 317Q2132 322 2131 327Q2130 333 2127 338Q2125 344 2120 348Q2115 352 2109 354Q2103 356 2096 354Q2090 353 2084 349Q2079 346 2075 342Q2070 337 2067 333Q2064 329 2061 325Q2058 322 2055 318Q2052 314 2050 310Q2047 306 2045 301Q2043 297 2042 292Q2041 287 2041 281Q2041 276 2044 271Q2046 266 2050 263Q2054 259 2059 256Q2063 254 2068 252Q2073 251 2079 249Q2084 248 2089 247Q2094 246 2100 245Q2106 245 2112 247Q2118 248 2123 252Q2128 256 2131 261Q2134 266 2135 271Q2137 276 2137 281Q2137 286 2137 291Q2136 296 2135 300Q2135 304 2134 308Z"/><path d="M2154 314Q2153 320 2153 327Q2152 334 2150 342Q2148 350 2144 359Q2141 367 2134 373Q2127 379 2117 382Q2108 384 2099 382Q2089 380 2081 375Q2072 370 2066 364Q2060 357 2055 351Q2050 345 2045 340Q2041 334 2037 328Q2033 323 2029 317Q2025 311 2022 304Q2019 297 2017 290Q2016 282 2016 274Q2017 266 2020 259Q2023 252 2029 246Q2035 241 2042 237Q2049 234 2057 231Q2064 229 2072 227Q2079 225 2087 223Q2095 221 2104 221Q2113 221 2122 223Q2130 225 2137 231Q2145 236 2149 243Q2154 251 2156 259Q2158 267 2159 274Q2159 282 2158 289Q2157 295 2156 302Q2155 308 2154 314Z"/><path d="M2161 105Q2160 103 2160 102Q2160 100 2160 99Q2160 97 2161 96Q2161 95 2162 93Q2163 92 2164 92Q2165 91 2167 91Q2168 90 2169 90Q2171 90 2172 90Q2173 90 2174 90Q2175 90 2176 89Q2178 89 2179 89Q2181 90 2182 90Q2184 91 2185 92Q2186 93 2187 94Q2188 96 2188 98Q2188 99 2187 101Q2187 102 2186 104Q2185 105 2184 106Q2183 107 2182 108Q2182 108 2181 109Q2180 110 2179 111Q2178 112 2177 113Q2176 114 2175 114Q2174 115 2172 115Q2171 115 2170 115Q2168 114 2167 114Q2166 113 2165 112Q2164 111 2163 110Q2162 109 2162 107Q2161 106 2161 105Z"/><path d="M2154 336Q2153 333 2152 330Q2151 327 2151 324Q2151 321 2151 318Q2152 315 2152 312Q2152 308 2153 305Q2154 301 2156 297Q2158 293 2161 289Q2164 286 2168 283Q2172 280 2177 279Q2181 277 2185 276Q2190 276 2194 275Q2197 275 2201 275Q2205 275 2209 275Q2213 275 2216 277Q2219 278 2221 281Q2223 283 2224 286Q2225 289 2226 293Q2226 296 2226 299Q2225 303 2223 307Q2222 310 2219 314Q2217 317 2214 320Q2211 323 2208 326Q2206 329 2203 332Q2200 335 2196 339Q2192 342 2188 345Q2183 347 2178 348Q2174 349 2170 349Q2165 348 2162 346Q2159 344 2157 341Q2155 339 2154 336Z"/><path d="M2141 347Q2139 343 2138 338Q2137 334 2137 330Q2137 326 2138 321Q2138 317 2139 312Q2139 308 2140 303Q2141 298 2144 292Q2146 287 2151 282Q2155 277 2161 273Q2166 269 2173 267Q2179 265 2185 264Q2191 263 2196 262Q2202 261 2207 261Q2213 261 2218 262Q2223 262 2227 264Q2232 266 2235 270Q2237 273 2239 277Q2241 281 2241 286Q2242 291 2241 296Q2240 301 2238 306Q2235 311 2232 315Q2229 320 2225 324Q2221 328 2217 332Q2213 337 2209 341Q2205 346 2199 350Q2194 355 2188 359Q2182 362 2175 364Q2169 365 2163 364Q2157 363 2153 360Q2149 358 2146 354Q2143 350 2141 347Z"/><path d="M2135 351Q2133 347 2132 342Q2131 338 2131 333Q2131 328 2131 323Q2132 318 2132 313Q2133 308 2134 302Q2135 296 2138 290Q2141 284 2146 278Q2151 272 2157 268Q2164 264 2171 261Q2178 259 2185 258Q2191 257 2198 256Q2204 255 2210 255Q2216 255 2222 255Q2228 256 2233 258Q2238 261 2241 265Q2244 268 2246 273Q2248 278 2248 283Q2249 288 2248 294Q2247 299 2244 305Q2242 311 2238 316Q2234 321 2230 326Q2225 331 2221 335Q2216 340 2212 345Q2207 350 2201 356Q2195 361 2188 365Q2181 369 2174 371Q2166 372 2160 371Q2153 370 2149 367Q2144 364 2141 360Q2137 356 2135 351Z"/><path d="M2121 363Q2118 358 2117 352Q2115 346 2115 340Q2115 333 2115 327Q2116 321 2117 314Q2118 307 2119 300Q2121 293 2124 285Q2128 277 2134 269Q2140 262 2149 256Q2157 251 2166 248Q2175 244 2184 243Q2193 241 2201 241Q2209 240 2217 239Q2225 239 2232 240Q2240 241 2246 244Q2252 247 2256 252Q2261 257 2263 263Q2265 269 2266 276Q2267 282 2265 290Q2264 297 2261 304Q2258 311 2253 318Q2248 325 2242 331Q2236 337 2231 343Q2225 349 2219 356Q2213 362 2205 369Q2198 376 2189 381Q2180 386 2170 388Q2160 390 2152 389Q2144 387 2138 383Q2132 379 2128 374Q2123 369 2121 363Z"/><path d="M2111 371Q2108 365 2106 358Q2105 351 2104 344Q2104 337 2105 330Q2106 322 2107 315Q2108 307 2109 299Q2111 290 2115 281Q2119 272 2126 263Q2134 255 2143 248Q2153 242 2163 238Q2174 235 2184 233Q2194 232 2203 231Q2212 230 2221 229Q2230 229 2239 230Q2247 231 2255 234Q2262 238 2267 243Q2271 249 2274 256Q2277 263 2278 271Q2278 278 2277 287Q2276 295 2272 303Q2268 312 2262 319Q2257 327 2250 334Q2244 341 2237 348Q2231 355 2224 362Q2217 370 2208 378Q2199 386 2189 392Q2178 398 2168 400Q2157 402 2147 401Q2138 399 2131 394Q2124 390 2119 384Q2114 378 2111 371Z"/><path d="M2252 128Q2251 128 2250 127Q2249 127 2248 127Q2247 126 2246 126Q2245 127 2244 126Q2243 126 2242 126Q2241 125 2240 125Q2239 124 2238 123Q2238 122 2237 120Q2236 119 2235 118Q2234 116 2234 115Q2233 113 2233 112Q2233 111 2234 109Q2234 108 2234 107Q2235 106 2236 105Q2236 104 2237 104Q2238 103 2239 103Q2240 103 2241 103Q2242 104 2243 105Q2244 106 2245 107Q2246 108 2247 108Q2248 109 2249 109Q2249 110 2251 110Q2252 111 2253 112Q2254 113 2255 115Q2255 116 2256 118Q2257 119 2257 121Q2257 123 2257 124Q2257 126 2256 127Q2256 128 2255 128Q2253 128 2252 128Z"/><path d="M2262 144Q2259 144 2256 143Q2254 141 2252 141Q2250 141 2248 141Q2246 141 2243 141Q2241 140 2239 139Q2236 138 2234 136Q2232 134 2230 132Q2228 129 2225 126Q2223 123 2222 120Q2220 117 2219 113Q2217 110 2217 106Q2217 103 2218 100Q2219 97 2220 94Q2221 92 2223 90Q2224 88 2226 86Q2228 84 2231 84Q2233 84 2236 85Q2239 86 2241 89Q2244 91 2246 93Q2248 96 2250 97Q2251 99 2254 100Q2256 101 2258 102Q2261 104 2264 107Q2266 109 2268 112Q2270 116 2272 120Q2273 123 2274 127Q2275 131 2275 135Q2274 139 2273 141Q2271 144 2268 144Q2265 145 2262 144Z"/><path d="M2272 160Q2267 159 2263 157Q2259 156 2256 155Q2252 154 2249 154Q2246 155 2243 154Q2239 154 2235 152Q2232 151 2228 147Q2224 144 2221 140Q2218 136 2215 132Q2211 127 2209 122Q2206 117 2204 111Q2202 106 2202 100Q2202 95 2203 90Q2204 86 2206 82Q2208 78 2210 75Q2213 71 2216 69Q2219 66 2223 66Q2226 65 2231 67Q2235 69 2239 73Q2243 77 2246 80Q2249 84 2252 86Q2255 89 2259 90Q2262 92 2266 95Q2270 97 2274 101Q2278 105 2282 110Q2285 115 2287 121Q2289 127 2291 134Q2292 140 2291 145Q2291 151 2288 155Q2286 159 2281 160Q2277 161 2272 160Z"/><path d="M2284 180Q2277 178 2271 176Q2265 173 2260 172Q2256 171 2251 171Q2247 172 2242 171Q2237 171 2231 168Q2226 166 2221 161Q2215 157 2211 151Q2206 145 2201 139Q2197 132 2193 125Q2188 117 2186 109Q2183 101 2183 93Q2183 85 2184 79Q2186 72 2189 67Q2192 61 2195 56Q2199 51 2203 48Q2207 44 2213 43Q2218 43 2225 46Q2231 49 2237 54Q2243 59 2247 64Q2252 70 2256 73Q2260 76 2265 79Q2270 82 2276 85Q2282 89 2287 94Q2293 100 2298 108Q2302 115 2306 124Q2309 132 2311 141Q2313 150 2312 158Q2312 167 2308 172Q2304 178 2298 180Q2291 181 2284 180Z"/><path d="M2291 190Q2282 188 2275 185Q2268 183 2263 181Q2258 180 2252 180Q2247 181 2241 180Q2235 180 2229 177Q2223 174 2217 169Q2211 163 2205 157Q2199 150 2194 143Q2189 135 2184 126Q2179 118 2176 108Q2173 98 2172 89Q2172 80 2174 72Q2176 65 2180 58Q2183 52 2187 46Q2191 41 2196 36Q2201 32 2207 31Q2214 30 2221 34Q2229 37 2236 43Q2242 50 2247 56Q2253 62 2258 66Q2262 70 2268 73Q2274 76 2281 80Q2288 84 2294 91Q2301 97 2307 106Q2312 115 2316 125Q2320 135 2322 145Q2324 156 2323 165Q2323 175 2318 182Q2314 188 2306 190Q2299 192 2291 190Z"/><path d="M2203 237Q2202 234 2203 231Q2204 228 2204 226Q2204 224 2204 222Q2204 220 2203 218Q2202 215 2201 212Q2201 210 2202 207Q2203 204 2204 202Q2206 200 2209 198Q2211 197 2214 196Q2216 194 2219 194Q2222 193 2225 192Q2228 192 2231 193Q2234 194 2237 195Q2239 197 2241 199Q2243 201 2245 203Q2247 206 2248 208Q2249 211 2249 214Q2249 217 2248 219Q2246 222 2245 224Q2243 226 2241 228Q2240 229 2239 231Q2238 233 2238 236Q2237 238 2236 242Q2235 245 2233 247Q2231 250 2228 252Q2225 253 2221 253Q2218 253 2214 252Q2211 251 2209 249Q2206 247 2205 244Q2203 241 2203 237Z"/><path d="M2187 250Q2187 244 2188 239Q2189 234 2189 230Q2190 226 2190 223Q2189 219 2187 215Q2186 211 2185 206Q2185 201 2186 196Q2187 192 2190 188Q2194 184 2198 181Q2202 179 2207 177Q2211 175 2216 173Q2221 172 2227 171Q2232 171 2237 172Q2242 173 2247 176Q2251 179 2255 182Q2258 186 2261 190Q2264 194 2266 199Q2268 204 2268 209Q2268 214 2266 218Q2264 223 2260 226Q2257 230 2255 233Q2252 235 2251 239Q2250 242 2249 247Q2248 251 2246 257Q2244 263 2240 267Q2237 272 2231 275Q2226 277 2220 278Q2214 278 2208 276Q2202 274 2198 270Q2193 266 2191 261Q2188 256 2187 250Z"/><path d="M2175 260Q2174 253 2175 246Q2176 239 2177 233Q2178 228 2177 223Q2177 219 2175 213Q2173 207 2172 201Q2171 194 2172 188Q2174 181 2179 176Q2183 171 2189 167Q2195 164 2201 161Q2207 158 2214 156Q2220 154 2228 154Q2235 153 2242 155Q2249 156 2255 160Q2261 164 2266 169Q2271 174 2275 179Q2279 185 2282 191Q2284 197 2284 204Q2284 211 2281 217Q2278 223 2274 228Q2269 233 2266 237Q2262 241 2261 245Q2259 250 2258 256Q2257 263 2254 270Q2252 278 2247 284Q2241 291 2234 294Q2226 298 2218 298Q2210 298 2202 295Q2195 293 2189 288Q2182 282 2179 275Q2175 268 2175 260Z" stroke-dasharray="10 8"/><path d="M2162 271Q2161 261 2162 252Q2164 244 2165 237Q2166 230 2165 224Q2164 218 2162 211Q2159 204 2158 196Q2157 187 2159 179Q2161 171 2167 164Q2172 158 2180 153Q2187 149 2195 145Q2203 142 2211 139Q2220 137 2229 136Q2238 135 2247 137Q2256 139 2263 144Q2271 149 2277 155Q2284 161 2289 168Q2294 175 2297 183Q2300 191 2300 200Q2300 208 2296 216Q2293 224 2287 230Q2282 236 2277 241Q2273 246 2271 251Q2268 257 2267 265Q2266 274 2263 283Q2259 293 2253 301Q2246 309 2237 313Q2227 318 2217 318Q2207 319 2197 315Q2187 312 2179 305Q2172 299 2167 290Q2162 281 2162 271Z"/><path d="M2152 279Q2151 267 2153 257Q2155 247 2156 239Q2157 231 2156 224Q2155 217 2152 209Q2149 201 2148 192Q2146 182 2149 172Q2151 163 2158 155Q2164 148 2173 142Q2181 137 2190 133Q2200 129 2209 126Q2219 123 2230 122Q2240 122 2250 124Q2261 126 2270 132Q2279 137 2286 145Q2293 152 2299 160Q2305 168 2309 177Q2312 187 2312 197Q2312 207 2308 216Q2304 225 2297 232Q2291 239 2286 244Q2280 250 2278 256Q2275 263 2274 272Q2272 282 2269 293Q2265 304 2257 313Q2250 323 2239 328Q2228 333 2216 334Q2204 334 2193 330Q2181 326 2172 319Q2163 311 2158 301Q2153 290 2152 279Z"/><path d="M2268 118Q2264 117 2260 116Q2257 115 2253 113Q2249 111 2246 109Q2243 107 2240 103Q2238 100 2236 95Q2235 91 2233 87Q2232 83 2231 78Q2229 73 2229 68Q2228 63 2229 57Q2231 52 2234 48Q2238 44 2242 42Q2247 40 2252 39Q2257 39 2261 39Q2266 39 2269 39Q2273 39 2277 40Q2281 40 2284 42Q2288 43 2291 45Q2294 46 2298 48Q2301 50 2305 53Q2309 55 2313 59Q2316 62 2318 67Q2320 72 2320 77Q2320 82 2317 87Q2315 92 2312 96Q2309 100 2306 103Q2302 107 2299 110Q2296 113 2293 116Q2289 118 2285 119Q2280 120 2276 120Q2272 119 2268 118Z"/><path d="M2266 134Q2261 133 2256 131Q2251 129 2245 127Q2240 125 2236 121Q2231 118 2228 113Q2224 108 2222 102Q2220 97 2218 91Q2216 85 2214 78Q2212 72 2211 64Q2211 57 2212 50Q2214 42 2219 36Q2224 31 2231 28Q2237 25 2244 24Q2251 24 2257 24Q2263 24 2268 24Q2274 25 2279 25Q2284 26 2289 28Q2294 29 2298 32Q2303 34 2308 37Q2313 39 2318 43Q2323 46 2328 51Q2333 56 2336 63Q2339 70 2338 77Q2338 84 2335 91Q2331 98 2327 103Q2323 108 2318 113Q2314 118 2310 122Q2305 127 2300 130Q2295 134 2289 135Q2283 137 2277 136Q2272 136 2266 134Z"/><path d="M2264 153Q2257 151 2250 148Q2243 146 2236 143Q2230 140 2223 136Q2217 131 2213 124Q2208 118 2205 111Q2202 103 2200 95Q2197 87 2195 79Q2192 70 2191 60Q2190 50 2192 40Q2195 30 2201 23Q2208 15 2217 11Q2226 8 2235 7Q2244 6 2252 6Q2260 6 2267 7Q2274 7 2281 8Q2288 9 2294 11Q2301 13 2307 16Q2313 19 2319 23Q2326 27 2333 31Q2340 36 2347 42Q2353 49 2357 58Q2361 67 2360 77Q2360 86 2355 95Q2351 104 2345 111Q2339 119 2334 125Q2328 131 2322 137Q2316 143 2309 148Q2303 153 2295 155Q2287 156 2279 156Q2271 155 2264 153Z"/><path d="M2265 301Q2264 300 2262 300Q2261 299 2260 298Q2258 297 2257 295Q2256 294 2255 293Q2254 291 2254 289Q2253 287 2253 285Q2253 283 2254 281Q2255 280 2256 278Q2258 277 2259 276Q2261 275 2263 275Q2265 275 2266 275Q2268 276 2269 276Q2270 276 2272 276Q2273 276 2274 275Q2275 274 2277 274Q2279 273 2281 273Q2283 273 2285 274Q2287 275 2288 276Q2290 278 2290 280Q2291 282 2291 284Q2290 286 2289 288Q2288 290 2287 291Q2285 293 2284 294Q2282 295 2281 295Q2280 296 2279 297Q2278 298 2276 299Q2275 300 2274 300Q2273 301 2271 301Q2270 302 2268 302Q2267 301 2265 301Z"/><path d="M2262 309Q2259 308 2257 307Q2255 305 2253 304Q2251 302 2249 300Q2247 298 2246 296Q2244 293 2244 290Q2243 287 2243 284Q2244 281 2245 278Q2246 276 2248 273Q2250 271 2253 270Q2256 269 2258 269Q2261 268 2264 269Q2266 269 2268 270Q2270 270 2272 270Q2273 269 2276 269Q2278 268 2281 267Q2283 266 2287 266Q2290 266 2293 267Q2296 268 2298 271Q2300 273 2301 276Q2302 280 2301 283Q2301 286 2299 289Q2298 292 2295 294Q2293 296 2291 298Q2288 299 2286 300Q2284 301 2283 303Q2281 304 2279 305Q2277 307 2275 308Q2273 309 2271 310Q2269 310 2266 310Q2264 310 2262 309Z"/><path d="M2377 111Q2376 112 2375 113Q2374 114 2372 114Q2371 115 2369 115Q2368 115 2366 115Q2364 115 2363 115Q2361 114 2359 113Q2357 113 2356 111Q2354 110 2353 108Q2352 107 2352 105Q2351 103 2351 101Q2351 99 2351 97Q2351 96 2351 94Q2351 92 2352 91Q2353 89 2355 88Q2356 87 2357 87Q2359 86 2360 86Q2361 85 2363 85Q2364 84 2365 84Q2367 83 2369 83Q2370 83 2372 83Q2374 83 2376 84Q2377 85 2379 86Q2380 87 2382 89Q2383 91 2384 93Q2385 94 2385 96Q2385 98 2384 100Q2384 102 2383 103Q2382 105 2381 106Q2380 107 2379 108Q2378 110 2377 111Z"/><path d="M2384 118Q2382 120 2380 122Q2378 123 2376 124Q2373 125 2371 125Q2368 126 2365 125Q2363 125 2360 125Q2357 124 2354 123Q2351 122 2348 120Q2346 118 2344 115Q2342 112 2342 109Q2341 106 2340 103Q2340 99 2340 96Q2340 93 2340 91Q2341 88 2343 85Q2344 83 2346 82Q2348 80 2351 79Q2353 78 2355 77Q2358 77 2360 76Q2362 75 2364 74Q2367 73 2369 72Q2372 72 2375 73Q2378 73 2381 75Q2384 76 2386 78Q2389 80 2391 83Q2393 85 2395 88Q2396 92 2396 95Q2396 98 2395 101Q2394 104 2393 106Q2391 109 2390 111Q2388 113 2386 115Q2385 117 2384 118Z"/><path d="M2393 129Q2390 132 2387 135Q2384 137 2380 139Q2377 140 2373 140Q2368 141 2364 140Q2360 140 2355 139Q2351 139 2346 137Q2342 135 2338 131Q2334 128 2331 124Q2328 119 2327 114Q2326 109 2325 105Q2324 100 2324 95Q2324 90 2325 86Q2326 82 2329 78Q2331 74 2334 72Q2338 69 2342 68Q2345 67 2349 65Q2352 64 2355 63Q2359 61 2363 60Q2366 58 2371 57Q2375 57 2380 58Q2384 59 2389 61Q2393 63 2397 66Q2401 69 2404 74Q2408 78 2410 83Q2412 87 2413 93Q2413 98 2411 102Q2410 107 2407 111Q2405 114 2402 117Q2399 121 2397 124Q2395 126 2393 129Z"/><path d="M2415 246Q2413 249 2410 252Q2407 255 2404 257Q2400 259 2396 260Q2392 262 2387 262Q2383 262 2378 261Q2373 259 2369 257Q2365 254 2362 251Q2359 248 2356 246Q2353 244 2350 243Q2346 241 2341 240Q2337 239 2331 236Q2326 233 2323 230Q2319 226 2316 221Q2314 217 2314 212Q2314 207 2315 203Q2316 199 2319 196Q2322 193 2327 192Q2332 191 2338 191Q2344 192 2348 194Q2353 196 2357 197Q2361 198 2365 199Q2368 199 2372 199Q2376 199 2380 200Q2384 201 2388 203Q2392 205 2395 208Q2398 211 2401 214Q2404 217 2407 221Q2410 225 2413 229Q2415 233 2416 238Q2416 242 2415 246Z"/><path d="M2433 253Q2431 259 2427 262Q2423 266 2418 269Q2412 272 2407 274Q2401 276 2395 276Q2389 276 2382 274Q2376 272 2370 268Q2364 265 2360 260Q2356 256 2352 253Q2348 251 2343 249Q2338 248 2332 246Q2325 244 2318 240Q2311 237 2306 231Q2301 226 2298 220Q2295 213 2294 207Q2294 201 2295 195Q2297 189 2301 185Q2306 181 2312 179Q2319 178 2327 179Q2335 180 2342 182Q2349 185 2354 186Q2359 188 2364 189Q2368 189 2374 189Q2379 189 2385 190Q2391 191 2396 194Q2401 197 2406 201Q2410 205 2414 210Q2419 214 2423 219Q2427 225 2430 230Q2433 236 2434 242Q2435 248 2433 253Z"/><path d="M2448 260Q2445 266 2440 271Q2435 275 2429 279Q2423 282 2416 285Q2409 287 2402 287Q2394 288 2386 285Q2378 283 2371 278Q2364 273 2358 268Q2353 263 2349 260Q2344 256 2338 254Q2332 253 2324 250Q2316 248 2307 243Q2299 239 2292 233Q2286 226 2282 218Q2279 211 2278 203Q2277 195 2279 188Q2281 181 2287 176Q2292 171 2300 169Q2309 167 2318 168Q2328 170 2336 173Q2345 176 2351 178Q2358 180 2363 180Q2369 181 2375 181Q2382 181 2389 182Q2396 184 2403 187Q2409 191 2415 196Q2420 201 2425 206Q2430 212 2435 218Q2440 224 2444 232Q2448 239 2449 246Q2451 253 2448 260Z"/><path d="M2455 263Q2452 270 2447 275Q2441 280 2435 284Q2428 287 2420 290Q2413 292 2405 293Q2396 293 2387 291Q2379 288 2371 283Q2363 278 2358 272Q2352 267 2347 263Q2342 259 2336 257Q2329 255 2320 252Q2312 250 2302 245Q2293 240 2286 233Q2279 226 2275 218Q2271 209 2270 201Q2269 193 2272 185Q2274 177 2280 172Q2285 166 2295 164Q2304 162 2314 163Q2324 165 2334 168Q2343 171 2350 174Q2357 176 2363 176Q2369 177 2376 177Q2383 177 2391 178Q2399 180 2406 184Q2413 188 2419 193Q2425 199 2430 205Q2436 211 2441 218Q2447 224 2451 232Q2455 240 2457 248Q2458 256 2455 263Z"/><path d="M2487 276Q2484 286 2476 293Q2468 300 2459 305Q2450 310 2440 313Q2430 317 2418 317Q2407 318 2395 314Q2383 311 2373 304Q2362 297 2355 289Q2347 282 2340 277Q2333 271 2324 269Q2316 266 2304 262Q2292 259 2279 252Q2267 246 2257 236Q2247 226 2242 215Q2236 204 2235 192Q2234 181 2237 170Q2240 160 2248 152Q2256 145 2269 142Q2281 139 2295 141Q2309 143 2322 147Q2334 152 2344 155Q2353 158 2362 159Q2370 159 2380 159Q2389 159 2400 161Q2410 164 2420 169Q2430 174 2438 182Q2446 189 2454 197Q2461 206 2468 215Q2476 224 2482 235Q2488 245 2489 256Q2491 267 2487 276Z"/></g></svg>
<div class="r" style="left:12px;top:20px;width:2332px;height:160px;background:#f2f2f2;border-radius:8px;box-shadow:inset 0 0 0 1.5px #e6e2de,0 2px 3px rgba(0,0,0,0.18);"></div>
<div class="r" style="left:46px;top:54px;width:92px;height:92px;background:#2f72a0;border-radius:8px;"></div>
<svg class="r" style="left:0;top:0" width="200" height="200" viewBox="0 0 200 200"><ellipse cx="91.9" cy="91.2" rx="9.7" ry="10.8" fill="#fff"/><path d="M84.6 102.8 Q92 108 99.5 102.8 C106 105.2 111.4 108.5 111.4 114.5 Q111.4 119 107.4 119 L76.6 119 Q72.6 119 72.6 114.5 C72.6 108.5 78 105.2 84.6 102.8 Z" fill="#fff"/></svg>
<div class="t" style="left:153.6px;transform-origin:0 0;top:58.94px;font-size:25.31px;line-height:30.37px;font-weight:normal;color:#2574d4;transform:scaleX(0.9524);">CONFIGURATION</div>
<div class="t" style="left:153.3px;transform-origin:0 0;top:91.94px;font-size:42.11px;line-height:50.53px;font-weight:bold;color:#080707;transform:scaleX(0.9524);">Utilisateurs</div>
<div class="r" style="left:2338px;top:60px;width:40px;height:65.5px;background:rgba(255,255,255,0.35);border-radius:7px;"></div>
<div class="r" style="left:2338px;top:60px;width:6px;height:65.5px;background:#f7f7f7;border-radius:7px 0 0 7px;box-shadow:-2px 0 3px rgba(0,0,0,0.12);"></div>
<div class="r" style="left:2346px;top:68px;width:30px;height:50px;background:rgba(47,112,160,0.85);border-radius:4px;"></div>
<svg class="r" style="left:2340px;top:80px" width="28" height="32" viewBox="0 0 28 32"><path d="M13.8 16.5 L26 5 L26 26.8 Z" fill="rgba(255,255,255,0.45)"/></svg>
<div class="r" style="left:12px;top:204px;width:2332px;height:1184px;background:#fff;border-radius:7px;box-shadow:inset 0 0 0 2px #ebe9e7;"></div>
<div class="clip">
<div class="r" style="left:38px;top:282px;width:2280px;height:2px;background:#ececec;"></div>
<div class="r" style="left:38px;top:345px;width:2280px;height:2px;background:#ececec;"></div>
<div class="r" style="left:38px;top:389px;width:2280px;height:2px;background:#ececec;"></div>
<div class="r" style="left:38px;top:433px;width:2280px;height:2px;background:#ececec;"></div>
<div class="r" style="left:38px;top:496px;width:2280px;height:2px;background:#ececec;"></div>
<div class="r" style="left:38px;top:690px;width:2280px;height:2px;background:#ececec;"></div>
<div class="r" style="left:38px;top:731px;width:2280px;height:2px;background:#ececec;"></div>
<div class="r" style="left:1178px;top:537px;width:1140px;height:2px;background:#ececec;"></div>
<div class="r" style="left:1178px;top:578px;width:1140px;height:2px;background:#ececec;"></div>
<div class="r" style="left:1178px;top:641px;width:1140px;height:2px;background:#ececec;"></div>
<div class="t" style="right:1940px;text-align:right;transform-origin:100% 0;top:201.17px;font-size:21.68px;line-height:26.02px;font-weight:bold;color:#4a4a56;transform:scaleX(0.9524);">Inscription de l'application :</div>
<div class="t" style="right:1940px;text-align:right;transform-origin:100% 0;top:225.47px;font-size:21.68px;line-height:26.02px;font-weight:bold;color:#4a4a56;transform:scaleX(0.9524);">Authentificateur de mot de passe à</div>
<div class="t" style="right:1940px;text-align:right;transform-origin:100% 0;top:249.77px;font-size:21.68px;line-height:26.02px;font-weight:bold;color:#4a4a56;transform:scaleX(0.9524);">usage unique</div>
<div class="info" style="left:468px;top:202px;"><svg width="30" height="29" viewBox="0 0 30 29"><circle cx="15.5" cy="8.9" r="1.8" fill="#3380da"/><path d="M12.3 11.9 L17.6 11.9 L17.6 20.4 L18.3 20.4 L18.3 22.1 L12.2 22.1 L12.2 20.4 L13.7 20.4 L13.7 13.4 L12.3 13.4 Z" fill="#3380da"/></svg></div>
<div class="t" style="right:1940px;text-align:right;transform-origin:100% 0;top:288.87px;font-size:21.68px;line-height:26.02px;font-weight:bold;color:#4a4a56;transform:scaleX(0.9524);">Inscription de l'application : Salesforce</div>
<div class="t" style="right:1940px;text-align:right;transform-origin:100% 0;top:313.17px;font-size:21.68px;line-height:26.02px;font-weight:bold;color:#4a4a56;transform:scaleX(0.9524);">Authenticator</div>
<div class="info" style="left:468px;top:290.3px;"><svg width="30" height="29" viewBox="0 0 30 29"><circle cx="15.5" cy="8.9" r="1.8" fill="#3380da"/><path d="M12.3 11.9 L17.6 11.9 L17.6 20.4 L18.3 20.4 L18.3 22.1 L12.2 22.1 L12.2 20.4 L13.7 20.4 L13.7 13.4 L12.3 13.4 Z" fill="#3380da"/></svg></div>
<div class="t" style="right:1940px;text-align:right;transform-origin:100% 0;top:352.17px;font-size:21.68px;line-height:26.02px;font-weight:bold;color:#4a4a56;transform:scaleX(0.9524);">Clé de sécurité (U2F)</div>
<div class="info" style="left:468px;top:354px;"><svg width="30" height="29" viewBox="0 0 30 29"><circle cx="15.5" cy="8.9" r="1.8" fill="#3380da"/><path d="M12.3 11.9 L17.6 11.9 L17.6 20.4 L18.3 20.4 L18.3 22.1 L12.2 22.1 L12.2 20.4 L13.7 20.4 L13.7 13.4 L12.3 13.4 Z" fill="#3380da"/></svg></div>
<div class="t" style="right:1940px;text-align:right;transform-origin:100% 0;top:396.17px;font-size:21.68px;line-height:26.02px;font-weight:bold;color:#4a4a56;transform:scaleX(0.9524);">Lightning Login</div>
<div class="info" style="left:468px;top:397.7px;"><svg width="30" height="29" viewBox="0 0 30 29"><circle cx="15.5" cy="8.9" r="1.8" fill="#3380da"/><path d="M12.3 11.9 L17.6 11.9 L17.6 20.4 L18.3 20.4 L18.3 22.1 L12.2 22.1 L12.2 20.4 L13.7 20.4 L13.7 13.4 L12.3 13.4 Z" fill="#3380da"/></svg></div>
<div class="t" style="right:1940px;text-align:right;transform-origin:100% 0;top:440.17px;font-size:21.68px;line-height:26.02px;font-weight:bold;color:#4a4a56;transform:scaleX(0.9524);">Code de vérification temporaire (expire</div>
<div class="t" style="right:1940px;text-align:right;transform-origin:100% 0;top:464.47px;font-size:21.68px;line-height:26.02px;font-weight:bold;color:#4a4a56;transform:scaleX(0.9524);">dans 1 à 24 heures)</div>
<div class="t" style="left:468px;transform-origin:0 0;top:447.76px;font-size:23.92px;line-height:28.7px;font-weight:normal;color:#000;transform:scaleX(0.9524);">[<u>Générer</u>]</div>
<div class="info" style="left:571px;top:441.8px;"><svg width="30" height="29" viewBox="0 0 30 29"><circle cx="15.5" cy="8.9" r="1.8" fill="#3380da"/><path d="M12.3 11.9 L17.6 11.9 L17.6 20.4 L18.3 20.4 L18.3 22.1 L12.2 22.1 L12.2 20.4 L13.7 20.4 L13.7 13.4 L12.3 13.4 Z" fill="#3380da"/></svg></div>
<div class="t" style="right:1940px;text-align:right;transform-origin:100% 0;top:738.17px;font-size:21.68px;line-height:26.02px;font-weight:bold;color:#4a4a56;transform:scaleX(0.9524);">Créé par</div>
<div class="t" style="left:468px;transform-origin:0 0;top:739.26px;font-size:23.92px;line-height:28.7px;font-weight:normal;color:#000;transform:scaleX(0.9524);"><u>Sophie Destais</u>, 29/12/2020 14:45</div>
<div class="t" style="right:800px;text-align:right;transform-origin:100% 0;top:201.17px;font-size:21.68px;line-height:26.02px;font-weight:bold;color:#4a4a56;transform:scaleX(0.9524);">Extension</div>
<div class="t" style="right:800px;text-align:right;transform-origin:100% 0;top:288.87px;font-size:21.68px;line-height:26.02px;font-weight:bold;color:#4a4a56;transform:scaleX(0.9524);">Télécopie</div>
<div class="t" style="right:800px;text-align:right;transform-origin:100% 0;top:352.17px;font-size:21.68px;line-height:26.02px;font-weight:bold;color:#4a4a56;transform:scaleX(0.9524);">Téléphone mobile</div>
<div class="t" style="right:800px;text-align:right;transform-origin:100% 0;top:395.87px;font-size:21.68px;line-height:26.02px;font-weight:bold;color:#4a4a56;transform:scaleX(0.9524);">Codage des e-mails</div>
<div class="t" style="left:1608px;transform-origin:0 0;top:395.96px;font-size:23.92px;line-height:28.7px;font-weight:normal;color:#000;transform:scaleX(0.9524);">Unicode (UTF-8)</div>
<div class="t" style="right:800px;text-align:right;transform-origin:100% 0;top:439.87px;font-size:21.68px;line-height:26.02px;font-weight:bold;color:#4a4a56;transform:scaleX(0.9524);">Espace de données utilisé</div>
<div class="t" style="left:1608px;transform-origin:0 0;top:440.06px;font-size:23.92px;line-height:28.7px;font-weight:normal;color:#000;transform:scaleX(0.9524);">30 KB</div>
<div class="t" style="left:1683px;transform-origin:0 0;top:440.06px;font-size:23.92px;line-height:28.7px;font-weight:normal;color:#000;transform:scaleX(0.9524);">[<u>Afficher</u>]</div>
<div class="t" style="right:800px;text-align:right;transform-origin:100% 0;top:503.17px;font-size:21.68px;line-height:26.02px;font-weight:bold;color:#4a4a56;transform:scaleX(0.9524);">Espace de fichiers utilisé</div>
<div class="t" style="left:1608px;transform-origin:0 0;top:503.26px;font-size:23.92px;line-height:28.7px;font-weight:normal;color:#000;transform:scaleX(0.9524);">1,7 MB</div>
<div class="t" style="left:1693px;transform-origin:0 0;top:503.26px;font-size:23.92px;line-height:28.7px;font-weight:normal;color:#000;transform:scaleX(0.9524);">[<u>Afficher</u>]</div>
<div class="t" style="right:800px;text-align:right;transform-origin:100% 0;top:544.17px;font-size:21.68px;line-height:26.02px;font-weight:bold;color:#4a4a56;transform:scaleX(0.9524);">Dernière connexion</div>
<div class="t" style="left:1608px;transform-origin:0 0;top:544.26px;font-size:23.92px;line-height:28.7px;font-weight:normal;color:#000;transform:scaleX(0.9524);">12/01/2021 16:26</div>
<div class="t" style="right:800px;text-align:right;transform-origin:100% 0;top:585.67px;font-size:21.68px;line-height:26.02px;font-weight:bold;color:#4a4a56;transform:scaleX(0.9524);">Dernière modification ou</div>
<div class="t" style="right:800px;text-align:right;transform-origin:100% 0;top:609.97px;font-size:21.68px;line-height:26.02px;font-weight:bold;color:#4a4a56;transform:scaleX(0.9524);">réinitialisation du mot de passe</div>
<div class="t" style="left:1608px;transform-origin:0 0;top:585.26px;font-size:23.92px;line-height:28.7px;font-weight:normal;color:#000;transform:scaleX(0.9524);">29/12/2020 14:52</div>
<div class="t" style="right:800px;text-align:right;transform-origin:100% 0;top:648.17px;font-size:21.68px;line-height:26.02px;font-weight:bold;color:#4a4a56;transform:scaleX(0.9524);">Tentatives de connexion échouées</div>
<div class="t" style="left:1608px;transform-origin:0 0;top:656.76px;font-size:23.92px;line-height:28.7px;font-weight:normal;color:#000;transform:scaleX(0.9524);">0</div>
<div class="info" style="left:1627px;top:649px;"><svg width="30" height="29" viewBox="0 0 30 29"><circle cx="15.5" cy="8.9" r="1.8" fill="#3380da"/><path d="M12.3 11.9 L17.6 11.9 L17.6 20.4 L18.3 20.4 L18.3 22.1 L12.2 22.1 L12.2 20.4 L13.7 20.4 L13.7 13.4 L12.3 13.4 Z" fill="#3380da"/></svg></div>
<div class="t" style="right:800px;text-align:right;transform-origin:100% 0;top:697.97px;font-size:21.68px;line-height:26.02px;font-weight:bold;color:#4a4a56;transform:scaleX(0.9524);">Individu</div>
<div class="t" style="right:800px;text-align:right;transform-origin:100% 0;top:738.17px;font-size:21.68px;line-height:26.02px;font-weight:bold;color:#4a4a56;transform:scaleX(0.9524);">Modifié par</div>
<div class="t" style="left:1608px;transform-origin:0 0;top:739.26px;font-size:23.92px;line-height:28.7px;font-weight:normal;color:#000;transform:scaleX(0.9524);"><u>Sophie Destais</u>, 29/12/2020 14:45</div>
<div class="btn" style="left:749px;top:791.7px;width:94px;height:36px;font-size:21.42px;line-height:32px;"><span style="display:inline-block;transform:scaleX(0.9524);-webkit-text-stroke:0.25px currentColor;">Modifier</span></div>
<div class="btn" style="left:854px;top:791.7px;width:98.5px;height:36px;font-size:21.42px;line-height:32px;"><span style="display:inline-block;transform:scaleX(0.9524);-webkit-text-stroke:0.25px currentColor;">Partager</span></div>
<div class="btn" style="left:963.5px;top:791.7px;width:290px;height:36px;font-size:21.42px;line-height:32px;"><span style="display:inline-block;transform:scaleX(0.9524);-webkit-text-stroke:0.25px currentColor;">Réinitialiser le mot de passe</span></div>
<div class="btn" style="left:1264.5px;top:791.7px;width:121px;height:36px;font-size:21.42px;line-height:32px;"><span style="display:inline-block;transform:scaleX(0.9524);-webkit-text-stroke:0.25px currentColor;">Suspendre</span></div>
<div class="sec" style="left:38px;top:889px;width:2280px;height:129.5px;"></div>
<div class="t" style="left:49px;transform-origin:0 0;top:903.83px;font-size:28.28px;line-height:33.93px;font-weight:bold;color:#000;transform:scaleX(0.9524);">Attributions d'ensemble d'autorisations</div>
<div class="btn" style="left:749px;top:907.2px;width:247px;height:28px;font-size:21.53px;line-height:24px;"><span style="display:inline-block;transform:scaleX(0.9524);-webkit-text-stroke:0.25px currentColor;">Modifier les attributions</span></div>
<div class="t" style="right:118px;text-align:right;transform-origin:100% 0;top:911.98px;font-size:21.79px;line-height:26.14px;font-weight:normal;color:#015ba7;transform:scaleX(0.9524);">Attributions d'ensemble d'autorisations - Aide</div>
<div class="help" style="left:2264px;top:905px;"><svg width="30" height="30" viewBox="0 0 30 30"><path d="M11 12.9 C11 10.2 13 9.2 15.4 9.2 C18 9.2 19.9 10.5 19.9 12.7 C19.9 15 17.9 15.8 16.6 17 C15.6 17.9 15.3 18.6 15.3 20.6" fill="none" stroke="#2f7bd8" stroke-width="2.9" stroke-linecap="butt"/><circle cx="15.3" cy="23.3" r="1.8" fill="#2f7bd8"/></svg></div>
<div class="nrec" style="left:52px;top:959.3px;width:2252px;height:45.200000000000045px;"></div>
<div class="t" style="left:64.8px;transform-origin:0 0;top:967.46px;font-size:23.92px;line-height:28.7px;font-weight:normal;color:#000;transform:scaleX(0.9524);">Aucun enregistrement à afficher</div>
<div class="sec" style="left:38px;top:1039px;width:2280px;height:141px;"></div>
<div class="t" style="left:49px;transform-origin:0 0;top:1044.73px;font-size:28.28px;line-height:33.93px;font-weight:bold;color:#000;transform:scaleX(0.9524);">Attributions d'ensemble d'autorisations : activation</div>
<div class="t" style="left:49px;transform-origin:0 0;top:1076.53px;font-size:28.28px;line-height:33.93px;font-weight:bold;color:#000;transform:scaleX(0.9524);">requise</div>
<div class="btn" style="left:749px;top:1063.5px;width:247px;height:28px;font-size:21.53px;line-height:24px;"><span style="display:inline-block;transform:scaleX(0.9524);-webkit-text-stroke:0.25px currentColor;">Modifier les attributions</span></div>
<div class="t" style="right:118px;text-align:right;transform-origin:100% 0;top:1067.58px;font-size:21.79px;line-height:26.14px;font-weight:normal;color:#015ba7;transform:scaleX(0.9524);">Attributions d'ensemble d'autorisations : activation requise - Aide</div>
<div class="help" style="left:2264px;top:1061.6px;"><svg width="30" height="30" viewBox="0 0 30 30"><path d="M11 12.9 C11 10.2 13 9.2 15.4 9.2 C18 9.2 19.9 10.5 19.9 12.7 C19.9 15 17.9 15.8 16.6 17 C15.6 17.9 15.3 18.6 15.3 20.6" fill="none" stroke="#2f7bd8" stroke-width="2.9" stroke-linecap="butt"/><circle cx="15.3" cy="23.3" r="1.8" fill="#2f7bd8"/></svg></div>
<div class="nrec" style="left:52px;top:1121.5px;width:2252px;height:45.0px;"></div>
<div class="t" style="left:64.8px;transform-origin:0 0;top:1129.66px;font-size:23.92px;line-height:28.7px;font-weight:normal;color:#000;transform:scaleX(0.9524);">Aucun enregistrement à afficher</div>
<div class="sec" style="left:38px;top:1201px;width:2280px;height:130.5px;"></div>
<div class="t" style="left:49px;transform-origin:0 0;top:1216.63px;font-size:28.28px;line-height:33.93px;font-weight:bold;color:#000;transform:scaleX(0.9524);">Attributions de groupe d'ensembles d'autorisations</div>
<div class="btn" style="left:749px;top:1219.3px;width:247px;height:28px;font-size:21.53px;line-height:24px;"><span style="display:inline-block;transform:scaleX(0.9524);-webkit-text-stroke:0.25px currentColor;">Modifier les attributions</span></div>
<div class="t" style="right:118px;text-align:right;transform-origin:100% 0;top:1224.18px;font-size:21.79px;line-height:26.14px;font-weight:normal;color:#015ba7;transform:scaleX(0.9524);">Attributions de groupe d'ensembles d'autorisations - Aide</div>
<div class="help" style="left:2264px;top:1218px;"><svg width="30" height="30" viewBox="0 0 30 30"><path d="M11 12.9 C11 10.2 13 9.2 15.4 9.2 C18 9.2 19.9 10.5 19.9 12.7 C19.9 15 17.9 15.8 16.6 17 C15.6 17.9 15.3 18.6 15.3 20.6" fill="none" stroke="#2f7bd8" stroke-width="2.9" stroke-linecap="butt"/><circle cx="15.3" cy="23.3" r="1.8" fill="#2f7bd8"/></svg></div>
<div class="nrec" style="left:52px;top:1272px;width:2252px;height:45.5px;"></div>
<div class="t" style="left:64.8px;transform-origin:0 0;top:1280.16px;font-size:23.92px;line-height:28.7px;font-weight:normal;color:#000;transform:scaleX(0.9524);">Aucun enregistrement à afficher</div>
<div class="sec" style="left:38px;top:1352px;width:2280px;height:130px;"></div>
<div class="t" style="left:49px;transform-origin:0 0;top:1367.33px;font-size:28.28px;line-height:33.93px;font-weight:bold;color:#000;transform:scaleX(0.9524);">Attributions de licence d'ensemble d'autorisations</div>
<div class="btn" style="left:749px;top:1370.1px;width:247px;height:28px;font-size:21.53px;line-height:24px;"><span style="display:inline-block;transform:scaleX(0.9524);-webkit-text-stroke:0.25px currentColor;">Modifier les attributions</span></div>
<div class="t" style="right:118px;text-align:right;transform-origin:100% 0;top:1374.68px;font-size:21.79px;line-height:26.14px;font-weight:normal;color:#015ba7;transform:scaleX(0.9524);">Attributions de licence d'ensemble d'autorisations - Aide</div>
<div class="help" style="left:2264px;top:1368.2px;"><svg width="30" height="30" viewBox="0 0 30 30"><path d="M11 12.9 C11 10.2 13 9.2 15.4 9.2 C18 9.2 19.9 10.5 19.9 12.7 C19.9 15 17.9 15.8 16.6 17 C15.6 17.9 15.3 18.6 15.3 20.6" fill="none" stroke="#2f7bd8" stroke-width="2.9" stroke-linecap="butt"/><circle cx="15.3" cy="23.3" r="1.8" fill="#2f7bd8"/></svg></div>
<div class="nrec" style="left:52px;top:1423px;width:2252px;height:45px;"></div>
<div class="t" style="left:64.8px;transform-origin:0 0;top:1431.16px;font-size:23.92px;line-height:28.7px;font-weight:normal;color:#000;transform:scaleX(0.9524);">Aucun enregistrement à afficher</div>
<div class="r" style="left:2287.5px;top:450px;width:30.5px;height:65.5px;background:#fff;border-radius:8px 0 0 8px;box-shadow:-1px 1px 3px rgba(0,0,0,0.22);"></div>
<div class="r" style="left:2296.3px;top:457.8px;width:21.7px;height:50px;background:#a6c3ce;border-radius:3px 0 0 3px;"></div>
<svg class="r" style="left:2296px;top:466px" width="22" height="34" viewBox="0 0 22 34"><defs><linearGradient id="g1" x1="0" y1="0" x2="1" y2="1"><stop offset="0" stop-color="#fff"/><stop offset="1" stop-color="#d6dfe3"/></linearGradient></defs><path d="M7 17 L21.7 4.5 L21.7 29.5 Z" fill="url(#g1)"/></svg>
<div class="r" style="left:2287.5px;top:496px;width:30.5px;height:2px;background:rgba(0,0,0,0.06);"></div>
<div class="r" style="left:2277.5px;top:525.6px;width:40.5px;height:84.4px;background:#fff;border-radius:8px 0 0 8px;box-shadow:-1px 1px 3px rgba(0,0,0,0.28);"></div>
<div class="r" style="left:2286px;top:533.8px;width:32px;height:68.2px;background:#2e6b8a;border-radius:3px 0 0 3px;"></div>
<svg class="r" style="left:2286px;top:550px" width="30" height="34" viewBox="0 0 30 34"><defs><linearGradient id="g2" x1="0" y1="0" x2="1" y2="1"><stop offset="0" stop-color="#fff"/><stop offset="1" stop-color="#bdbdbd"/></linearGradient></defs><path d="M6.9 16.5 L20.5 5.5 L20.5 29.3 Z" fill="url(#g2)"/></svg>
</div>
<div class="red" style="left:18px;top:847px;width:2284px;height:188.5px;"></div>
</body></html>
